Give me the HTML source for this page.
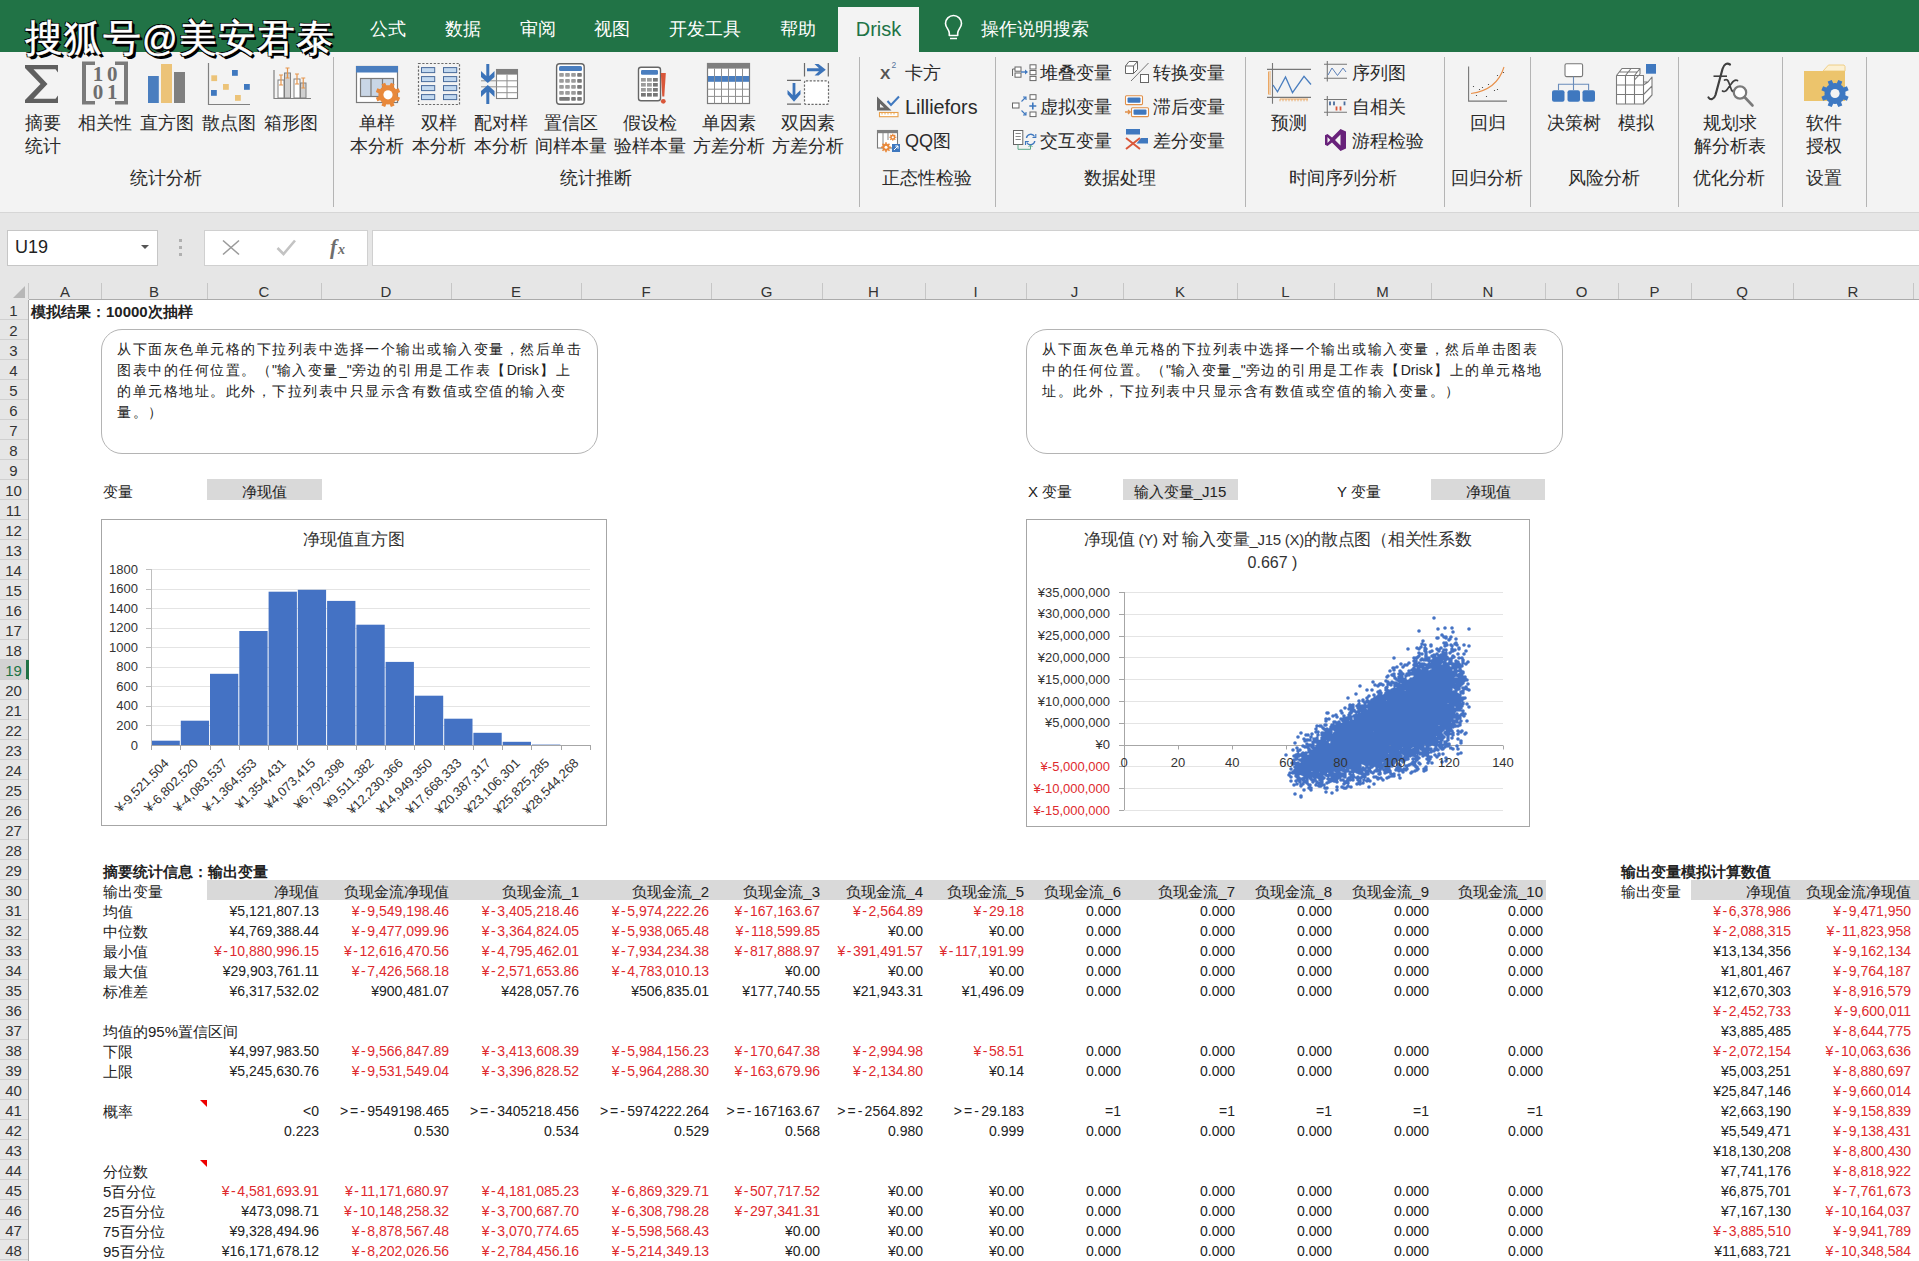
<!DOCTYPE html><html><head><meta charset="utf-8"><style>
*{box-sizing:border-box;margin:0;padding:0}
html,body{width:1919px;height:1261px;overflow:hidden;background:#fff;font-family:"Liberation Sans",sans-serif;color:#000}
.a{position:absolute}
.t{position:absolute;white-space:nowrap}
.c{position:absolute;white-space:nowrap;height:20px;line-height:23px;font-size:15px;color:#222;padding:0 2px}
.n{font-size:14px}
.dm{margin:0 1.5px}
.r{text-align:right}
.red{color:#de2a2e}
.ctr{text-align:center}
.rl{position:absolute;font-size:18px;color:#2a2a2a;white-space:nowrap;line-height:23px;text-align:center}
.sep{position:absolute;width:1px;background:#b4b4b4;top:57px;height:150px}
</style></head><body>
<div class="a" style="left:0;top:0;width:1919px;height:52px;background:#217346"></div>
<div class="t" style="left:328px;width:120px;text-align:center;top:18px;font-size:18px;line-height:22px;color:#fff">公式</div>
<div class="t" style="left:403px;width:120px;text-align:center;top:18px;font-size:18px;line-height:22px;color:#fff">数据</div>
<div class="t" style="left:478px;width:120px;text-align:center;top:18px;font-size:18px;line-height:22px;color:#fff">审阅</div>
<div class="t" style="left:552px;width:120px;text-align:center;top:18px;font-size:18px;line-height:22px;color:#fff">视图</div>
<div class="t" style="left:645px;width:120px;text-align:center;top:18px;font-size:18px;line-height:22px;color:#fff">开发工具</div>
<div class="t" style="left:738px;width:120px;text-align:center;top:18px;font-size:18px;line-height:22px;color:#fff">帮助</div>
<div class="a" style="left:838px;top:7px;width:81px;height:46px;background:#f3f3f3"></div>
<div class="t" style="left:838px;width:81px;text-align:center;top:18px;font-size:20px;line-height:22px;color:#217346">Drisk</div>
<div class="t" style="left:981px;top:18px;font-size:18px;line-height:22px;color:#fff">操作说明搜索</div>
<div class="a" style="left:0;top:52px;width:1919px;height:161px;background:#f3f3f3;border-bottom:1px solid #d6d6d6"></div>
<div class="sep" style="left:333px"></div>
<div class="sep" style="left:859px"></div>
<div class="sep" style="left:995px"></div>
<div class="sep" style="left:1245px"></div>
<div class="sep" style="left:1444px"></div>
<div class="sep" style="left:1530px"></div>
<div class="sep" style="left:1678px"></div>
<div class="sep" style="left:1782px"></div>
<div class="sep" style="left:1866px"></div>
<div class="rl" style="left:86px;width:160px;top:167px">统计分析</div>
<div class="rl" style="left:516px;width:160px;top:167px">统计推断</div>
<div class="rl" style="left:847px;width:160px;top:167px">正态性检验</div>
<div class="rl" style="left:1040px;width:160px;top:167px">数据处理</div>
<div class="rl" style="left:1263px;width:160px;top:167px">时间序列分析</div>
<div class="rl" style="left:1407px;width:160px;top:167px">回归分析</div>
<div class="rl" style="left:1524px;width:160px;top:167px">风险分析</div>
<div class="rl" style="left:1649px;width:160px;top:167px">优化分析</div>
<div class="rl" style="left:1744px;width:160px;top:167px">设置</div>
<div class="rl" style="left:-17px;width:120px;top:112px">摘要<br>统计</div>
<div class="rl" style="left:45px;width:120px;top:112px">相关性</div>
<div class="rl" style="left:107px;width:120px;top:112px">直方图</div>
<div class="rl" style="left:169px;width:120px;top:112px">散点图</div>
<div class="rl" style="left:231px;width:120px;top:112px">箱形图</div>
<div class="rl" style="left:317px;width:120px;top:112px">单样<br>本分析</div>
<div class="rl" style="left:379px;width:120px;top:112px">双样<br>本分析</div>
<div class="rl" style="left:441px;width:120px;top:112px">配对样<br>本分析</div>
<div class="rl" style="left:511px;width:120px;top:112px">置信区<br>间样本量</div>
<div class="rl" style="left:590px;width:120px;top:112px">假设检<br>验样本量</div>
<div class="rl" style="left:669px;width:120px;top:112px">单因素<br>方差分析</div>
<div class="rl" style="left:748px;width:120px;top:112px">双因素<br>方差分析</div>
<div class="rl" style="left:1229px;width:120px;top:112px">预测</div>
<div class="rl" style="left:1428px;width:120px;top:112px">回归</div>
<div class="rl" style="left:1514px;width:120px;top:112px">决策树</div>
<div class="rl" style="left:1576px;width:120px;top:112px">模拟</div>
<div class="rl" style="left:1670px;width:120px;top:112px">规划求<br>解分析表</div>
<div class="rl" style="left:1764px;width:120px;top:112px">软件<br>授权</div>
<div class="t" style="left:905px;top:61px;font-size:18px;line-height:24px;color:#2a2a2a">卡方</div>
<div class="t" style="left:905px;top:95px;font-size:19.8px;line-height:24px;color:#2a2a2a">Lilliefors</div>
<div class="t" style="left:905px;top:129px;font-size:18px;line-height:24px;color:#2a2a2a">QQ图</div>
<div class="t" style="left:1040px;top:61px;font-size:18px;line-height:24px;color:#2a2a2a">堆叠变量</div>
<div class="t" style="left:1040px;top:95px;font-size:18px;line-height:24px;color:#2a2a2a">虚拟变量</div>
<div class="t" style="left:1040px;top:129px;font-size:18px;line-height:24px;color:#2a2a2a">交互变量</div>
<div class="t" style="left:1153px;top:61px;font-size:18px;line-height:24px;color:#2a2a2a">转换变量</div>
<div class="t" style="left:1153px;top:95px;font-size:18px;line-height:24px;color:#2a2a2a">滞后变量</div>
<div class="t" style="left:1153px;top:129px;font-size:18px;line-height:24px;color:#2a2a2a">差分变量</div>
<div class="t" style="left:1352px;top:61px;font-size:18px;line-height:24px;color:#2a2a2a">序列图</div>
<div class="t" style="left:1352px;top:95px;font-size:18px;line-height:24px;color:#2a2a2a">自相关</div>
<div class="t" style="left:1352px;top:129px;font-size:18px;line-height:24px;color:#2a2a2a">游程检验</div>
<svg class="a" style="left:0;top:0" width="1919" height="300" viewBox="0 0 1919 300">
<path d="M25 65 H58 V72.5 L55.5 69.2 H33.5 L47.5 84 L33.5 98.8 H55.5 L58 95.5 V103 H25 V100 L40.5 84 L25 68 Z" fill="#5f5f5f"/>
<path d="M82 61.5 H95 V65 H86 V101 H95 V104.5 H82 Z" fill="#7a7a7a"/>
<path d="M128 61.5 H115 V65 H124 V101 H115 V104.5 H128 Z" fill="#7a7a7a"/>
<text x="98" y="81" text-anchor="middle" font-family="Liberation Serif" font-weight="bold" font-size="21" fill="#6e6e6e">1</text>
<text x="112.3" y="81" text-anchor="middle" font-family="Liberation Serif" font-weight="bold" font-size="21" fill="#6e6e6e">0</text>
<text x="98" y="98.8" text-anchor="middle" font-family="Liberation Serif" font-weight="bold" font-size="21" fill="#6e6e6e">0</text>
<text x="112.3" y="98.8" text-anchor="middle" font-family="Liberation Serif" font-weight="bold" font-size="21" fill="#6e6e6e">1</text>
<rect x="148" y="76" width="10.8" height="27" fill="#4a7ebf"/>
<rect x="161" y="64" width="11" height="39" fill="#ecc378"/>
<rect x="174" y="72" width="11" height="31" fill="#7f7f7f"/>
<path d="M208.5 63 V104.5 H250" fill="none" stroke="#808080" stroke-width="1.2"/>
<rect x="211.3" y="75.3" width="5.8" height="5.8" fill="#ecc378"/>
<rect x="232" y="70" width="5.8" height="5.8" fill="#3f78bf"/>
<rect x="223" y="84" width="5.8" height="5.8" fill="#ecc378"/>
<rect x="244" y="84" width="5.8" height="5.8" fill="#3f78bf"/>
<rect x="211" y="90" width="5.8" height="5.8" fill="#3f78bf"/>
<rect x="235" y="95" width="5.8" height="5.8" fill="#ecc378"/>
<path d="M274 70 V98.5 H311" fill="none" stroke="#808080" stroke-width="1.2"/>
<rect x="278" y="80" width="6" height="18" fill="#fff" stroke="#808080" stroke-width="1"/>
<path d="M281.0 75 V85 M279.0 75 H283.0 M279.0 85 H283.0" stroke="#e5954c" stroke-width="1.2" fill="none"/>
<rect x="284.5" y="73" width="6" height="25" fill="#d0d0d0" stroke="#808080" stroke-width="1"/>
<path d="M287.5 68 V78 M285.5 68 H289.5 M285.5 78 H289.5" stroke="#e5954c" stroke-width="1.2" fill="none"/>
<rect x="294" y="79" width="6" height="19" fill="#fff" stroke="#808080" stroke-width="1"/>
<path d="M297.0 74 V84 M295.0 74 H299.0 M295.0 84 H299.0" stroke="#e5954c" stroke-width="1.2" fill="none"/>
<rect x="300.5" y="83" width="5.5" height="15" fill="#d0d0d0" stroke="#808080" stroke-width="1"/>
<path d="M303.25 78 V88 M301.25 78 H305.25 M301.25 88 H305.25" stroke="#e5954c" stroke-width="1.2" fill="none"/>
<rect x="356.5" y="66.5" width="41" height="36" fill="#fff" stroke="#7a7a7a" stroke-width="1.2"/>
<rect x="356" y="66" width="42" height="6.5" fill="#4a7ebf"/>
<rect x="360.5" y="78.5" width="33" height="18" fill="#c9d6e6" stroke="#7a7a7a" stroke-width="1.2"/>
<path d="M371 78.5 V96.5 M382.5 78.5 V96.5" stroke="#7a7a7a" stroke-width="1.2"/>
<path d="M397.60 94.80 L397.46 96.45 L400.15 97.72 L398.66 101.33 L395.85 100.32 L394.79 101.59 L393.52 102.65 L394.53 105.46 L390.92 106.95 L389.65 104.26 L388.00 104.40 L386.35 104.26 L385.08 106.95 L381.47 105.46 L382.48 102.65 L381.21 101.59 L380.15 100.32 L377.34 101.33 L375.85 97.72 L378.54 96.45 L378.40 94.80 L378.54 93.15 L375.85 91.88 L377.34 88.27 L380.15 89.28 L381.21 88.01 L382.48 86.95 L381.47 84.14 L385.08 82.65 L386.35 85.34 L388.00 85.20 L389.65 85.34 L390.92 82.65 L394.53 84.14 L393.52 86.95 L394.79 88.01 L395.85 89.28 L398.66 88.27 L400.15 91.88 L397.46 93.15Z" fill="#e8883a"/><circle cx="388" cy="94.8" r="4.6" fill="#fff"/>
<rect x="418.5" y="63.5" width="41" height="41" fill="none" stroke="#6a6a6a" stroke-width="1.2" stroke-dasharray="2.2 1.6"/>
<rect x="421.5" y="67.6" width="13.2" height="5" fill="#c3d9f0" stroke="#4a6c9c" stroke-width="1"/>
<rect x="443.5" y="67.6" width="13.2" height="5" fill="#c3d9f0" stroke="#4a6c9c" stroke-width="1"/>
<rect x="421.5" y="76.6" width="13.2" height="5" fill="#c3d9f0" stroke="#4a6c9c" stroke-width="1"/>
<rect x="443.5" y="76.6" width="13.2" height="5" fill="#c3d9f0" stroke="#4a6c9c" stroke-width="1"/>
<rect x="421.5" y="85.6" width="13.2" height="5" fill="#c3d9f0" stroke="#4a6c9c" stroke-width="1"/>
<rect x="443.5" y="85.6" width="13.2" height="5" fill="#c3d9f0" stroke="#4a6c9c" stroke-width="1"/>
<rect x="421.5" y="94.6" width="13.2" height="5" fill="#c3d9f0" stroke="#4a6c9c" stroke-width="1"/>
<rect x="443.5" y="94.6" width="13.2" height="5" fill="#c3d9f0" stroke="#4a6c9c" stroke-width="1"/>
<rect x="496.5" y="69.5" width="21" height="29" fill="#fff" stroke="#808080" stroke-width="1.1"/>
<rect x="496" y="69" width="22" height="5.6" fill="#7f7f7f"/>
<path d="M481 80.8 H517.5 M481 86.8 H517.5 M496.5 92.7 H517.5 M507 74.6 V98.5" stroke="#909090" stroke-width="1"/>
<path d="M486.3 64 H489.3 V76 L494.5 71 V77 L487.8 83 L481 77 V71 L486.3 76 Z" fill="#3b73b9"/>
<path d="M486.3 104 H489.3 V92 L494.5 97 V91 L487.8 85 L481 91 V97 L486.3 92 Z" fill="#3b73b9"/>
<rect x="556.6" y="63.8" width="27.6" height="40.4" rx="3" fill="#fff" stroke="#666" stroke-width="1.4"/>
<rect x="559" y="66" width="23" height="5" rx="1.5" fill="#4a7ebf"/>
<rect x="559.2" y="73" width="4.6" height="3.8" rx="0.8" fill="#9c9c9c"/>
<rect x="565.2" y="73" width="4.6" height="3.8" rx="0.8" fill="#9c9c9c"/>
<rect x="571.2" y="73" width="4.6" height="3.8" rx="0.8" fill="#9c9c9c"/>
<rect x="577.2" y="73" width="4.6" height="3.8" rx="0.8" fill="#7a7a7a"/>
<rect x="559.2" y="79" width="4.6" height="3.8" rx="0.8" fill="#9c9c9c"/>
<rect x="565.2" y="79" width="4.6" height="3.8" rx="0.8" fill="#9c9c9c"/>
<rect x="571.2" y="79" width="4.6" height="3.8" rx="0.8" fill="#9c9c9c"/>
<rect x="577.2" y="79" width="4.6" height="3.8" rx="0.8" fill="#7a7a7a"/>
<rect x="559.2" y="85" width="4.6" height="3.8" rx="0.8" fill="#9c9c9c"/>
<rect x="565.2" y="85" width="4.6" height="3.8" rx="0.8" fill="#9c9c9c"/>
<rect x="571.2" y="85" width="4.6" height="3.8" rx="0.8" fill="#9c9c9c"/>
<rect x="577.2" y="85" width="4.6" height="3.8" rx="0.8" fill="#7a7a7a"/>
<rect x="559.2" y="91" width="4.6" height="3.8" rx="0.8" fill="#9c9c9c"/>
<rect x="565.2" y="91" width="4.6" height="3.8" rx="0.8" fill="#9c9c9c"/>
<rect x="571.2" y="91" width="4.6" height="3.8" rx="0.8" fill="#9c9c9c"/>
<rect x="577.2" y="91" width="4.6" height="3.8" rx="0.8" fill="#7a7a7a"/>
<rect x="559.2" y="97" width="10.6" height="3.8" rx="0.8" fill="#7a7a7a"/>
<rect x="571.2" y="97" width="4.6" height="3.8" rx="0.8" fill="#7a7a7a"/>
<rect x="577.2" y="97" width="4.6" height="3.8" rx="0.8" fill="#7a7a7a"/>
<rect x="638.5" y="67.2" width="22" height="33.6" rx="2.5" fill="#fff" stroke="#666" stroke-width="1.4"/>
<rect x="641" y="70" width="17" height="4.8" rx="1.2" fill="#4a7ebf"/>
<rect x="641" y="78" width="4.8" height="3.6" fill="#9c9c9c"/>
<rect x="647" y="78" width="4.8" height="3.6" fill="#9c9c9c"/>
<rect x="653" y="78" width="4.8" height="3.6" fill="#777"/>
<rect x="641" y="83" width="4.8" height="3.6" fill="#9c9c9c"/>
<rect x="647" y="83" width="4.8" height="3.6" fill="#9c9c9c"/>
<rect x="653" y="83" width="4.8" height="3.6" fill="#777"/>
<rect x="641" y="88" width="4.8" height="3.6" fill="#9c9c9c"/>
<rect x="647" y="88" width="4.8" height="3.6" fill="#9c9c9c"/>
<rect x="653" y="88" width="4.8" height="3.6" fill="#777"/>
<rect x="641" y="93" width="4.8" height="3.6" fill="#777"/>
<rect x="647" y="93" width="4.8" height="3.6" fill="#777"/>
<rect x="653" y="93" width="4.8" height="3.6" fill="#777"/>
<path d="M660.8 73 H665.8 L664.3 96.5 H662.3 Z" fill="#d9573a"/><circle cx="663.3" cy="101.3" r="2.4" fill="#d9573a"/>
<rect x="707.5" y="63.5" width="42" height="40" fill="#fff" stroke="#7a7a7a" stroke-width="1.2"/>
<rect x="707" y="63" width="43" height="5.6" fill="#7f7f7f"/>
<path d="M714.5 68.5 V103.5" stroke="#909090" stroke-width="1"/>
<path d="M721.5 68.5 V103.5" stroke="#909090" stroke-width="1"/>
<path d="M728.5 68.5 V103.5" stroke="#909090" stroke-width="1"/>
<path d="M735.5 68.5 V103.5" stroke="#909090" stroke-width="1"/>
<path d="M742.5 68.5 V103.5" stroke="#909090" stroke-width="1"/>
<path d="M707.5 89.2 H749.5 M707.5 96.4 H749.5" stroke="#909090" stroke-width="1"/>
<rect x="708" y="76" width="6.2" height="5.8" fill="#4a7ebf"/>
<rect x="715" y="76" width="6.2" height="5.8" fill="#4a7ebf"/>
<rect x="722" y="76" width="6.2" height="5.8" fill="#4a7ebf"/>
<rect x="729" y="76" width="6.2" height="5.8" fill="#4a7ebf"/>
<rect x="736" y="76" width="6.2" height="5.8" fill="#4a7ebf"/>
<rect x="743" y="76" width="6.2" height="5.8" fill="#4a7ebf"/>
<path d="M807 68.3 H819 L814.5 64 H818.5 L825.8 69.7 L818.5 75.5 H814.5 L819 71.2 H807 Z" fill="#3b73b9"/>
<path d="M804.5 63 V76.6 M828.3 63 V76.6 M787 80.4 H801 M787 104.2 H801" stroke="#6a6a6a" stroke-width="1.2"/>
<path d="M792.6 83 H795.4 V95 L800.5 90 V94.3 L794 101.8 L787.5 94.3 V90 L792.6 95 Z" fill="#3b73b9"/>
<rect x="804.5" y="80.8" width="24" height="23.6" rx="1.5" fill="#fff" stroke="#6a6a6a" stroke-width="1.2" stroke-dasharray="2.2 1.5"/>
<text x="880" y="79" font-family="Liberation Sans" font-weight="bold" font-size="15.5" fill="#555">X</text>
<text x="891.5" y="67.5" font-family="Liberation Sans" font-size="8.5" fill="#56739c">2</text>
<path d="M877 96.5 V110.5 H891.5 Z M880 103.8 V107.6 H884 Z" fill="#666" fill-rule="evenodd"/>
<path d="M887.5 101 L891 105 L899 96.5" fill="none" stroke="#3f78bf" stroke-width="2"/>
<rect x="879.5" y="112.5" width="18.5" height="4.2" fill="#fff" stroke="#e8a04b" stroke-width="1.1"/>
<path d="M882 112.5 V114.5 M885 112.5 V114.5 M888 112.5 V114.5 M891 112.5 V114.5 M894 112.5 V114.5" stroke="#e8a04b" stroke-width="0.9"/>
<rect x="877.5" y="130.5" width="20" height="17.5" fill="#fff" stroke="#7a7a7a" stroke-width="1.1"/>
<rect x="877" y="130" width="21" height="3.2" fill="#7f7f7f"/>
<path d="M883 133 V147 M888 133 V140" stroke="#888" stroke-width="1"/>
<path d="M889.33 145.82 L889.51 146.41 L890.94 146.42 L890.94 147.98 L889.51 147.99 L889.33 148.58 L889.04 149.13 L890.05 150.14 L888.94 151.25 L887.93 150.24 L887.38 150.53 L886.79 150.71 L886.78 152.14 L885.22 152.14 L885.21 150.71 L884.62 150.53 L884.07 150.24 L883.06 151.25 L881.95 150.14 L882.96 149.13 L882.67 148.58 L882.49 147.99 L881.06 147.98 L881.06 146.42 L882.49 146.41 L882.67 145.82 L882.96 145.27 L881.95 144.26 L883.06 143.15 L884.07 144.16 L884.62 143.87 L885.21 143.69 L885.22 142.26 L886.78 142.26 L886.79 143.69 L887.38 143.87 L887.93 144.16 L888.94 143.15 L890.05 144.26 L889.04 145.27Z" fill="#e8883a"/><circle cx="886" cy="147.2" r="1.5" fill="#fff"/>
<path d="M895.20 136.31 L895.34 136.73 L896.36 136.74 L896.36 137.86 L895.34 137.87 L895.20 138.29 L895.00 138.69 L895.71 139.42 L894.92 140.21 L894.19 139.50 L893.79 139.70 L893.37 139.84 L893.36 140.86 L892.24 140.86 L892.23 139.84 L891.81 139.70 L891.41 139.50 L890.68 140.21 L889.89 139.42 L890.60 138.69 L890.40 138.29 L890.26 137.87 L889.24 137.86 L889.24 136.74 L890.26 136.73 L890.40 136.31 L890.60 135.91 L889.89 135.18 L890.68 134.39 L891.41 135.10 L891.81 134.90 L892.23 134.76 L892.24 133.74 L893.36 133.74 L893.37 134.76 L893.79 134.90 L894.19 135.10 L894.92 134.39 L895.71 135.18 L895.00 135.91Z" fill="#e8883a"/><circle cx="892.8" cy="137.3" r="1.1" fill="#fff"/>
<rect x="892" y="144" width="8" height="8" fill="#3f78bf"/><path d="M894 150 L898 146 M895.3 146 H898 V148.7" stroke="#fff" stroke-width="1" fill="none"/>
<path d="M1012.5 69 V76 M1012.5 69 H1015" stroke="#666" stroke-width="1" fill="none"/>
<rect x="1015" y="67" width="6" height="4.2" fill="#fff" stroke="#666" stroke-width="1"/>
<rect x="1015" y="73" width="6" height="4.2" fill="#fff" stroke="#666" stroke-width="1"/>
<path d="M1021 72 H1026" stroke="#3f78bf" stroke-width="1.4"/><path d="M1025 69.5 L1028 72 L1025 74.5 Z" fill="#3f78bf"/>
<rect x="1030" y="64.8" width="6" height="4.2" fill="#fff" stroke="#666" stroke-width="1"/>
<rect x="1030" y="70.5" width="6" height="4.2" fill="#fff" stroke="#666" stroke-width="1"/>
<rect x="1030" y="76.4" width="6" height="4.2" fill="#fff" stroke="#666" stroke-width="1"/>
<rect x="1012.5" y="103" width="6.5" height="5" fill="#fff" stroke="#666" stroke-width="1"/>
<path d="M1021.5 101.5 L1026 97 M1023 97 H1026 V100 M1021.5 110.5 L1026 115 M1023 115 H1026 V112" stroke="#3f78bf" stroke-width="1.1" fill="none"/>
<path d="M1032.8 102.5 V109.5 M1029.3 106 H1036.3" stroke="#3f78bf" stroke-width="1.6"/>
<rect x="1030" y="94.7" width="6" height="4.6" fill="#fff" stroke="#666" stroke-width="1"/>
<rect x="1030" y="112" width="6" height="4.6" fill="#fff" stroke="#666" stroke-width="1"/>
<rect x="1013.5" y="130.5" width="9.3" height="14" fill="#fff" stroke="#666" stroke-width="1"/>
<path d="M1015.5 133.5 H1020.8 M1015.5 136.5 H1020.8 M1015.5 139.5 H1020.8" stroke="#888" stroke-width="1"/>
<path d="M1026.5 138 A4.3 4.3 0 0 1 1034.5 136.5 M1034.8 141 A4.3 4.3 0 0 1 1026.8 142.5" stroke="#3f78bf" stroke-width="1.4" fill="none"/>
<path d="M1035.8 134 V137.5 H1032.5 M1025.5 145 V141.5 H1028.8" stroke="#3f78bf" stroke-width="1.1" fill="none"/>
<path d="M1018 144.5 V149.3 H1030.5 V145.5 M1028.5 147 L1030.5 145 L1032.5 147" stroke="#5aa889" stroke-width="1" fill="none"/>
<path d="M1125.5 66 H1133.5 V73.5 H1125.5 Z M1125.5 66 L1129 61.5 H1137.5 L1133.5 66 M1137.5 61.5 V69.5 L1133.5 73.5" fill="#fff" stroke="#666" stroke-width="1"/>
<path d="M1131 81 L1148.5 63" stroke="#666" stroke-width="0.9"/>
<rect x="1140.5" y="74.5" width="8" height="8" fill="#fff" stroke="#666" stroke-width="1"/>
<rect x="1125.5" y="95.8" width="17" height="8.8" rx="1" fill="#fff" stroke="#e0904a" stroke-width="1.1"/>
<rect x="1127.5" y="97.5" width="13" height="5.2" rx="1" fill="#3f78bf"/>
<rect x="1131.5" y="107.8" width="17" height="8.8" rx="1" fill="#fff" stroke="#e0904a" stroke-width="1.1"/>
<rect x="1133.5" y="109.5" width="13" height="5.2" rx="1" fill="#3f78bf"/>
<path d="M1125 112 H1129.5 M1128 110 L1130.2 112 L1128 114" stroke="#e0904a" stroke-width="1.3" fill="none"/>
<rect x="1126" y="129" width="14" height="5.5" fill="#3f78bf"/>
<path d="M1141 138 H1148 V143.5 H1136.5 Z" fill="#3f78bf"/>
<path d="M1126 138 L1140 149 M1126 149 L1140 138" stroke="#d9573a" stroke-width="2" fill="none"/>
<path d="M1272.5 63 V103.7 M1267 69.4 H1311 M1267 97.4 H1311" stroke="#777" stroke-width="1.1" fill="none"/>
<path d="M1273 85 L1277.5 91.8 L1285.5 77 L1292.5 92.6 L1304 76.4 L1311 84.5" stroke="#4a7ebf" stroke-width="1.3" fill="none"/>
<path d="M1268 72 H1271 M1268 74 H1271 M1268 76 H1271 M1268 78 H1271 M1268 80 H1271 M1268 82 H1271 M1268 84 H1271 M1268 86 H1271 M1268 88 H1271 M1268 90 H1271 M1268 92 H1271 M1268 94 H1271 M1268.5 72 V94 M1280 99 V101.3 M1283 99 V101.3 M1286 99 V101.3 M1289 99 V101.3 M1292 99 V101.3 M1295 99 V101.3 M1298 99 V101.3 M1301 99 V101.3 M1304 99 V101.3 M1307 99 V101.3 M1280 99 H1308" stroke="#eaa35a" stroke-width="0.9" fill="none"/>
<path d="M1327.3 61 V81.6 M1324 64.3 H1347 M1324 78.3 H1347" stroke="#777" stroke-width="1.1" fill="none"/>
<path d="M1328 75 L1332 68 L1337.5 75.5 L1343 68 L1346 72" stroke="#5a7fb8" stroke-width="1" fill="none"/>
<path d="M1327.3 96 V116 M1324 99.5 H1347 M1324 112.3 H1347" stroke="#777" stroke-width="1.1" fill="none"/>
<rect x="1329.1" y="101.5" width="1.8" height="3.8" fill="#4a6c9c"/>
<rect x="1333.1" y="101.5" width="1.8" height="3.8" fill="#4a6c9c"/>
<rect x="1343.6" y="101.5" width="1.8" height="3.8" fill="#4a6c9c"/>
<rect x="1335.6" y="106.5" width="1.8" height="4" fill="#d9573a"/>
<rect x="1339.6" y="106.5" width="1.8" height="4" fill="#d9573a"/>
<path d="M1340.5 129 L1346 131.5 V148.5 L1340.5 151 L1332 142.5 L1327.5 146 L1325 144.8 V135.2 L1327.5 134 L1332 137.5 Z M1340.5 134.5 L1335 140 L1340.5 145.5 Z M1327.5 137 V143 L1330.3 140 Z" fill="#68217a" fill-rule="evenodd"/>
<path d="M1468.6 66.4 V101.1 H1507" stroke="#777" stroke-width="1.1" fill="none"/>
<path d="M1471 93.5 Q1497 90 1504 67" stroke="#e8904a" stroke-width="1.1" fill="none"/>
<circle cx="1473.5" cy="86.5" r="0.6" fill="#333"/>
<circle cx="1479.5" cy="89.5" r="0.6" fill="#333"/>
<circle cx="1482.5" cy="87.5" r="0.6" fill="#333"/>
<circle cx="1488.5" cy="84.5" r="0.6" fill="#333"/>
<circle cx="1476.5" cy="95.5" r="0.6" fill="#333"/>
<circle cx="1486.5" cy="96.5" r="0.6" fill="#333"/>
<circle cx="1494.5" cy="90.5" r="0.6" fill="#333"/>
<circle cx="1497.5" cy="89.5" r="0.6" fill="#333"/>
<circle cx="1497.5" cy="75.5" r="0.6" fill="#333"/>
<circle cx="1503.5" cy="72.5" r="0.6" fill="#333"/>
<rect x="1565" y="63.8" width="17.6" height="12.8" rx="1.5" fill="#fff" stroke="#777" stroke-width="1.1"/>
<path d="M1573.5 76.6 V90 M1558.5 90 V84.3 H1588.6 V90" stroke="#6a8cba" stroke-width="1.1" fill="none"/>
<rect x="1552" y="90.2" width="12.5" height="11.6" rx="2" fill="#3f78bf"/>
<rect x="1567.5" y="90.2" width="12.5" height="11.6" rx="2" fill="#3f78bf"/>
<rect x="1582.5" y="90.2" width="12.5" height="11.6" rx="2" fill="#3f78bf"/>
<path d="M1616.5 75.5 H1643.5 V104 H1616.5 Z M1625.5 75.5 V104 M1634.5 75.5 V104 M1616.5 85 H1643.5 M1616.5 94.5 H1643.5 M1616.5 75.5 L1622 68.5 H1640 L1634.5 75.5 M1625.5 75.5 L1631 68.5 M1619.3 72 H1637.2 M1643.5 104 L1652 95 V77 L1648 82 H1643.5 M1643.5 85 L1648 82 M1643.5 94.5 L1652 86 M1634.5 75.5 V80 L1640 74 V68.5" fill="#fff" stroke="#7a7a7a" stroke-width="1.1" stroke-linejoin="round"/>
<rect x="1646" y="64" width="10" height="9.7" fill="#3f78bf"/>
<path d="M1708.5 97.5 C1710.5 100.5 1714 99.5 1715.5 95 L1722.5 69 C1724 64 1727 62.5 1730 64.5" fill="none" stroke="#404040" stroke-width="2.2" stroke-linecap="round"/>
<path d="M1713.5 76.2 H1727" stroke="#404040" stroke-width="1.6"/>
<path d="M1724.5 80 C1727 79 1728 80 1729 83 L1731.5 90 C1732.5 92 1734 92 1736.5 90.5 M1737.5 80.5 C1735.5 79.5 1733.5 80.5 1731.5 83.5 L1727.5 89 C1726 91.5 1724 92 1722.5 91" fill="none" stroke="#404040" stroke-width="1.7" stroke-linecap="round"/>
<circle cx="1740" cy="92.5" r="6.2" fill="#fff" stroke="#7a7a7a" stroke-width="2.2"/><path d="M1744.5 97 L1752.5 105.5" stroke="#7a7a7a" stroke-width="2.6" stroke-linecap="round"/>
<path d="M1823 71 L1828.5 65 H1844 L1845 66.5 V71 Z" fill="#fcf0d2" stroke="#eecb7e" stroke-width="0.9"/>
<path d="M1804 71 H1845 V101 H1804 Z" fill="#ecc46c"/>
<path d="M1845.50 93.50 L1845.34 95.31 L1848.61 96.77 L1846.94 100.81 L1843.59 99.54 L1842.42 100.92 L1841.04 102.09 L1842.31 105.44 L1838.27 107.11 L1836.81 103.84 L1835.00 104.00 L1833.19 103.84 L1831.73 107.11 L1827.69 105.44 L1828.96 102.09 L1827.58 100.92 L1826.41 99.54 L1823.06 100.81 L1821.39 96.77 L1824.66 95.31 L1824.50 93.50 L1824.66 91.69 L1821.39 90.23 L1823.06 86.19 L1826.41 87.46 L1827.58 86.08 L1828.96 84.91 L1827.69 81.56 L1831.73 79.89 L1833.19 83.16 L1835.00 83.00 L1836.81 83.16 L1838.27 79.89 L1842.31 81.56 L1841.04 84.91 L1842.42 86.08 L1843.59 87.46 L1846.94 86.19 L1848.61 90.23 L1845.34 91.69Z" fill="#3d78c2"/><circle cx="1835" cy="93.5" r="4.6" fill="#f3f3f3"/>
<path d="M949.3 35.5 V33 C949.3 29.5 945.5 27.5 945.5 23.5 A8 8 0 0 1 961.5 23.5 C961.5 27.5 957.7 29.5 957.7 33 V35.5 Z M950 38.5 H957" fill="none" stroke="#fff" stroke-width="1.6" stroke-linejoin="round"/>
</svg>
<div class="a" style="left:0;top:213px;width:1919px;height:87px;background:#e6e6e6"></div>
<div class="a" style="left:7px;top:229.5px;width:151px;height:36px;background:#fff;border:1px solid #c6c6c6"></div>
<div class="t" style="left:15px;top:236px;font-size:18px;line-height:22px;color:#222">U19</div>
<div class="a" style="left:141px;top:245px;width:0;height:0;border-left:4px solid transparent;border-right:4px solid transparent;border-top:4px solid #555"></div>
<div class="a" style="left:179px;top:239px;width:3px;height:3px;background:#b0b0b0"></div>
<div class="a" style="left:179px;top:246px;width:3px;height:3px;background:#b0b0b0"></div>
<div class="a" style="left:179px;top:253px;width:3px;height:3px;background:#b0b0b0"></div>
<div class="a" style="left:204px;top:229.5px;width:164px;height:36px;background:#fff;border:1px solid #d0d0d0"></div>
<div class="a" style="left:372px;top:229.5px;width:1560px;height:36px;background:#fff;border:1px solid #d0d0d0"></div>
<svg class="a" style="left:0;top:0" width="1919" height="300" viewBox="0 0 1919 300">
<path d="M223 240.5 L239 254.5 M239 240.5 L223 254.5" stroke="#9a9a9a" stroke-width="1.6"/>
<path d="M277.5 248 L283.5 254 L295 240.5" stroke="#c3c3c3" stroke-width="2.6" fill="none"/>
<text x="330" y="254" font-family="Liberation Serif" font-style="italic" font-weight="bold" font-size="21" fill="#6e6e6e">f</text><text x="338" y="254" font-family="Liberation Serif" font-style="italic" font-weight="bold" font-size="14" fill="#6e6e6e">x</text>
</svg>
<div class="a" style="left:0;top:281px;width:1919px;height:19px;background:#e6e6e6;border-bottom:1px solid #ababab"></div>
<div class="a" style="left:0;top:281px;width:29px;height:1000px;background:#e6e6e6"></div>
<svg class="a" style="left:0;top:281px" width="29" height="19"><path d="M25 5 L25 17 L13 17 Z" fill="#b7b7b7"/></svg>
<div class="a" style="left:101px;top:283px;width:1px;height:16px;background:#c6c6c6"></div>
<div class="t" style="left:29px;width:72px;text-align:center;top:281px;height:19px;line-height:21px;font-size:15px;color:#333">A</div>
<div class="a" style="left:207px;top:283px;width:1px;height:16px;background:#c6c6c6"></div>
<div class="t" style="left:101px;width:106px;text-align:center;top:281px;height:19px;line-height:21px;font-size:15px;color:#333">B</div>
<div class="a" style="left:321px;top:283px;width:1px;height:16px;background:#c6c6c6"></div>
<div class="t" style="left:207px;width:114px;text-align:center;top:281px;height:19px;line-height:21px;font-size:15px;color:#333">C</div>
<div class="a" style="left:451px;top:283px;width:1px;height:16px;background:#c6c6c6"></div>
<div class="t" style="left:321px;width:130px;text-align:center;top:281px;height:19px;line-height:21px;font-size:15px;color:#333">D</div>
<div class="a" style="left:581px;top:283px;width:1px;height:16px;background:#c6c6c6"></div>
<div class="t" style="left:451px;width:130px;text-align:center;top:281px;height:19px;line-height:21px;font-size:15px;color:#333">E</div>
<div class="a" style="left:711px;top:283px;width:1px;height:16px;background:#c6c6c6"></div>
<div class="t" style="left:581px;width:130px;text-align:center;top:281px;height:19px;line-height:21px;font-size:15px;color:#333">F</div>
<div class="a" style="left:822px;top:283px;width:1px;height:16px;background:#c6c6c6"></div>
<div class="t" style="left:711px;width:111px;text-align:center;top:281px;height:19px;line-height:21px;font-size:15px;color:#333">G</div>
<div class="a" style="left:925px;top:283px;width:1px;height:16px;background:#c6c6c6"></div>
<div class="t" style="left:822px;width:103px;text-align:center;top:281px;height:19px;line-height:21px;font-size:15px;color:#333">H</div>
<div class="a" style="left:1026px;top:283px;width:1px;height:16px;background:#c6c6c6"></div>
<div class="t" style="left:925px;width:101px;text-align:center;top:281px;height:19px;line-height:21px;font-size:15px;color:#333">I</div>
<div class="a" style="left:1123px;top:283px;width:1px;height:16px;background:#c6c6c6"></div>
<div class="t" style="left:1026px;width:97px;text-align:center;top:281px;height:19px;line-height:21px;font-size:15px;color:#333">J</div>
<div class="a" style="left:1237px;top:283px;width:1px;height:16px;background:#c6c6c6"></div>
<div class="t" style="left:1123px;width:114px;text-align:center;top:281px;height:19px;line-height:21px;font-size:15px;color:#333">K</div>
<div class="a" style="left:1334px;top:283px;width:1px;height:16px;background:#c6c6c6"></div>
<div class="t" style="left:1237px;width:97px;text-align:center;top:281px;height:19px;line-height:21px;font-size:15px;color:#333">L</div>
<div class="a" style="left:1431px;top:283px;width:1px;height:16px;background:#c6c6c6"></div>
<div class="t" style="left:1334px;width:97px;text-align:center;top:281px;height:19px;line-height:21px;font-size:15px;color:#333">M</div>
<div class="a" style="left:1545px;top:283px;width:1px;height:16px;background:#c6c6c6"></div>
<div class="t" style="left:1431px;width:114px;text-align:center;top:281px;height:19px;line-height:21px;font-size:15px;color:#333">N</div>
<div class="a" style="left:1618px;top:283px;width:1px;height:16px;background:#c6c6c6"></div>
<div class="t" style="left:1545px;width:73px;text-align:center;top:281px;height:19px;line-height:21px;font-size:15px;color:#333">O</div>
<div class="a" style="left:1691px;top:283px;width:1px;height:16px;background:#c6c6c6"></div>
<div class="t" style="left:1618px;width:73px;text-align:center;top:281px;height:19px;line-height:21px;font-size:15px;color:#333">P</div>
<div class="a" style="left:1793px;top:283px;width:1px;height:16px;background:#c6c6c6"></div>
<div class="t" style="left:1691px;width:102px;text-align:center;top:281px;height:19px;line-height:21px;font-size:15px;color:#333">Q</div>
<div class="a" style="left:1913px;top:283px;width:1px;height:16px;background:#c6c6c6"></div>
<div class="t" style="left:1793px;width:120px;text-align:center;top:281px;height:19px;line-height:21px;font-size:15px;color:#333">R</div>
<div class="a" style="left:28px;top:283px;width:1px;height:16px;background:#c6c6c6"></div>
<div class="a" style="left:28px;top:300px;width:1px;height:961px;background:#ababab"></div>
<div class="a" style="left:0;top:319px;width:28px;height:1px;background:#d0d0d0"></div>
<div class="t" style="left:0;width:27px;text-align:center;top:300px;height:20px;line-height:22px;font-size:15px;color:#333">1</div>
<div class="a" style="left:0;top:339px;width:28px;height:1px;background:#d0d0d0"></div>
<div class="t" style="left:0;width:27px;text-align:center;top:320px;height:20px;line-height:22px;font-size:15px;color:#333">2</div>
<div class="a" style="left:0;top:359px;width:28px;height:1px;background:#d0d0d0"></div>
<div class="t" style="left:0;width:27px;text-align:center;top:340px;height:20px;line-height:22px;font-size:15px;color:#333">3</div>
<div class="a" style="left:0;top:379px;width:28px;height:1px;background:#d0d0d0"></div>
<div class="t" style="left:0;width:27px;text-align:center;top:360px;height:20px;line-height:22px;font-size:15px;color:#333">4</div>
<div class="a" style="left:0;top:399px;width:28px;height:1px;background:#d0d0d0"></div>
<div class="t" style="left:0;width:27px;text-align:center;top:380px;height:20px;line-height:22px;font-size:15px;color:#333">5</div>
<div class="a" style="left:0;top:419px;width:28px;height:1px;background:#d0d0d0"></div>
<div class="t" style="left:0;width:27px;text-align:center;top:400px;height:20px;line-height:22px;font-size:15px;color:#333">6</div>
<div class="a" style="left:0;top:439px;width:28px;height:1px;background:#d0d0d0"></div>
<div class="t" style="left:0;width:27px;text-align:center;top:420px;height:20px;line-height:22px;font-size:15px;color:#333">7</div>
<div class="a" style="left:0;top:459px;width:28px;height:1px;background:#d0d0d0"></div>
<div class="t" style="left:0;width:27px;text-align:center;top:440px;height:20px;line-height:22px;font-size:15px;color:#333">8</div>
<div class="a" style="left:0;top:479px;width:28px;height:1px;background:#d0d0d0"></div>
<div class="t" style="left:0;width:27px;text-align:center;top:460px;height:20px;line-height:22px;font-size:15px;color:#333">9</div>
<div class="a" style="left:0;top:499px;width:28px;height:1px;background:#d0d0d0"></div>
<div class="t" style="left:0;width:27px;text-align:center;top:480px;height:20px;line-height:22px;font-size:15px;color:#333">10</div>
<div class="a" style="left:0;top:519px;width:28px;height:1px;background:#d0d0d0"></div>
<div class="t" style="left:0;width:27px;text-align:center;top:500px;height:20px;line-height:22px;font-size:15px;color:#333">11</div>
<div class="a" style="left:0;top:539px;width:28px;height:1px;background:#d0d0d0"></div>
<div class="t" style="left:0;width:27px;text-align:center;top:520px;height:20px;line-height:22px;font-size:15px;color:#333">12</div>
<div class="a" style="left:0;top:559px;width:28px;height:1px;background:#d0d0d0"></div>
<div class="t" style="left:0;width:27px;text-align:center;top:540px;height:20px;line-height:22px;font-size:15px;color:#333">13</div>
<div class="a" style="left:0;top:579px;width:28px;height:1px;background:#d0d0d0"></div>
<div class="t" style="left:0;width:27px;text-align:center;top:560px;height:20px;line-height:22px;font-size:15px;color:#333">14</div>
<div class="a" style="left:0;top:599px;width:28px;height:1px;background:#d0d0d0"></div>
<div class="t" style="left:0;width:27px;text-align:center;top:580px;height:20px;line-height:22px;font-size:15px;color:#333">15</div>
<div class="a" style="left:0;top:619px;width:28px;height:1px;background:#d0d0d0"></div>
<div class="t" style="left:0;width:27px;text-align:center;top:600px;height:20px;line-height:22px;font-size:15px;color:#333">16</div>
<div class="a" style="left:0;top:639px;width:28px;height:1px;background:#d0d0d0"></div>
<div class="t" style="left:0;width:27px;text-align:center;top:620px;height:20px;line-height:22px;font-size:15px;color:#333">17</div>
<div class="a" style="left:0;top:659px;width:28px;height:1px;background:#d0d0d0"></div>
<div class="t" style="left:0;width:27px;text-align:center;top:640px;height:20px;line-height:22px;font-size:15px;color:#333">18</div>
<div class="a" style="left:0;top:660px;width:28px;height:20px;background:#d2d2d2"></div>
<div class="a" style="left:26px;top:660px;width:3px;height:20px;background:#217346"></div>
<div class="a" style="left:0;top:679px;width:28px;height:1px;background:#d0d0d0"></div>
<div class="t" style="left:0;width:27px;text-align:center;top:660px;height:20px;line-height:22px;font-size:15px;color:#217346">19</div>
<div class="a" style="left:0;top:699px;width:28px;height:1px;background:#d0d0d0"></div>
<div class="t" style="left:0;width:27px;text-align:center;top:680px;height:20px;line-height:22px;font-size:15px;color:#333">20</div>
<div class="a" style="left:0;top:719px;width:28px;height:1px;background:#d0d0d0"></div>
<div class="t" style="left:0;width:27px;text-align:center;top:700px;height:20px;line-height:22px;font-size:15px;color:#333">21</div>
<div class="a" style="left:0;top:739px;width:28px;height:1px;background:#d0d0d0"></div>
<div class="t" style="left:0;width:27px;text-align:center;top:720px;height:20px;line-height:22px;font-size:15px;color:#333">22</div>
<div class="a" style="left:0;top:759px;width:28px;height:1px;background:#d0d0d0"></div>
<div class="t" style="left:0;width:27px;text-align:center;top:740px;height:20px;line-height:22px;font-size:15px;color:#333">23</div>
<div class="a" style="left:0;top:779px;width:28px;height:1px;background:#d0d0d0"></div>
<div class="t" style="left:0;width:27px;text-align:center;top:760px;height:20px;line-height:22px;font-size:15px;color:#333">24</div>
<div class="a" style="left:0;top:799px;width:28px;height:1px;background:#d0d0d0"></div>
<div class="t" style="left:0;width:27px;text-align:center;top:780px;height:20px;line-height:22px;font-size:15px;color:#333">25</div>
<div class="a" style="left:0;top:819px;width:28px;height:1px;background:#d0d0d0"></div>
<div class="t" style="left:0;width:27px;text-align:center;top:800px;height:20px;line-height:22px;font-size:15px;color:#333">26</div>
<div class="a" style="left:0;top:839px;width:28px;height:1px;background:#d0d0d0"></div>
<div class="t" style="left:0;width:27px;text-align:center;top:820px;height:20px;line-height:22px;font-size:15px;color:#333">27</div>
<div class="a" style="left:0;top:859px;width:28px;height:1px;background:#d0d0d0"></div>
<div class="t" style="left:0;width:27px;text-align:center;top:840px;height:20px;line-height:22px;font-size:15px;color:#333">28</div>
<div class="a" style="left:0;top:879px;width:28px;height:1px;background:#d0d0d0"></div>
<div class="t" style="left:0;width:27px;text-align:center;top:860px;height:20px;line-height:22px;font-size:15px;color:#333">29</div>
<div class="a" style="left:0;top:899px;width:28px;height:1px;background:#d0d0d0"></div>
<div class="t" style="left:0;width:27px;text-align:center;top:880px;height:20px;line-height:22px;font-size:15px;color:#333">30</div>
<div class="a" style="left:0;top:919px;width:28px;height:1px;background:#d0d0d0"></div>
<div class="t" style="left:0;width:27px;text-align:center;top:900px;height:20px;line-height:22px;font-size:15px;color:#333">31</div>
<div class="a" style="left:0;top:939px;width:28px;height:1px;background:#d0d0d0"></div>
<div class="t" style="left:0;width:27px;text-align:center;top:920px;height:20px;line-height:22px;font-size:15px;color:#333">32</div>
<div class="a" style="left:0;top:959px;width:28px;height:1px;background:#d0d0d0"></div>
<div class="t" style="left:0;width:27px;text-align:center;top:940px;height:20px;line-height:22px;font-size:15px;color:#333">33</div>
<div class="a" style="left:0;top:979px;width:28px;height:1px;background:#d0d0d0"></div>
<div class="t" style="left:0;width:27px;text-align:center;top:960px;height:20px;line-height:22px;font-size:15px;color:#333">34</div>
<div class="a" style="left:0;top:999px;width:28px;height:1px;background:#d0d0d0"></div>
<div class="t" style="left:0;width:27px;text-align:center;top:980px;height:20px;line-height:22px;font-size:15px;color:#333">35</div>
<div class="a" style="left:0;top:1019px;width:28px;height:1px;background:#d0d0d0"></div>
<div class="t" style="left:0;width:27px;text-align:center;top:1000px;height:20px;line-height:22px;font-size:15px;color:#333">36</div>
<div class="a" style="left:0;top:1039px;width:28px;height:1px;background:#d0d0d0"></div>
<div class="t" style="left:0;width:27px;text-align:center;top:1020px;height:20px;line-height:22px;font-size:15px;color:#333">37</div>
<div class="a" style="left:0;top:1059px;width:28px;height:1px;background:#d0d0d0"></div>
<div class="t" style="left:0;width:27px;text-align:center;top:1040px;height:20px;line-height:22px;font-size:15px;color:#333">38</div>
<div class="a" style="left:0;top:1079px;width:28px;height:1px;background:#d0d0d0"></div>
<div class="t" style="left:0;width:27px;text-align:center;top:1060px;height:20px;line-height:22px;font-size:15px;color:#333">39</div>
<div class="a" style="left:0;top:1099px;width:28px;height:1px;background:#d0d0d0"></div>
<div class="t" style="left:0;width:27px;text-align:center;top:1080px;height:20px;line-height:22px;font-size:15px;color:#333">40</div>
<div class="a" style="left:0;top:1119px;width:28px;height:1px;background:#d0d0d0"></div>
<div class="t" style="left:0;width:27px;text-align:center;top:1100px;height:20px;line-height:22px;font-size:15px;color:#333">41</div>
<div class="a" style="left:0;top:1139px;width:28px;height:1px;background:#d0d0d0"></div>
<div class="t" style="left:0;width:27px;text-align:center;top:1120px;height:20px;line-height:22px;font-size:15px;color:#333">42</div>
<div class="a" style="left:0;top:1159px;width:28px;height:1px;background:#d0d0d0"></div>
<div class="t" style="left:0;width:27px;text-align:center;top:1140px;height:20px;line-height:22px;font-size:15px;color:#333">43</div>
<div class="a" style="left:0;top:1179px;width:28px;height:1px;background:#d0d0d0"></div>
<div class="t" style="left:0;width:27px;text-align:center;top:1160px;height:20px;line-height:22px;font-size:15px;color:#333">44</div>
<div class="a" style="left:0;top:1199px;width:28px;height:1px;background:#d0d0d0"></div>
<div class="t" style="left:0;width:27px;text-align:center;top:1180px;height:20px;line-height:22px;font-size:15px;color:#333">45</div>
<div class="a" style="left:0;top:1219px;width:28px;height:1px;background:#d0d0d0"></div>
<div class="t" style="left:0;width:27px;text-align:center;top:1200px;height:20px;line-height:22px;font-size:15px;color:#333">46</div>
<div class="a" style="left:0;top:1239px;width:28px;height:1px;background:#d0d0d0"></div>
<div class="t" style="left:0;width:27px;text-align:center;top:1220px;height:20px;line-height:22px;font-size:15px;color:#333">47</div>
<div class="a" style="left:0;top:1259px;width:28px;height:1px;background:#d0d0d0"></div>
<div class="t" style="left:0;width:27px;text-align:center;top:1240px;height:20px;line-height:22px;font-size:15px;color:#333">48</div>
<div class="c " style="left:29px;top:300px;"><b>模拟结果：10000次抽样</b></div>
<div class="c " style="left:101px;top:480px;">变量</div>
<div class="a" style="left:207px;top:479px;width:115px;height:21px;background:#d9d9d9"></div>
<div class="c ctr " style="left:207px;width:114px;top:480px;">净现值</div>
<div class="c " style="left:1026px;top:480px;">X 变量</div>
<div class="a" style="left:1123px;top:479px;width:115px;height:21px;background:#d9d9d9"></div>
<div class="c ctr " style="left:1123px;width:114px;top:480px;">输入变量_J15</div>
<div class="c " style="left:1334px;top:480px;padding-left:3px">Y 变量</div>
<div class="a" style="left:1431px;top:479px;width:114px;height:21px;background:#d9d9d9"></div>
<div class="c ctr " style="left:1431px;width:114px;top:480px;">净现值</div>
<div class="c " style="left:101px;top:860px;"><b>摘要统计信息：输出变量</b></div>
<div class="a" style="left:207px;top:880px;width:1339px;height:20px;background:#d9d9d9"></div>
<div class="c " style="left:101px;top:880px;">输出变量</div>
<div class="c r " style="left:207px;width:114px;top:880px;">净现值</div>
<div class="c r " style="left:321px;width:130px;top:880px;">负现金流净现值</div>
<div class="c r " style="left:451px;width:130px;top:880px;">负现金流_1</div>
<div class="c r " style="left:581px;width:130px;top:880px;">负现金流_2</div>
<div class="c r " style="left:711px;width:111px;top:880px;">负现金流_3</div>
<div class="c r " style="left:822px;width:103px;top:880px;">负现金流_4</div>
<div class="c r " style="left:925px;width:101px;top:880px;">负现金流_5</div>
<div class="c r " style="left:1026px;width:97px;top:880px;">负现金流_6</div>
<div class="c r " style="left:1123px;width:114px;top:880px;">负现金流_7</div>
<div class="c r " style="left:1237px;width:97px;top:880px;">负现金流_8</div>
<div class="c r " style="left:1334px;width:97px;top:880px;">负现金流_9</div>
<div class="c r " style="left:1431px;width:114px;top:880px;">负现金流_10</div>
<div class="c " style="left:101px;top:900px;">均值</div>
<div class="c " style="left:101px;top:920px;">中位数</div>
<div class="c " style="left:101px;top:940px;">最小值</div>
<div class="c " style="left:101px;top:960px;">最大值</div>
<div class="c " style="left:101px;top:980px;">标准差</div>
<div class="c " style="left:101px;top:1020px;">均值的95%置信区间</div>
<div class="c " style="left:101px;top:1040px;">下限</div>
<div class="c " style="left:101px;top:1060px;">上限</div>
<div class="c " style="left:101px;top:1100px;">概率</div>
<div class="c " style="left:101px;top:1160px;">分位数</div>
<div class="c " style="left:101px;top:1180px;">5百分位</div>
<div class="c " style="left:101px;top:1200px;">25百分位</div>
<div class="c " style="left:101px;top:1220px;">75百分位</div>
<div class="c " style="left:101px;top:1240px;">95百分位</div>
<div class="c r  n" style="left:207px;width:114px;top:900px;">¥5,121,807.13</div>
<div class="c r red n" style="left:321px;width:130px;top:900px;">¥<span class="dm">-</span>9,549,198.46</div>
<div class="c r red n" style="left:451px;width:130px;top:900px;">¥<span class="dm">-</span>3,405,218.46</div>
<div class="c r red n" style="left:581px;width:130px;top:900px;">¥<span class="dm">-</span>5,974,222.26</div>
<div class="c r red n" style="left:711px;width:111px;top:900px;">¥<span class="dm">-</span>167,163.67</div>
<div class="c r red n" style="left:822px;width:103px;top:900px;">¥<span class="dm">-</span>2,564.89</div>
<div class="c r red n" style="left:925px;width:101px;top:900px;">¥<span class="dm">-</span>29.18</div>
<div class="c r  n" style="left:1026px;width:97px;top:900px;">0.000</div>
<div class="c r  n" style="left:1123px;width:114px;top:900px;">0.000</div>
<div class="c r  n" style="left:1237px;width:97px;top:900px;">0.000</div>
<div class="c r  n" style="left:1334px;width:97px;top:900px;">0.000</div>
<div class="c r  n" style="left:1431px;width:114px;top:900px;">0.000</div>
<div class="c r  n" style="left:207px;width:114px;top:920px;">¥4,769,388.44</div>
<div class="c r red n" style="left:321px;width:130px;top:920px;">¥<span class="dm">-</span>9,477,099.96</div>
<div class="c r red n" style="left:451px;width:130px;top:920px;">¥<span class="dm">-</span>3,364,824.05</div>
<div class="c r red n" style="left:581px;width:130px;top:920px;">¥<span class="dm">-</span>5,938,065.48</div>
<div class="c r red n" style="left:711px;width:111px;top:920px;">¥<span class="dm">-</span>118,599.85</div>
<div class="c r  n" style="left:822px;width:103px;top:920px;">¥0.00</div>
<div class="c r  n" style="left:925px;width:101px;top:920px;">¥0.00</div>
<div class="c r  n" style="left:1026px;width:97px;top:920px;">0.000</div>
<div class="c r  n" style="left:1123px;width:114px;top:920px;">0.000</div>
<div class="c r  n" style="left:1237px;width:97px;top:920px;">0.000</div>
<div class="c r  n" style="left:1334px;width:97px;top:920px;">0.000</div>
<div class="c r  n" style="left:1431px;width:114px;top:920px;">0.000</div>
<div class="c r red n" style="left:207px;width:114px;top:940px;">¥<span class="dm">-</span>10,880,996.15</div>
<div class="c r red n" style="left:321px;width:130px;top:940px;">¥<span class="dm">-</span>12,616,470.56</div>
<div class="c r red n" style="left:451px;width:130px;top:940px;">¥<span class="dm">-</span>4,795,462.01</div>
<div class="c r red n" style="left:581px;width:130px;top:940px;">¥<span class="dm">-</span>7,934,234.38</div>
<div class="c r red n" style="left:711px;width:111px;top:940px;">¥<span class="dm">-</span>817,888.97</div>
<div class="c r red n" style="left:822px;width:103px;top:940px;">¥<span class="dm">-</span>391,491.57</div>
<div class="c r red n" style="left:925px;width:101px;top:940px;">¥<span class="dm">-</span>117,191.99</div>
<div class="c r  n" style="left:1026px;width:97px;top:940px;">0.000</div>
<div class="c r  n" style="left:1123px;width:114px;top:940px;">0.000</div>
<div class="c r  n" style="left:1237px;width:97px;top:940px;">0.000</div>
<div class="c r  n" style="left:1334px;width:97px;top:940px;">0.000</div>
<div class="c r  n" style="left:1431px;width:114px;top:940px;">0.000</div>
<div class="c r  n" style="left:207px;width:114px;top:960px;">¥29,903,761.11</div>
<div class="c r red n" style="left:321px;width:130px;top:960px;">¥<span class="dm">-</span>7,426,568.18</div>
<div class="c r red n" style="left:451px;width:130px;top:960px;">¥<span class="dm">-</span>2,571,653.86</div>
<div class="c r red n" style="left:581px;width:130px;top:960px;">¥<span class="dm">-</span>4,783,010.13</div>
<div class="c r  n" style="left:711px;width:111px;top:960px;">¥0.00</div>
<div class="c r  n" style="left:822px;width:103px;top:960px;">¥0.00</div>
<div class="c r  n" style="left:925px;width:101px;top:960px;">¥0.00</div>
<div class="c r  n" style="left:1026px;width:97px;top:960px;">0.000</div>
<div class="c r  n" style="left:1123px;width:114px;top:960px;">0.000</div>
<div class="c r  n" style="left:1237px;width:97px;top:960px;">0.000</div>
<div class="c r  n" style="left:1334px;width:97px;top:960px;">0.000</div>
<div class="c r  n" style="left:1431px;width:114px;top:960px;">0.000</div>
<div class="c r  n" style="left:207px;width:114px;top:980px;">¥6,317,532.02</div>
<div class="c r  n" style="left:321px;width:130px;top:980px;">¥900,481.07</div>
<div class="c r  n" style="left:451px;width:130px;top:980px;">¥428,057.76</div>
<div class="c r  n" style="left:581px;width:130px;top:980px;">¥506,835.01</div>
<div class="c r  n" style="left:711px;width:111px;top:980px;">¥177,740.55</div>
<div class="c r  n" style="left:822px;width:103px;top:980px;">¥21,943.31</div>
<div class="c r  n" style="left:925px;width:101px;top:980px;">¥1,496.09</div>
<div class="c r  n" style="left:1026px;width:97px;top:980px;">0.000</div>
<div class="c r  n" style="left:1123px;width:114px;top:980px;">0.000</div>
<div class="c r  n" style="left:1237px;width:97px;top:980px;">0.000</div>
<div class="c r  n" style="left:1334px;width:97px;top:980px;">0.000</div>
<div class="c r  n" style="left:1431px;width:114px;top:980px;">0.000</div>
<div class="c r  n" style="left:207px;width:114px;top:1040px;">¥4,997,983.50</div>
<div class="c r red n" style="left:321px;width:130px;top:1040px;">¥<span class="dm">-</span>9,566,847.89</div>
<div class="c r red n" style="left:451px;width:130px;top:1040px;">¥<span class="dm">-</span>3,413,608.39</div>
<div class="c r red n" style="left:581px;width:130px;top:1040px;">¥<span class="dm">-</span>5,984,156.23</div>
<div class="c r red n" style="left:711px;width:111px;top:1040px;">¥<span class="dm">-</span>170,647.38</div>
<div class="c r red n" style="left:822px;width:103px;top:1040px;">¥<span class="dm">-</span>2,994.98</div>
<div class="c r red n" style="left:925px;width:101px;top:1040px;">¥<span class="dm">-</span>58.51</div>
<div class="c r  n" style="left:1026px;width:97px;top:1040px;">0.000</div>
<div class="c r  n" style="left:1123px;width:114px;top:1040px;">0.000</div>
<div class="c r  n" style="left:1237px;width:97px;top:1040px;">0.000</div>
<div class="c r  n" style="left:1334px;width:97px;top:1040px;">0.000</div>
<div class="c r  n" style="left:1431px;width:114px;top:1040px;">0.000</div>
<div class="c r  n" style="left:207px;width:114px;top:1060px;">¥5,245,630.76</div>
<div class="c r red n" style="left:321px;width:130px;top:1060px;">¥<span class="dm">-</span>9,531,549.04</div>
<div class="c r red n" style="left:451px;width:130px;top:1060px;">¥<span class="dm">-</span>3,396,828.52</div>
<div class="c r red n" style="left:581px;width:130px;top:1060px;">¥<span class="dm">-</span>5,964,288.30</div>
<div class="c r red n" style="left:711px;width:111px;top:1060px;">¥<span class="dm">-</span>163,679.96</div>
<div class="c r red n" style="left:822px;width:103px;top:1060px;">¥<span class="dm">-</span>2,134.80</div>
<div class="c r  n" style="left:925px;width:101px;top:1060px;">¥0.14</div>
<div class="c r  n" style="left:1026px;width:97px;top:1060px;">0.000</div>
<div class="c r  n" style="left:1123px;width:114px;top:1060px;">0.000</div>
<div class="c r  n" style="left:1237px;width:97px;top:1060px;">0.000</div>
<div class="c r  n" style="left:1334px;width:97px;top:1060px;">0.000</div>
<div class="c r  n" style="left:1431px;width:114px;top:1060px;">0.000</div>
<div class="c r  n" style="left:207px;width:114px;top:1100px;">&lt;0</div>
<div class="c r  n" style="left:321px;width:130px;top:1100px;"><span style="margin-right:2px">&gt;</span><span style="margin-right:2px">=</span><span style="margin-right:2.3px">-</span>9549198.465</div>
<div class="c r  n" style="left:451px;width:130px;top:1100px;"><span style="margin-right:2px">&gt;</span><span style="margin-right:2px">=</span><span style="margin-right:2.3px">-</span>3405218.456</div>
<div class="c r  n" style="left:581px;width:130px;top:1100px;"><span style="margin-right:2px">&gt;</span><span style="margin-right:2px">=</span><span style="margin-right:2.3px">-</span>5974222.264</div>
<div class="c r  n" style="left:711px;width:111px;top:1100px;"><span style="margin-right:2px">&gt;</span><span style="margin-right:2px">=</span><span style="margin-right:2.3px">-</span>167163.67</div>
<div class="c r  n" style="left:822px;width:103px;top:1100px;"><span style="margin-right:2px">&gt;</span><span style="margin-right:2px">=</span><span style="margin-right:2.3px">-</span>2564.892</div>
<div class="c r  n" style="left:925px;width:101px;top:1100px;"><span style="margin-right:2px">&gt;</span><span style="margin-right:2px">=</span><span style="margin-right:2.3px">-</span>29.183</div>
<div class="c r  n" style="left:1026px;width:97px;top:1100px;">=1</div>
<div class="c r  n" style="left:1123px;width:114px;top:1100px;">=1</div>
<div class="c r  n" style="left:1237px;width:97px;top:1100px;">=1</div>
<div class="c r  n" style="left:1334px;width:97px;top:1100px;">=1</div>
<div class="c r  n" style="left:1431px;width:114px;top:1100px;">=1</div>
<div class="c r  n" style="left:207px;width:114px;top:1120px;">0.223</div>
<div class="c r  n" style="left:321px;width:130px;top:1120px;">0.530</div>
<div class="c r  n" style="left:451px;width:130px;top:1120px;">0.534</div>
<div class="c r  n" style="left:581px;width:130px;top:1120px;">0.529</div>
<div class="c r  n" style="left:711px;width:111px;top:1120px;">0.568</div>
<div class="c r  n" style="left:822px;width:103px;top:1120px;">0.980</div>
<div class="c r  n" style="left:925px;width:101px;top:1120px;">0.999</div>
<div class="c r  n" style="left:1026px;width:97px;top:1120px;">0.000</div>
<div class="c r  n" style="left:1123px;width:114px;top:1120px;">0.000</div>
<div class="c r  n" style="left:1237px;width:97px;top:1120px;">0.000</div>
<div class="c r  n" style="left:1334px;width:97px;top:1120px;">0.000</div>
<div class="c r  n" style="left:1431px;width:114px;top:1120px;">0.000</div>
<div class="c r red n" style="left:207px;width:114px;top:1180px;">¥<span class="dm">-</span>4,581,693.91</div>
<div class="c r red n" style="left:321px;width:130px;top:1180px;">¥<span class="dm">-</span>11,171,680.97</div>
<div class="c r red n" style="left:451px;width:130px;top:1180px;">¥<span class="dm">-</span>4,181,085.23</div>
<div class="c r red n" style="left:581px;width:130px;top:1180px;">¥<span class="dm">-</span>6,869,329.71</div>
<div class="c r red n" style="left:711px;width:111px;top:1180px;">¥<span class="dm">-</span>507,717.52</div>
<div class="c r  n" style="left:822px;width:103px;top:1180px;">¥0.00</div>
<div class="c r  n" style="left:925px;width:101px;top:1180px;">¥0.00</div>
<div class="c r  n" style="left:1026px;width:97px;top:1180px;">0.000</div>
<div class="c r  n" style="left:1123px;width:114px;top:1180px;">0.000</div>
<div class="c r  n" style="left:1237px;width:97px;top:1180px;">0.000</div>
<div class="c r  n" style="left:1334px;width:97px;top:1180px;">0.000</div>
<div class="c r  n" style="left:1431px;width:114px;top:1180px;">0.000</div>
<div class="c r  n" style="left:207px;width:114px;top:1200px;">¥473,098.71</div>
<div class="c r red n" style="left:321px;width:130px;top:1200px;">¥<span class="dm">-</span>10,148,258.32</div>
<div class="c r red n" style="left:451px;width:130px;top:1200px;">¥<span class="dm">-</span>3,700,687.70</div>
<div class="c r red n" style="left:581px;width:130px;top:1200px;">¥<span class="dm">-</span>6,308,798.28</div>
<div class="c r red n" style="left:711px;width:111px;top:1200px;">¥<span class="dm">-</span>297,341.31</div>
<div class="c r  n" style="left:822px;width:103px;top:1200px;">¥0.00</div>
<div class="c r  n" style="left:925px;width:101px;top:1200px;">¥0.00</div>
<div class="c r  n" style="left:1026px;width:97px;top:1200px;">0.000</div>
<div class="c r  n" style="left:1123px;width:114px;top:1200px;">0.000</div>
<div class="c r  n" style="left:1237px;width:97px;top:1200px;">0.000</div>
<div class="c r  n" style="left:1334px;width:97px;top:1200px;">0.000</div>
<div class="c r  n" style="left:1431px;width:114px;top:1200px;">0.000</div>
<div class="c r  n" style="left:207px;width:114px;top:1220px;">¥9,328,494.96</div>
<div class="c r red n" style="left:321px;width:130px;top:1220px;">¥<span class="dm">-</span>8,878,567.48</div>
<div class="c r red n" style="left:451px;width:130px;top:1220px;">¥<span class="dm">-</span>3,070,774.65</div>
<div class="c r red n" style="left:581px;width:130px;top:1220px;">¥<span class="dm">-</span>5,598,568.43</div>
<div class="c r  n" style="left:711px;width:111px;top:1220px;">¥0.00</div>
<div class="c r  n" style="left:822px;width:103px;top:1220px;">¥0.00</div>
<div class="c r  n" style="left:925px;width:101px;top:1220px;">¥0.00</div>
<div class="c r  n" style="left:1026px;width:97px;top:1220px;">0.000</div>
<div class="c r  n" style="left:1123px;width:114px;top:1220px;">0.000</div>
<div class="c r  n" style="left:1237px;width:97px;top:1220px;">0.000</div>
<div class="c r  n" style="left:1334px;width:97px;top:1220px;">0.000</div>
<div class="c r  n" style="left:1431px;width:114px;top:1220px;">0.000</div>
<div class="c r  n" style="left:207px;width:114px;top:1240px;">¥16,171,678.12</div>
<div class="c r red n" style="left:321px;width:130px;top:1240px;">¥<span class="dm">-</span>8,202,026.56</div>
<div class="c r red n" style="left:451px;width:130px;top:1240px;">¥<span class="dm">-</span>2,784,456.16</div>
<div class="c r red n" style="left:581px;width:130px;top:1240px;">¥<span class="dm">-</span>5,214,349.13</div>
<div class="c r  n" style="left:711px;width:111px;top:1240px;">¥0.00</div>
<div class="c r  n" style="left:822px;width:103px;top:1240px;">¥0.00</div>
<div class="c r  n" style="left:925px;width:101px;top:1240px;">¥0.00</div>
<div class="c r  n" style="left:1026px;width:97px;top:1240px;">0.000</div>
<div class="c r  n" style="left:1123px;width:114px;top:1240px;">0.000</div>
<div class="c r  n" style="left:1237px;width:97px;top:1240px;">0.000</div>
<div class="c r  n" style="left:1334px;width:97px;top:1240px;">0.000</div>
<div class="c r  n" style="left:1431px;width:114px;top:1240px;">0.000</div>
<svg class="a" style="left:200px;top:1100px" width="7" height="7"><path d="M0 0H7V7Z" fill="#e00"/></svg>
<svg class="a" style="left:200px;top:1160px" width="7" height="7"><path d="M0 0H7V7Z" fill="#e00"/></svg>
<div class="c " style="left:1618px;top:860px;padding-left:3px"><b>输出变量模拟计算数值</b></div>
<div class="a" style="left:1691px;top:880px;width:228px;height:20px;background:#d9d9d9"></div>
<div class="c " style="left:1618px;top:880px;padding-left:3px">输出变量</div>
<div class="c r " style="left:1691px;width:102px;top:880px;">净现值</div>
<div class="c r " style="left:1793px;width:120px;top:880px;">负现金流净现值</div>
<div class="c r red n" style="left:1691px;width:102px;top:900px;">¥<span class="dm">-</span>6,378,986</div>
<div class="c r red n" style="left:1793px;width:120px;top:900px;">¥<span class="dm">-</span>9,471,950</div>
<div class="c r red n" style="left:1691px;width:102px;top:920px;">¥<span class="dm">-</span>2,088,315</div>
<div class="c r red n" style="left:1793px;width:120px;top:920px;">¥<span class="dm">-</span>11,823,958</div>
<div class="c r  n" style="left:1691px;width:102px;top:940px;">¥13,134,356</div>
<div class="c r red n" style="left:1793px;width:120px;top:940px;">¥<span class="dm">-</span>9,162,134</div>
<div class="c r  n" style="left:1691px;width:102px;top:960px;">¥1,801,467</div>
<div class="c r red n" style="left:1793px;width:120px;top:960px;">¥<span class="dm">-</span>9,764,187</div>
<div class="c r  n" style="left:1691px;width:102px;top:980px;">¥12,670,303</div>
<div class="c r red n" style="left:1793px;width:120px;top:980px;">¥<span class="dm">-</span>8,916,579</div>
<div class="c r red n" style="left:1691px;width:102px;top:1000px;">¥<span class="dm">-</span>2,452,733</div>
<div class="c r red n" style="left:1793px;width:120px;top:1000px;">¥<span class="dm">-</span>9,600,011</div>
<div class="c r  n" style="left:1691px;width:102px;top:1020px;">¥3,885,485</div>
<div class="c r red n" style="left:1793px;width:120px;top:1020px;">¥<span class="dm">-</span>8,644,775</div>
<div class="c r red n" style="left:1691px;width:102px;top:1040px;">¥<span class="dm">-</span>2,072,154</div>
<div class="c r red n" style="left:1793px;width:120px;top:1040px;">¥<span class="dm">-</span>10,063,636</div>
<div class="c r  n" style="left:1691px;width:102px;top:1060px;">¥5,003,251</div>
<div class="c r red n" style="left:1793px;width:120px;top:1060px;">¥<span class="dm">-</span>8,880,697</div>
<div class="c r  n" style="left:1691px;width:102px;top:1080px;">¥25,847,146</div>
<div class="c r red n" style="left:1793px;width:120px;top:1080px;">¥<span class="dm">-</span>9,660,014</div>
<div class="c r  n" style="left:1691px;width:102px;top:1100px;">¥2,663,190</div>
<div class="c r red n" style="left:1793px;width:120px;top:1100px;">¥<span class="dm">-</span>9,158,839</div>
<div class="c r  n" style="left:1691px;width:102px;top:1120px;">¥5,549,471</div>
<div class="c r red n" style="left:1793px;width:120px;top:1120px;">¥<span class="dm">-</span>9,138,431</div>
<div class="c r  n" style="left:1691px;width:102px;top:1140px;">¥18,130,208</div>
<div class="c r red n" style="left:1793px;width:120px;top:1140px;">¥<span class="dm">-</span>8,800,430</div>
<div class="c r  n" style="left:1691px;width:102px;top:1160px;">¥7,741,176</div>
<div class="c r red n" style="left:1793px;width:120px;top:1160px;">¥<span class="dm">-</span>8,818,922</div>
<div class="c r  n" style="left:1691px;width:102px;top:1180px;">¥6,875,701</div>
<div class="c r red n" style="left:1793px;width:120px;top:1180px;">¥<span class="dm">-</span>7,761,673</div>
<div class="c r  n" style="left:1691px;width:102px;top:1200px;">¥7,167,130</div>
<div class="c r red n" style="left:1793px;width:120px;top:1200px;">¥<span class="dm">-</span>10,164,037</div>
<div class="c r red n" style="left:1691px;width:102px;top:1220px;">¥<span class="dm">-</span>3,885,510</div>
<div class="c r red n" style="left:1793px;width:120px;top:1220px;">¥<span class="dm">-</span>9,941,789</div>
<div class="c r  n" style="left:1691px;width:102px;top:1240px;">¥11,683,721</div>
<div class="c r red n" style="left:1793px;width:120px;top:1240px;">¥<span class="dm">-</span>10,348,584</div>
<div class="a" style="left:101px;top:329px;width:497px;height:125px;border:1px solid #b4b4b4;border-radius:21px;background:#fff"></div>
<div class="a" style="left:1026px;top:329px;width:537px;height:125px;border:1px solid #b4b4b4;border-radius:21px;background:#fff"></div>
<div style="position:absolute;white-space:nowrap;font-size:14px;line-height:21px;letter-spacing:1.5px;color:#222;left:117px;top:339px">从下面灰色单元格的下拉列表中选择一个输出或输入变量，然后单击<br>图表中的任何位置。（<span style="letter-spacing:0">"</span>输入变量<span style="letter-spacing:0">_"</span>旁边的引用是工作表【<span style="letter-spacing:0">Dris</span>k】上<br>的单元格地址。此外，下拉列表中只显示含有数值或空值的输入变<br>量。）</div>
<div style="position:absolute;white-space:nowrap;font-size:14px;line-height:21px;letter-spacing:1.5px;color:#222;left:1042px;top:339px">从下面灰色单元格的下拉列表中选择一个输出或输入变量，然后单击图表<br>中的任何位置。（<span style="letter-spacing:0">"</span>输入变量<span style="letter-spacing:0">_"</span>旁边的引用是工作表【<span style="letter-spacing:0">Dris</span>k】上的单元格地<br>址。此外，下拉列表中只显示含有数值或空值的输入变量。）</div>
<svg class="a" style="left:101px;top:519px" width="506" height="307" viewBox="101 519 506 307">
<rect x="101.5" y="519.5" width="505" height="306" fill="#fff" stroke="#a6a6a6"/>
<line x1="151" x2="590" y1="725.5" y2="725.5" stroke="#e4e4e4"/>
<line x1="151" x2="590" y1="706.5" y2="706.5" stroke="#e4e4e4"/>
<line x1="151" x2="590" y1="686.5" y2="686.5" stroke="#e4e4e4"/>
<line x1="151" x2="590" y1="667.5" y2="667.5" stroke="#e4e4e4"/>
<line x1="151" x2="590" y1="647.5" y2="647.5" stroke="#e4e4e4"/>
<line x1="151" x2="590" y1="628.5" y2="628.5" stroke="#e4e4e4"/>
<line x1="151" x2="590" y1="608.5" y2="608.5" stroke="#e4e4e4"/>
<line x1="151" x2="590" y1="589.5" y2="589.5" stroke="#e4e4e4"/>
<line x1="151" x2="590" y1="569.5" y2="569.5" stroke="#e4e4e4"/>
<rect x="151.5" y="740.7" width="28.3" height="4.3" fill="#4472c4"/>
<rect x="180.8" y="720.7" width="28.3" height="24.3" fill="#4472c4"/>
<rect x="210.0" y="673.8" width="28.3" height="71.2" fill="#4472c4"/>
<rect x="239.3" y="631.0" width="28.3" height="114.0" fill="#4472c4"/>
<rect x="268.6" y="591.7" width="28.3" height="153.3" fill="#4472c4"/>
<rect x="297.8" y="589.8" width="28.3" height="155.2" fill="#4472c4"/>
<rect x="327.1" y="600.9" width="28.3" height="144.1" fill="#4472c4"/>
<rect x="356.4" y="624.7" width="28.3" height="120.3" fill="#4472c4"/>
<rect x="385.6" y="661.9" width="28.3" height="83.1" fill="#4472c4"/>
<rect x="414.9" y="695.7" width="28.3" height="49.3" fill="#4472c4"/>
<rect x="444.2" y="718.7" width="28.3" height="26.3" fill="#4472c4"/>
<rect x="473.4" y="732.8" width="28.3" height="12.2" fill="#4472c4"/>
<rect x="502.7" y="741.8" width="28.3" height="3.2" fill="#4472c4"/>
<rect x="532.0" y="744.6" width="28.3" height="0.4" fill="#4472c4"/>
<line x1="151" x2="590" y1="745.5" y2="745.5" stroke="#a6a6a6"/>
<line x1="151.5" x2="151.5" y1="569" y2="745" stroke="#bfbfbf"/>
<line x1="146" x2="151" y1="725.5" y2="725.5" stroke="#bfbfbf"/>
<line x1="146" x2="151" y1="706.5" y2="706.5" stroke="#bfbfbf"/>
<line x1="146" x2="151" y1="686.5" y2="686.5" stroke="#bfbfbf"/>
<line x1="146" x2="151" y1="667.5" y2="667.5" stroke="#bfbfbf"/>
<line x1="146" x2="151" y1="647.5" y2="647.5" stroke="#bfbfbf"/>
<line x1="146" x2="151" y1="628.5" y2="628.5" stroke="#bfbfbf"/>
<line x1="146" x2="151" y1="608.5" y2="608.5" stroke="#bfbfbf"/>
<line x1="146" x2="151" y1="589.5" y2="589.5" stroke="#bfbfbf"/>
<line x1="146" x2="151" y1="569.5" y2="569.5" stroke="#bfbfbf"/>
<line x1="151.5" x2="151.5" y1="745" y2="750" stroke="#a6a6a6"/>
<line x1="180.5" x2="180.5" y1="745" y2="750" stroke="#a6a6a6"/>
<line x1="210.5" x2="210.5" y1="745" y2="750" stroke="#a6a6a6"/>
<line x1="239.5" x2="239.5" y1="745" y2="750" stroke="#a6a6a6"/>
<line x1="268.5" x2="268.5" y1="745" y2="750" stroke="#a6a6a6"/>
<line x1="297.5" x2="297.5" y1="745" y2="750" stroke="#a6a6a6"/>
<line x1="327.5" x2="327.5" y1="745" y2="750" stroke="#a6a6a6"/>
<line x1="356.5" x2="356.5" y1="745" y2="750" stroke="#a6a6a6"/>
<line x1="385.5" x2="385.5" y1="745" y2="750" stroke="#a6a6a6"/>
<line x1="414.5" x2="414.5" y1="745" y2="750" stroke="#a6a6a6"/>
<line x1="444.5" x2="444.5" y1="745" y2="750" stroke="#a6a6a6"/>
<line x1="473.5" x2="473.5" y1="745" y2="750" stroke="#a6a6a6"/>
<line x1="502.5" x2="502.5" y1="745" y2="750" stroke="#a6a6a6"/>
<line x1="531.5" x2="531.5" y1="745" y2="750" stroke="#a6a6a6"/>
<line x1="561.5" x2="561.5" y1="745" y2="750" stroke="#a6a6a6"/>
<line x1="590.5" x2="590.5" y1="745" y2="750" stroke="#a6a6a6"/>
<text x="138" y="749.5" text-anchor="end" font-size="13" fill="#333" style="font-family:&quot;Liberation Sans&quot;,sans-serif">0</text>
<text x="138" y="729.9" text-anchor="end" font-size="13" fill="#333" style="font-family:&quot;Liberation Sans&quot;,sans-serif">200</text>
<text x="138" y="710.4" text-anchor="end" font-size="13" fill="#333" style="font-family:&quot;Liberation Sans&quot;,sans-serif">400</text>
<text x="138" y="690.8" text-anchor="end" font-size="13" fill="#333" style="font-family:&quot;Liberation Sans&quot;,sans-serif">600</text>
<text x="138" y="671.3" text-anchor="end" font-size="13" fill="#333" style="font-family:&quot;Liberation Sans&quot;,sans-serif">800</text>
<text x="138" y="651.7" text-anchor="end" font-size="13" fill="#333" style="font-family:&quot;Liberation Sans&quot;,sans-serif">1000</text>
<text x="138" y="632.2" text-anchor="end" font-size="13" fill="#333" style="font-family:&quot;Liberation Sans&quot;,sans-serif">1200</text>
<text x="138" y="612.6" text-anchor="end" font-size="13" fill="#333" style="font-family:&quot;Liberation Sans&quot;,sans-serif">1400</text>
<text x="138" y="593.1" text-anchor="end" font-size="13" fill="#333" style="font-family:&quot;Liberation Sans&quot;,sans-serif">1600</text>
<text x="138" y="573.5" text-anchor="end" font-size="13" fill="#333" style="font-family:&quot;Liberation Sans&quot;,sans-serif">1800</text>
<text x="169.6" y="764" text-anchor="end" font-size="13" fill="#333" transform="rotate(-45 169.6 764)" style="font-family:&quot;Liberation Sans&quot;,sans-serif">¥-9,521,504</text>
<text x="198.9" y="764" text-anchor="end" font-size="13" fill="#333" transform="rotate(-45 198.9 764)" style="font-family:&quot;Liberation Sans&quot;,sans-serif">¥-6,802,520</text>
<text x="228.2" y="764" text-anchor="end" font-size="13" fill="#333" transform="rotate(-45 228.2 764)" style="font-family:&quot;Liberation Sans&quot;,sans-serif">¥-4,083,537</text>
<text x="257.4" y="764" text-anchor="end" font-size="13" fill="#333" transform="rotate(-45 257.4 764)" style="font-family:&quot;Liberation Sans&quot;,sans-serif">¥-1,364,553</text>
<text x="286.7" y="764" text-anchor="end" font-size="13" fill="#333" transform="rotate(-45 286.7 764)" style="font-family:&quot;Liberation Sans&quot;,sans-serif">¥1,354,431</text>
<text x="316.0" y="764" text-anchor="end" font-size="13" fill="#333" transform="rotate(-45 316.0 764)" style="font-family:&quot;Liberation Sans&quot;,sans-serif">¥4,073,415</text>
<text x="345.2" y="764" text-anchor="end" font-size="13" fill="#333" transform="rotate(-45 345.2 764)" style="font-family:&quot;Liberation Sans&quot;,sans-serif">¥6,792,398</text>
<text x="374.5" y="764" text-anchor="end" font-size="13" fill="#333" transform="rotate(-45 374.5 764)" style="font-family:&quot;Liberation Sans&quot;,sans-serif">¥9,511,382</text>
<text x="403.8" y="764" text-anchor="end" font-size="13" fill="#333" transform="rotate(-45 403.8 764)" style="font-family:&quot;Liberation Sans&quot;,sans-serif">¥12,230,366</text>
<text x="433.0" y="764" text-anchor="end" font-size="13" fill="#333" transform="rotate(-45 433.0 764)" style="font-family:&quot;Liberation Sans&quot;,sans-serif">¥14,949,350</text>
<text x="462.3" y="764" text-anchor="end" font-size="13" fill="#333" transform="rotate(-45 462.3 764)" style="font-family:&quot;Liberation Sans&quot;,sans-serif">¥17,668,333</text>
<text x="491.6" y="764" text-anchor="end" font-size="13" fill="#333" transform="rotate(-45 491.6 764)" style="font-family:&quot;Liberation Sans&quot;,sans-serif">¥20,387,317</text>
<text x="520.8" y="764" text-anchor="end" font-size="13" fill="#333" transform="rotate(-45 520.8 764)" style="font-family:&quot;Liberation Sans&quot;,sans-serif">¥23,106,301</text>
<text x="550.1" y="764" text-anchor="end" font-size="13" fill="#333" transform="rotate(-45 550.1 764)" style="font-family:&quot;Liberation Sans&quot;,sans-serif">¥25,825,285</text>
<text x="579.4" y="764" text-anchor="end" font-size="13" fill="#333" transform="rotate(-45 579.4 764)" style="font-family:&quot;Liberation Sans&quot;,sans-serif">¥28,544,268</text>
<text x="354" y="545" text-anchor="middle" font-size="17" fill="#333" style="font-family:&quot;Liberation Sans&quot;,sans-serif">净现值直方图</text>
</svg>
<svg class="a" style="left:1026px;top:519px" width="504" height="308" viewBox="1026 519 504 308">
<rect x="1026.5" y="519.5" width="503" height="307" fill="#fff" stroke="#a6a6a6"/>
<line x1="1124" x2="1503" y1="810.5" y2="810.5" stroke="#e4e4e4"/>
<line x1="1119" x2="1124" y1="810.5" y2="810.5" stroke="#a6a6a6"/>
<text x="1110" y="814.5" text-anchor="end" font-size="13" fill="#de2a2e" style="font-family:&quot;Liberation Sans&quot;,sans-serif">¥-15,000,000</text>
<line x1="1124" x2="1503" y1="788.5" y2="788.5" stroke="#e4e4e4"/>
<line x1="1119" x2="1124" y1="788.5" y2="788.5" stroke="#a6a6a6"/>
<text x="1110" y="792.7" text-anchor="end" font-size="13" fill="#de2a2e" style="font-family:&quot;Liberation Sans&quot;,sans-serif">¥-10,000,000</text>
<line x1="1124" x2="1503" y1="766.5" y2="766.5" stroke="#e4e4e4"/>
<line x1="1119" x2="1124" y1="766.5" y2="766.5" stroke="#a6a6a6"/>
<text x="1110" y="770.9" text-anchor="end" font-size="13" fill="#de2a2e" style="font-family:&quot;Liberation Sans&quot;,sans-serif">¥-5,000,000</text>
<line x1="1119" x2="1124" y1="745.5" y2="745.5" stroke="#a6a6a6"/>
<text x="1110" y="749.1" text-anchor="end" font-size="13" fill="#333" style="font-family:&quot;Liberation Sans&quot;,sans-serif">¥0</text>
<line x1="1124" x2="1503" y1="723.5" y2="723.5" stroke="#e4e4e4"/>
<line x1="1119" x2="1124" y1="723.5" y2="723.5" stroke="#a6a6a6"/>
<text x="1110" y="727.3" text-anchor="end" font-size="13" fill="#333" style="font-family:&quot;Liberation Sans&quot;,sans-serif">¥5,000,000</text>
<line x1="1124" x2="1503" y1="701.5" y2="701.5" stroke="#e4e4e4"/>
<line x1="1119" x2="1124" y1="701.5" y2="701.5" stroke="#a6a6a6"/>
<text x="1110" y="705.5" text-anchor="end" font-size="13" fill="#333" style="font-family:&quot;Liberation Sans&quot;,sans-serif">¥10,000,000</text>
<line x1="1124" x2="1503" y1="679.5" y2="679.5" stroke="#e4e4e4"/>
<line x1="1119" x2="1124" y1="679.5" y2="679.5" stroke="#a6a6a6"/>
<text x="1110" y="683.7" text-anchor="end" font-size="13" fill="#333" style="font-family:&quot;Liberation Sans&quot;,sans-serif">¥15,000,000</text>
<line x1="1124" x2="1503" y1="657.5" y2="657.5" stroke="#e4e4e4"/>
<line x1="1119" x2="1124" y1="657.5" y2="657.5" stroke="#a6a6a6"/>
<text x="1110" y="661.9" text-anchor="end" font-size="13" fill="#333" style="font-family:&quot;Liberation Sans&quot;,sans-serif">¥20,000,000</text>
<line x1="1124" x2="1503" y1="636.5" y2="636.5" stroke="#e4e4e4"/>
<line x1="1119" x2="1124" y1="636.5" y2="636.5" stroke="#a6a6a6"/>
<text x="1110" y="640.1" text-anchor="end" font-size="13" fill="#333" style="font-family:&quot;Liberation Sans&quot;,sans-serif">¥25,000,000</text>
<line x1="1124" x2="1503" y1="614.5" y2="614.5" stroke="#e4e4e4"/>
<line x1="1119" x2="1124" y1="614.5" y2="614.5" stroke="#a6a6a6"/>
<text x="1110" y="618.3" text-anchor="end" font-size="13" fill="#333" style="font-family:&quot;Liberation Sans&quot;,sans-serif">¥30,000,000</text>
<line x1="1124" x2="1503" y1="592.5" y2="592.5" stroke="#e4e4e4"/>
<line x1="1119" x2="1124" y1="592.5" y2="592.5" stroke="#a6a6a6"/>
<text x="1110" y="596.5" text-anchor="end" font-size="13" fill="#333" style="font-family:&quot;Liberation Sans&quot;,sans-serif">¥35,000,000</text>
<line x1="1124.5" x2="1124.5" y1="592" y2="810" stroke="#a6a6a6"/>
<line x1="1124" x2="1503" y1="745.5" y2="745.5" stroke="#a6a6a6"/>
<line x1="1124.5" x2="1124.5" y1="745.5" y2="749.5" stroke="#a6a6a6"/>
<line x1="1178.5" x2="1178.5" y1="745.5" y2="749.5" stroke="#a6a6a6"/>
<line x1="1232.5" x2="1232.5" y1="745.5" y2="749.5" stroke="#a6a6a6"/>
<line x1="1286.5" x2="1286.5" y1="745.5" y2="749.5" stroke="#a6a6a6"/>
<line x1="1341.5" x2="1341.5" y1="745.5" y2="749.5" stroke="#a6a6a6"/>
<line x1="1395.5" x2="1395.5" y1="745.5" y2="749.5" stroke="#a6a6a6"/>
<line x1="1449.5" x2="1449.5" y1="745.5" y2="749.5" stroke="#a6a6a6"/>
<line x1="1503.5" x2="1503.5" y1="745.5" y2="749.5" stroke="#a6a6a6"/>
<path d="M1396 721h0M1412 702h0M1357 766h0M1431 715h0M1370 705h0M1389 718h0M1408 731h0M1373 710h0M1447 659h0M1392 723h0M1391 764h0M1350 726h0M1449 705h0M1366 707h0M1385 720h0M1426 721h0M1417 672h0M1461 715h0M1438 731h0M1377 721h0M1322 785h0M1396 734h0M1435 662h0M1412 715h0M1338 729h0M1370 718h0M1428 659h0M1373 723h0M1447 672h0M1350 739h0M1407 721h0M1365 724h0M1384 737h0M1368 729h0M1442 678h0M1400 681h0M1345 782h0M1441 719h0M1377 734h0M1361 726h0M1380 739h0M1421 740h0M1395 724h0M1428 672h0M1414 737h0M1427 676h0M1331 739h0M1446 689h0M1372 740h0M1333 748h0M1407 734h0M1448 735h0M1384 750h0M1349 729h0M1368 742h0M1400 694h0M1441 732h0M1444 737h0M1361 739h0M1402 740h0M1421 753h0M1319 742h0M1360 743h0M1437 734h0M1395 737h0M1353 740h0M1446 702h0M1430 694h0M1314 748h0M1388 697h0M1432 740h0M1420 686h0M1349 742h0M1423 691h0M1390 743h0M1326 758h0M1367 759h0M1422 695h0M1443 754h0M1341 743h0M1360 756h0M1434 705h0M1399 684h0M1418 697h0M1353 753h0M1452 695h0M1311 756h0M1388 710h0M1355 762h0M1390 756h0M1403 695h0M1348 759h0M1406 700h0M1425 713h0M1383 716h0M1415 705h0M1382 757h0M1401 770h0M1399 697h0M1418 710h0M1450 662h0M1417 714h0M1452 708h0M1336 762h0M1410 711h0M1429 724h0M1394 703h0M1327 713h0M1413 716h0M1426 655h0M1371 719h0M1445 705h0M1403 708h0M1406 713h0M1306 775h0M1364 716h0M1438 665h0M1383 729h0M1324 765h0M1398 714h0M1417 727h0M1359 722h0M1336 775h0M1410 724h0M1426 668h0M1371 732h0M1329 735h0M1387 713h0M1428 714h0M1386 717h0M1331 781h0M1405 730h0M1363 733h0M1440 724h0M1324 778h0M1398 727h0M1456 668h0M1356 730h0M1359 735h0M1317 738h0M1416 717h0M1435 730h0M1448 669h0M1393 733h0M1352 732h0M1451 674h0M1428 727h0M1386 730h0M1405 743h0M1446 744h0M1444 671h0M1344 733h0M1363 746h0M1402 674h0M1347 738h0M1421 687h0M1305 741h0M1420 728h0M1437 668h0M1423 733h0M1340 735h0M1381 736h0M1400 749h0M1317 751h0M1358 752h0M1416 730h0M1448 682h0M1393 746h0M1332 736h0M1351 749h0M1441 679h0M1312 757h0M1411 736h0M1444 684h0M1430 749h0M1328 738h0M1402 687h0M1347 751h0M1305 754h0M1423 746h0M1362 736h0M1436 685h0M1381 749h0M1455 698h0M1439 690h0M1339 752h0M1358 765h0M1342 757h0M1374 746h0M1300 760h0M1432 687h0M1332 749h0M1316 741h0M1335 754h0M1409 703h0M1450 704h0M1369 752h0M1443 701h0M1327 755h0M1401 704h0M1445 747h0M1436 698h0M1406 755h0M1339 765h0M1439 703h0M1323 757h0M1397 706h0M1342 770h0M1429 658h0M1300 773h0M1316 754h0M1357 755h0M1412 691h0M1450 717h0M1389 707h0M1408 720h0M1392 712h0M1382 704h0M1385 709h0M1459 658h0M1404 722h0M1387 755h0M1461 704h0M1438 720h0M1355 722h0M1454 664h0M1399 765h0M1412 704h0M1431 717h0M1315 771h0M1389 720h0M1408 733h0M1392 725h0M1350 728h0M1440 658h0M1385 722h0M1426 723h0M1384 726h0M1419 720h0M1438 733h0M1396 736h0M1435 664h0M1370 720h0M1373 725h0M1414 726h0M1331 728h0M1350 741h0M1407 723h0M1426 736h0M1291 777h0M1365 726h0M1384 739h0M1423 667h0M1368 731h0M1444 726h0M1344 788h0M1377 736h0M1416 664h0M1361 728h0M1421 742h0M1338 744h0M1379 745h0M1437 723h0M1395 726h0M1353 729h0M1372 742h0M1430 683h0M1330 745h0M1333 750h0M1365 739h0M1368 744h0M1409 745h0M1442 693h0M1441 734h0M1416 677h0M1402 742h0M1418 686h0M1337 761h0M1427 691h0M1372 755h0M1430 696h0M1330 758h0M1314 750h0M1388 699h0M1333 763h0M1307 747h0M1348 748h0M1422 697h0M1425 702h0M1341 745h0M1434 707h0M1376 702h0M1411 696h0M1410 700h0M1355 764h0M1429 713h0M1413 705h0M1313 767h0M1445 694h0M1403 697h0M1422 710h0M1367 774h0M1406 702h0M1425 715h0M1309 769h0M1383 718h0M1341 758h0M1382 759h0M1399 699h0M1385 764h0M1417 716h0M1375 719h0M1378 761h0M1452 710h0M1410 713h0M1429 726h0M1394 705h0M1352 708h0M1297 772h0M1371 721h0M1426 657h0M1403 710h0M1387 702h0M1306 777h0M1405 719h0M1424 769h0M1440 713h0M1324 767h0M1398 716h0M1343 780h0M1417 729h0M1433 710h0M1359 724h0M1391 713h0M1394 718h0M1435 719h0M1371 734h0M1412 772h0M1329 737h0M1428 716h0M1447 729h0M1441 655h0M1386 719h0M1405 732h0M1463 673h0M1363 735h0M1421 676h0M1462 714h0M1453 665h0M1442 735h0M1301 796h0M1340 724h0M1414 673h0M1458 716h0M1317 740h0M1416 719h0M1374 722h0M1319 786h0M1393 735h0M1354 743h0M1428 729h0M1441 668h0M1386 732h0M1460 681h0M1344 735h0M1363 748h0M1347 740h0M1421 689h0M1423 735h0M1442 748h0M1381 738h0M1446 638h0M1358 754h0M1317 753h0M1416 732h0M1374 735h0M1451 689h0M1335 743h0M1354 756h0M1427 746h0M1411 738h0M1402 689h0M1420 743h0M1423 748h0M1362 738h0M1436 687h0M1455 700h0M1439 692h0M1339 754h0M1323 746h0M1342 759h0M1457 746h0M1399 741h0M1432 689h0M1445 628h0M1335 756h0M1409 705h0M1450 706h0M1422 644h0M1466 687h0M1369 754h0M1401 706h0M1385 698h0M1404 711h0M1403 752h0M1406 757h0M1397 708h0M1438 709h0M1415 762h0M1399 754h0M1412 693h0M1357 757h0M1431 706h0M1424 703h0M1382 706h0M1401 719h0M1385 711h0M1404 724h0M1406 770h0M1345 760h0M1419 709h0M1438 722h0M1377 712h0M1322 776h0M1396 725h0M1380 717h0M1412 706h0M1357 770h0M1431 719h0M1370 709h0M1389 722h0M1392 727h0M1350 730h0M1407 712h0M1426 725h0M1343 727h0M1384 728h0M1387 770h0M1345 773h0M1419 722h0M1460 723h0M1396 738h0M1380 730h0M1437 712h0M1370 722h0M1373 727h0M1414 728h0M1331 730h0M1405 679h0M1407 725h0M1426 738h0M1384 741h0M1368 733h0M1326 736h0M1441 723h0M1458 663h0M1444 728h0M1435 679h0M1402 731h0M1434 683h0M1379 747h0M1437 725h0M1353 731h0M1427 680h0M1372 744h0M1446 693h0M1314 739h0M1333 752h0M1332 793h0M1365 741h0M1349 733h0M1368 746h0M1326 749h0M1367 750h0M1441 736h0M1457 680h0M1379 760h0M1418 688h0M1321 755h0M1395 741h0M1436 742h0M1353 744h0M1427 693h0M1397 750h0M1330 760h0M1314 752h0M1388 701h0M1429 702h0M1445 683h0M1403 686h0M1348 750h0M1422 699h0M1367 763h0M1306 753h0M1425 704h0M1309 758h0M1383 707h0M1341 747h0M1415 696h0M1418 701h0M1318 763h0M1459 702h0M1450 653h0M1336 753h0M1410 702h0M1355 766h0M1429 715h0M1413 707h0M1313 769h0M1403 699h0M1348 763h0M1389 764h0M1422 712h0M1406 704h0M1425 717h0M1383 720h0M1382 761h0M1399 701h0M1398 705h0M1302 768h0M1417 718h0M1375 721h0M1433 699h0M1391 702h0M1336 766h0M1410 715h0M1394 707h0M1413 720h0M1454 721h0M1313 782h0M1352 710h0M1426 659h0M1371 723h0M1370 764h0M1389 777h0M1387 704h0M1428 705h0M1447 718h0M1419 656h0M1364 720h0M1405 721h0M1440 715h0M1417 731h0M1301 785h0M1375 734h0M1359 726h0M1304 790h0M1391 715h0M1361 772h0M1435 721h0M1394 720h0M1352 723h0M1393 724h0M1426 672h0M1428 718h0M1386 721h0M1405 734h0M1344 724h0M1363 737h0M1420 719h0M1453 667h0M1437 659h0M1423 724h0M1356 734h0M1456 672h0M1400 740h0M1416 721h0M1435 734h0M1374 724h0M1393 737h0M1451 678h0M1351 740h0M1409 681h0M1354 745h0M1441 670h0M1430 740h0M1421 691h0M1362 727h0M1436 676h0M1381 740h0M1439 681h0M1339 743h0M1358 756h0M1416 734h0M1342 748h0M1374 737h0M1448 686h0M1415 738h0M1434 751h0M1432 678h0M1316 732h0M1335 745h0M1409 694h0M1354 758h0M1312 761h0M1427 748h0M1411 740h0M1295 794h0M1402 691h0M1443 692h0M1369 743h0M1401 695h0M1404 700h0M1422 754h0M1320 743h0M1439 694h0M1339 756h0M1323 748h0M1342 761h0M1431 695h0M1408 711h0M1425 651h0M1411 753h0M1369 756h0M1443 705h0M1401 708h0M1459 649h0M1404 713h0M1387 746h0M1320 756h0M1452 646h0M1397 710h0M1438 711h0M1396 714h0M1412 695h0M1357 759h0M1431 708h0M1450 721h0M1315 762h0M1389 711h0M1334 775h0M1408 724h0M1392 716h0M1382 708h0M1426 714h0M1461 708h0M1419 711h0M1438 724h0M1377 714h0M1380 719h0M1454 668h0M1412 708h0M1453 709h0M1370 711h0M1389 724h0M1447 665h0M1392 729h0M1350 732h0M1308 735h0M1426 727h0M1384 730h0M1345 775h0M1419 724h0M1460 725h0M1377 727h0M1380 732h0M1437 714h0M1395 717h0M1427 669h0M1372 733h0M1446 682h0M1331 732h0M1430 674h0M1449 724h0M1407 727h0M1420 666h0M1365 730h0M1291 781h0M1384 743h0M1368 735h0M1458 665h0M1402 733h0M1421 746h0M1360 736h0M1337 752h0M1395 730h0M1414 743h0M1372 746h0M1330 749h0M1432 733h0M1390 736h0M1409 749h0M1367 752h0M1441 738h0M1425 693h0M1325 755h0M1341 736h0M1360 749h0M1434 698h0M1399 677h0M1418 690h0M1337 765h0M1321 757h0M1353 746h0M1397 752h0M1355 755h0M1429 704h0M1403 688h0M1422 701h0M1425 706h0M1325 768h0M1341 749h0M1415 698h0M1399 690h0M1385 755h0M1418 703h0M1417 707h0M1433 688h0M1391 691h0M1336 755h0M1410 704h0M1355 768h0M1429 717h0M1394 696h0M1413 709h0M1445 698h0M1371 712h0M1387 693h0M1406 706h0M1306 768h0M1438 658h0M1383 722h0M1350 774h0M1366 755h0M1440 704h0M1357 706h0M1398 707h0M1417 720h0M1334 722h0M1433 701h0M1336 768h0M1410 717h0M1377 769h0M1394 709h0M1380 774h0M1371 725h0M1428 707h0M1447 720h0M1290 773h0M1331 774h0M1405 723h0M1363 726h0M1407 769h0M1453 656h0M1398 720h0M1324 771h0M1456 661h0M1356 723h0M1375 736h0M1359 728h0M1458 707h0M1416 710h0M1435 723h0M1352 725h0M1393 726h0M1426 674h0M1428 720h0M1386 723h0M1405 736h0M1363 739h0M1420 721h0M1400 742h0M1416 723h0M1374 726h0M1448 675h0M1393 739h0M1432 667h0M1451 680h0M1354 747h0M1441 672h0M1411 729h0M1344 739h0M1430 742h0M1347 744h0M1421 693h0M1462 731h0M1305 747h0M1420 734h0M1379 696h0M1362 729h0M1436 678h0M1381 742h0M1400 755h0M1339 745h0M1358 758h0M1397 686h0M1374 739h0M1448 688h0M1432 680h0M1332 742h0M1451 693h0M1351 755h0M1418 745h0M1409 696h0M1354 760h0M1293 750h0M1312 763h0M1424 681h0M1443 694h0M1327 748h0M1404 702h0M1362 742h0M1436 691h0M1339 758h0M1378 686h0M1323 750h0M1397 699h0M1342 763h0M1415 753h0M1399 745h0M1357 748h0M1390 696h0M1450 710h0M1334 764h0M1408 713h0M1392 705h0M1433 743h0M1424 694h0M1369 758h0M1382 697h0M1327 761h0M1401 710h0M1385 702h0M1387 748h0M1378 699h0M1419 700h0M1323 763h0M1438 713h0M1322 767h0M1396 716h0M1454 657h0M1431 710h0M1389 713h0M1334 777h0M1408 726h0M1449 700h0M1352 767h0M1384 719h0M1387 761h0M1345 764h0M1419 713h0M1377 716h0M1322 780h0M1396 729h0M1435 657h0M1380 721h0M1412 710h0M1453 711h0M1370 713h0M1373 718h0M1414 719h0M1359 783h0M1447 667h0M1350 734h0M1407 716h0M1426 729h0M1365 719h0M1384 732h0M1368 724h0M1441 714h0M1400 676h0M1345 777h0M1458 654h0M1444 719h0M1303 780h0M1361 721h0M1435 670h0M1380 734h0M1421 735h0M1338 737h0M1395 719h0M1414 732h0M1353 722h0M1427 671h0M1372 735h0M1430 676h0M1407 729h0M1448 730h0M1365 732h0M1423 673h0M1368 737h0M1442 686h0M1400 689h0M1416 670h0M1457 671h0M1415 674h0M1360 738h0M1379 751h0M1318 741h0M1437 729h0M1321 746h0M1436 733h0M1395 732h0M1353 735h0M1372 748h0M1430 689h0M1333 756h0M1432 735h0M1451 748h0M1349 737h0M1390 738h0M1445 674h0M1409 751h0M1307 740h0M1422 690h0M1367 754h0M1425 695h0M1466 733h0M1443 749h0M1415 687h0M1360 751h0M1401 752h0M1434 700h0M1418 692h0M1321 759h0M1411 689h0M1311 751h0M1397 754h0M1378 741h0M1295 743h0M1410 693h0M1429 706h0M1390 751h0M1431 752h0M1403 690h0M1367 767h0M1425 708h0M1325 770h0M1309 762h0M1383 711h0M1341 751h0M1382 752h0M1440 693h0M1459 706h0M1376 708h0M1378 754h0M1336 757h0M1410 706h0M1355 770h0M1429 719h0M1394 698h0M1294 760h0M1413 711h0M1313 773h0M1297 765h0M1403 703h0M1387 695h0M1373 760h0M1406 708h0M1309 775h0M1383 724h0M1382 765h0M1366 757h0M1324 760h0M1398 709h0M1417 722h0M1356 712h0M1375 725h0M1433 703h0M1359 717h0M1391 706h0M1336 770h0M1377 771h0M1394 711h0M1454 725h0M1371 727h0M1329 730h0M1370 768h0M1428 709h0M1373 773h0M1405 725h0M1363 728h0M1324 773h0M1365 774h0M1398 722h0M1356 725h0M1368 779h0M1375 738h0M1359 730h0M1416 712h0M1435 725h0M1448 664h0M1393 728h0M1352 727h0M1451 669h0M1351 731h0M1354 736h0M1428 722h0M1386 725h0M1460 674h0M1363 741h0M1347 733h0M1421 682h0M1420 723h0M1379 685h0M1423 728h0M1340 730h0M1381 731h0M1400 744h0M1317 746h0M1358 747h0M1374 728h0M1448 677h0M1434 742h0M1351 744h0M1335 736h0M1354 749h0M1411 731h0M1344 741h0M1430 744h0M1444 679h0M1402 682h0M1420 736h0M1423 741h0M1362 731h0M1381 744h0M1439 685h0M1339 747h0M1358 760h0M1323 739h0M1342 752h0M1432 682h0M1418 747h0M1409 698h0M1450 699h0M1367 701h0M1312 765h0M1408 702h0M1424 683h0M1369 747h0M1388 760h0M1429 761h0M1401 699h0M1445 742h0M1404 704h0M1362 744h0M1403 745h0M1436 693h0M1320 747h0M1406 750h0M1339 760h0M1438 702h0M1342 765h0M1399 747h0M1412 686h0M1316 749h0M1376 763h0M1450 712h0M1389 702h0M1334 766h0M1424 696h0M1382 699h0M1327 763h0M1401 712h0M1404 717h0M1387 750h0M1345 753h0M1322 769h0M1396 718h0M1412 699h0M1398 764h0M1431 712h0M1370 702h0M1334 779h0M1391 761h0M1449 702h0M1407 705h0M1426 718h0M1343 720h0M1384 721h0M1442 662h0M1345 766h0M1460 716h0M1377 718h0M1322 782h0M1396 731h0M1363 783h0M1380 723h0M1454 672h0M1338 726h0M1437 705h0M1373 720h0M1414 721h0M1372 724h0M1391 774h0M1407 718h0M1426 731h0M1310 785h0M1384 734h0M1368 726h0M1442 675h0M1441 716h0M1400 678h0M1361 723h0M1402 724h0M1435 672h0M1437 718h0M1395 721h0M1414 734h0M1353 724h0M1427 673h0M1372 737h0M1430 678h0M1432 724h0M1365 734h0M1423 675h0M1368 739h0M1409 740h0M1367 743h0M1360 740h0M1379 753h0M1418 681h0M1318 743h0M1395 734h0M1321 748h0M1427 686h0M1397 743h0M1333 758h0M1432 737h0M1445 676h0M1390 740h0M1464 689h0M1348 743h0M1422 692h0M1425 697h0M1325 759h0M1360 753h0M1399 681h0M1418 694h0M1318 756h0M1436 748h0M1408 649h0M1433 679h0M1378 743h0M1452 692h0M1336 746h0M1355 759h0M1429 708h0M1413 700h0M1313 762h0M1445 689h0M1403 692h0M1348 756h0M1422 705h0M1406 697h0M1325 772h0M1382 754h0M1399 694h0M1299 756h0M1366 746h0M1440 695h0M1302 761h0M1343 762h0M1376 710h0M1431 646h0M1375 714h0M1378 756h0M1410 708h0M1394 700h0M1413 713h0M1313 775h0M1426 652h0M1370 757h0M1329 719h0M1387 697h0M1428 698h0M1447 711h0M1419 649h0M1405 714h0M1366 759h0M1324 762h0M1398 711h0M1417 724h0M1375 727h0M1359 719h0M1394 713h0M1435 714h0M1468 662h0M1426 665h0M1371 729h0M1428 711h0M1447 724h0M1386 714h0M1405 727h0M1363 730h0M1421 671h0M1456 665h0M1414 668h0M1359 732h0M1400 733h0M1361 778h0M1435 727h0M1374 717h0M1448 666h0M1407 665h0M1351 733h0M1409 674h0M1354 738h0M1386 727h0M1427 728h0M1460 676h0M1444 668h0M1344 730h0M1430 733h0M1363 743h0M1463 681h0M1347 735h0M1421 684h0M1340 732h0M1400 746h0M1339 736h0M1358 749h0M1416 727h0M1342 741h0M1374 730h0M1393 743h0M1451 684h0M1409 687h0M1354 751h0M1367 690h0M1427 741h0M1411 733h0M1369 736h0M1443 685h0M1401 688h0M1362 733h0M1381 746h0M1422 747h0M1455 695h0M1358 762h0M1323 741h0M1342 754h0M1399 736h0M1431 688h0M1376 752h0M1335 751h0M1408 704h0M1424 685h0M1369 749h0M1443 698h0M1388 762h0M1327 752h0M1346 765h0M1445 744h0M1362 746h0M1320 749h0M1406 752h0M1323 754h0M1397 703h0M1438 704h0M1364 755h0M1396 707h0M1412 688h0M1357 752h0M1431 701h0M1376 765h0M1450 714h0M1389 704h0M1447 645h0M1424 698h0M1394 755h0M1382 701h0M1385 706h0M1426 707h0M1417 658h0M1387 752h0M1419 704h0M1438 717h0M1303 758h0M1322 771h0M1396 720h0M1380 712h0M1412 701h0M1453 702h0M1315 768h0M1389 717h0M1373 709h0M1392 722h0M1391 763h0M1366 706h0M1407 707h0M1426 720h0M1365 710h0M1384 723h0M1419 717h0M1460 718h0M1377 720h0M1380 725h0M1421 726h0M1454 674h0M1338 728h0M1437 707h0M1395 710h0M1340 774h0M1414 723h0M1298 777h0M1372 726h0M1365 723h0M1384 736h0M1349 715h0M1368 728h0M1326 731h0M1444 723h0M1416 661h0M1361 725h0M1402 726h0M1434 678h0M1437 720h0M1337 745h0M1353 726h0M1427 675h0M1372 739h0M1446 688h0M1430 680h0M1333 747h0M1420 672h0M1432 726h0M1349 728h0M1409 742h0M1441 731h0M1400 693h0M1402 739h0M1341 729h0M1415 678h0M1360 742h0M1418 683h0M1318 745h0M1337 758h0M1321 750h0M1353 739h0M1397 745h0M1388 696h0M1429 697h0M1445 678h0M1409 755h0M1348 745h0M1406 686h0M1425 699h0M1325 761h0M1438 638h0M1383 702h0M1341 742h0M1415 691h0M1401 756h0M1418 696h0M1459 697h0M1385 748h0M1318 758h0M1439 755h0M1336 748h0M1410 697h0M1355 761h0M1429 710h0M1413 702h0M1445 691h0M1403 694h0M1348 758h0M1306 761h0M1383 715h0M1382 756h0M1366 748h0M1440 697h0M1343 764h0M1417 713h0M1301 767h0M1375 716h0M1433 694h0M1391 697h0M1336 761h0M1410 710h0M1413 715h0M1454 716h0M1297 769h0M1371 718h0M1428 700h0M1447 713h0M1405 716h0M1350 780h0M1440 710h0M1324 764h0M1398 713h0M1417 726h0M1375 729h0M1458 700h0M1394 715h0M1428 713h0M1447 726h0M1460 665h0M1405 729h0M1420 714h0M1437 654h0M1423 719h0M1414 670h0M1359 734h0M1400 735h0M1358 738h0M1416 716h0M1393 732h0M1335 727h0M1386 729h0M1427 730h0M1444 670h0M1344 732h0M1430 735h0M1388 738h0M1420 727h0M1423 732h0M1442 745h0M1362 722h0M1436 671h0M1381 735h0M1298 737h0M1339 738h0M1358 751h0M1351 748h0M1335 740h0M1409 689h0M1450 690h0M1312 756h0M1427 743h0M1424 674h0M1369 738h0M1443 687h0M1346 754h0M1404 695h0M1445 733h0M1362 735h0M1422 749h0M1439 689h0M1339 751h0M1452 628h0M1397 692h0M1342 756h0M1383 757h0M1415 746h0M1418 751h0M1357 741h0M1431 690h0M1389 693h0M1408 706h0M1392 698h0M1424 687h0M1443 700h0M1327 754h0M1401 703h0M1346 767h0M1385 695h0M1404 708h0M1403 749h0M1387 741h0M1378 692h0M1419 693h0M1364 757h0M1438 706h0M1396 709h0M1412 690h0M1431 703h0M1417 768h0M1334 770h0M1375 771h0M1408 719h0M1392 711h0M1382 703h0M1385 708h0M1426 709h0M1384 712h0M1403 762h0M1345 757h0M1419 706h0M1322 773h0M1396 722h0M1412 703h0M1315 770h0M1456 709h0M1373 711h0M1414 712h0M1465 714h0M1407 709h0M1365 712h0M1384 725h0M1441 707h0M1377 722h0M1380 727h0M1395 712h0M1414 725h0M1446 677h0M1462 658h0M1407 722h0M1333 736h0M1349 717h0M1368 730h0M1409 731h0M1442 679h0M1326 733h0M1441 720h0M1444 725h0M1457 664h0M1402 728h0M1328 779h0M1434 680h0M1379 744h0M1437 722h0M1337 747h0M1395 725h0M1436 726h0M1372 741h0M1333 749h0M1448 736h0M1432 728h0M1349 730h0M1390 731h0M1445 667h0M1409 744h0M1464 680h0M1367 747h0M1325 750h0M1341 731h0M1360 744h0M1434 693h0M1418 685h0M1321 752h0M1397 747h0M1314 749h0M1355 750h0M1445 680h0M1403 683h0M1422 696h0M1425 701h0M1325 763h0M1383 704h0M1424 742h0M1399 685h0M1418 698h0M1318 760h0M1376 701h0M1417 702h0M1321 765h0M1433 683h0M1452 696h0M1397 760h0M1336 750h0M1355 763h0M1394 691h0M1413 704h0M1406 701h0M1392 766h0M1383 717h0M1382 758h0M1385 763h0M1324 753h0M1398 702h0M1417 715h0M1456 643h0M1359 710h0M1304 774h0M1433 696h0M1391 699h0M1410 712h0M1449 640h0M1413 717h0M1352 707h0M1426 656h0M1371 720h0M1370 761h0M1428 702h0M1373 766h0M1419 653h0M1405 718h0M1453 651h0M1458 702h0M1317 726h0M1416 705h0M1393 721h0M1451 662h0M1428 715h0M1354 729h0M1386 718h0M1460 667h0M1405 731h0M1446 732h0M1444 659h0M1344 721h0M1463 672h0M1328 713h0M1347 726h0M1421 675h0M1420 716h0M1423 721h0M1414 672h0M1455 673h0M1358 740h0M1416 718h0M1374 721h0M1393 734h0M1432 662h0M1354 742h0M1427 732h0M1444 672h0M1430 737h0M1388 740h0M1420 729h0M1362 724h0M1381 737h0M1455 686h0M1358 753h0M1342 745h0M1374 734h0M1415 735h0M1432 675h0M1332 737h0M1316 729h0M1335 742h0M1409 691h0M1450 692h0M1408 695h0M1411 737h0M1424 676h0M1369 740h0M1443 689h0M1346 756h0M1362 737h0M1403 738h0M1406 743h0M1339 753h0M1439 691h0M1323 745h0M1438 695h0M1316 742h0M1357 743h0M1431 692h0M1376 756h0M1450 705h0M1389 695h0M1334 759h0M1408 708h0M1433 738h0M1424 689h0M1410 754h0M1327 756h0M1413 759h0M1401 705h0M1404 710h0M1387 743h0M1461 692h0M1425 769h0M1419 695h0M1364 759h0M1438 708h0M1377 698h0M1396 711h0M1399 753h0M1412 692h0M1357 756h0M1431 705h0M1417 770h0M1389 708h0M1373 700h0M1392 713h0M1391 754h0M1350 716h0M1426 711h0M1310 765h0M1384 714h0M1461 705h0M1345 759h0M1419 708h0M1303 762h0M1377 711h0M1322 775h0M1396 724h0M1380 716h0M1370 708h0M1340 765h0M1414 714h0M1405 665h0M1446 666h0M1407 711h0M1426 724h0M1310 778h0M1384 727h0M1368 719h0M1442 668h0M1400 671h0M1441 709h0M1444 714h0M1435 665h0M1402 717h0M1347 781h0M1421 730h0M1393 668h0M1338 732h0M1379 733h0M1437 711h0M1395 714h0M1414 727h0M1330 733h0M1333 738h0M1448 725h0M1432 717h0M1332 779h0M1451 730h0M1423 668h0M1409 733h0M1442 681h0M1326 735h0M1441 722h0M1457 666h0M1402 730h0M1360 733h0M1434 682h0M1418 674h0M1337 749h0M1395 727h0M1321 741h0M1353 730h0M1439 733h0M1430 684h0M1333 751h0M1448 738h0M1445 669h0M1390 733h0M1348 736h0M1422 685h0M1381 684h0M1360 746h0M1434 695h0M1399 674h0M1318 749h0M1450 639h0M1436 741h0M1378 736h0M1452 685h0M1314 751h0M1355 752h0M1410 688h0M1429 701h0M1413 693h0M1313 755h0M1445 682h0M1348 749h0M1422 698h0M1367 762h0M1387 677h0M1425 703h0M1383 706h0M1401 760h0M1440 688h0M1385 752h0M1302 754h0M1343 755h0M1376 703h0M1417 704h0M1378 749h0M1452 698h0M1336 752h0M1410 701h0M1413 706h0M1313 768h0M1371 709h0M1387 690h0M1373 755h0M1306 765h0M1364 706h0M1405 707h0M1309 770h0M1440 701h0M1324 755h0M1343 768h0M1375 720h0M1419 763h0M1336 765h0M1394 706h0M1435 707h0M1426 658h0M1371 722h0M1297 773h0M1447 717h0M1463 661h0M1363 723h0M1407 766h0M1324 768h0M1398 717h0M1365 769h0M1368 774h0M1414 661h0M1400 726h0M1416 707h0M1435 720h0M1374 710h0M1319 774h0M1393 723h0M1351 726h0M1428 717h0M1312 734h0M1386 720h0M1460 669h0M1446 734h0M1430 726h0M1363 736h0M1347 728h0M1421 677h0M1420 718h0M1423 723h0M1436 662h0M1307 777h0M1455 675h0M1400 739h0M1381 726h0M1340 725h0M1358 742h0M1342 734h0M1416 720h0M1374 723h0M1448 672h0M1393 736h0M1434 737h0M1432 664h0M1351 739h0M1354 744h0M1312 747h0M1427 734h0M1411 726h0M1311 788h0M1369 729h0M1443 678h0M1388 742h0M1402 677h0M1420 731h0M1346 745h0M1423 736h0M1362 726h0M1422 740h0M1455 688h0M1439 680h0M1339 742h0M1358 755h0M1342 747h0M1300 750h0M1399 729h0M1432 677h0M1376 745h0M1450 694h0M1408 697h0M1424 678h0M1369 742h0M1443 691h0M1327 745h0M1401 694h0M1346 758h0M1422 753h0M1323 747h0M1364 748h0M1438 697h0M1415 750h0M1399 742h0M1412 681h0M1357 745h0M1431 694h0M1417 759h0M1408 710h0M1392 702h0M1433 740h0M1391 743h0M1350 705h0M1410 756h0M1394 748h0M1327 758h0M1385 699h0M1459 648h0M1403 753h0M1387 745h0M1419 697h0M1364 761h0M1322 764h0M1396 713h0M1412 694h0M1357 758h0M1315 761h0M1389 710h0M1392 715h0M1449 697h0M1394 761h0M1384 716h0M1387 758h0M1419 710h0M1377 713h0M1380 718h0M1453 708h0M1437 700h0M1298 770h0M1372 719h0M1317 783h0M1449 710h0M1407 713h0M1352 777h0M1448 714h0M1365 716h0M1384 729h0M1442 670h0M1328 770h0M1402 719h0M1435 667h0M1421 732h0M1434 671h0M1379 735h0M1437 713h0M1337 738h0M1395 716h0M1414 729h0M1446 681h0M1388 676h0M1423 670h0M1409 735h0M1367 738h0M1402 732h0M1360 735h0M1434 684h0M1321 743h0M1320 784h0M1427 681h0M1430 686h0M1330 748h0M1429 690h0M1445 671h0M1390 735h0M1409 748h0M1403 674h0M1348 738h0M1422 687h0M1367 751h0M1325 754h0M1341 735h0M1415 684h0M1401 749h0M1418 689h0M1404 754h0M1436 743h0M1378 738h0M1452 687h0M1397 751h0M1336 741h0M1429 703h0M1313 757h0M1412 736h0M1431 749h0M1403 687h0M1348 751h0M1389 752h0M1406 692h0M1425 705h0M1419 631h0M1383 708h0M1382 749h0M1366 741h0M1417 706h0M1301 760h0M1304 765h0M1452 700h0M1410 703h0M1413 708h0M1454 709h0M1313 770h0M1370 752h0M1447 706h0M1405 709h0M1363 712h0M1324 757h0M1343 770h0M1417 719h0M1375 722h0M1359 714h0M1304 778h0M1391 703h0M1435 709h0M1380 773h0M1426 660h0M1338 776h0M1297 775h0M1386 709h0M1331 773h0M1405 722h0M1444 650h0M1463 663h0M1363 725h0M1420 707h0M1423 712h0M1356 722h0M1442 725h0M1359 727h0M1400 728h0M1455 664h0M1416 709h0M1435 722h0M1374 712h0M1319 776h0M1393 725h0M1351 728h0M1441 658h0M1386 722h0M1430 728h0M1434 618h0M1423 725h0M1442 738h0M1381 728h0M1326 792h0M1400 741h0M1339 731h0M1358 744h0M1416 722h0M1342 736h0M1374 725h0M1415 726h0M1448 674h0M1432 666h0M1332 728h0M1451 679h0M1351 741h0M1335 733h0M1354 746h0M1466 664h0M1411 728h0M1311 790h0M1430 741h0M1369 731h0M1443 680h0M1388 744h0M1327 734h0M1346 747h0M1436 677h0M1422 742h0M1439 682h0M1415 739h0M1399 731h0M1357 734h0M1431 683h0M1376 747h0M1408 699h0M1369 744h0M1443 693h0M1410 745h0M1401 696h0M1413 750h0M1404 701h0M1403 742h0M1461 683h0M1419 686h0M1364 750h0M1438 699h0M1396 702h0M1412 683h0M1357 747h0M1431 696h0M1334 763h0M1408 712h0M1392 704h0M1449 686h0M1371 766h0M1345 750h0M1419 699h0M1303 753h0M1377 702h0M1396 715h0M1380 707h0M1412 696h0M1359 769h0M1449 699h0M1394 763h0M1407 702h0M1426 715h0M1365 705h0M1329 782h0M1441 700h0M1386 764h0M1303 766h0M1444 705h0M1380 720h0M1421 721h0M1338 723h0M1453 710h0M1437 702h0M1340 769h0M1414 718h0M1372 721h0M1407 715h0M1291 769h0M1365 718h0M1384 731h0M1368 723h0M1442 672h0M1441 713h0M1434 673h0M1379 737h0M1337 740h0M1372 734h0M1446 683h0M1330 737h0M1420 667h0M1316 775h0M1390 724h0M1422 676h0M1367 740h0M1325 743h0M1402 734h0M1360 737h0M1337 753h0M1321 745h0M1436 732h0M1353 734h0M1439 737h0M1452 676h0M1311 737h0M1397 740h0M1388 691h0M1429 692h0M1355 743h0M1432 734h0M1445 673h0M1422 689h0M1367 753h0M1406 681h0M1425 694h0M1325 756h0M1424 735h0M1341 737h0M1415 686h0M1382 738h0M1401 751h0M1385 743h0M1418 691h0M1417 695h0M1433 676h0M1378 740h0M1397 753h0M1355 756h0M1413 697h0M1412 738h0M1445 686h0M1306 756h0M1383 710h0M1382 751h0M1366 743h0M1440 692h0M1459 705h0M1404 769h0M1324 746h0M1398 695h0M1343 759h0M1417 708h0M1375 711h0M1433 689h0M1378 753h0M1336 756h0M1410 705h0M1377 757h0M1396 770h0M1394 697h0M1413 710h0M1454 711h0M1426 649h0M1412 751h0M1371 713h0M1370 754h0M1389 767h0M1428 695h0M1373 759h0M1447 708h0M1405 711h0M1363 714h0M1366 756h0M1440 705h0M1426 770h0M1324 759h0M1398 708h0M1442 714h0M1375 724h0M1359 716h0M1416 698h0M1361 762h0M1454 724h0M1319 765h0M1393 714h0M1338 778h0M1351 717h0M1296 781h0M1437 757h0M1428 708h0M1386 711h0M1405 724h0M1363 727h0M1462 706h0M1420 709h0M1437 649h0M1349 765h0M1423 714h0M1442 727h0M1381 717h0M1414 665h0M1400 730h0M1416 711h0M1435 724h0M1374 714h0M1319 778h0M1393 727h0M1434 728h0M1351 730h0M1335 722h0M1409 671h0M1354 735h0M1441 660h0M1427 725h0M1411 717h0M1311 779h0M1430 730h0M1444 665h0M1388 733h0M1420 722h0M1349 778h0M1423 727h0M1381 730h0M1400 743h0M1439 671h0M1358 746h0M1342 738h0M1434 741h0M1418 733h0M1390 671h0M1335 735h0M1376 736h0M1409 684h0M1369 733h0M1388 746h0M1346 749h0M1445 728h0M1362 730h0M1436 679h0M1403 731h0M1422 744h0M1406 736h0M1339 746h0M1425 749h0M1323 738h0M1342 751h0M1383 752h0M1415 741h0M1399 733h0M1418 746h0M1357 736h0M1431 685h0M1334 752h0M1408 701h0M1392 693h0M1424 682h0M1369 746h0M1410 747h0M1401 698h0M1413 752h0M1404 703h0M1403 744h0M1387 736h0M1419 688h0M1364 752h0M1438 701h0M1383 765h0M1322 755h0M1396 704h0M1399 746h0M1440 747h0M1357 749h0M1431 698h0M1389 701h0M1334 765h0M1408 714h0M1392 706h0M1433 744h0M1391 747h0M1394 752h0M1426 704h0M1428 750h0M1345 752h0M1419 701h0M1396 717h0M1380 709h0M1437 691h0M1356 766h0M1373 706h0M1414 707h0M1391 760h0M1350 722h0M1407 704h0M1352 768h0M1426 717h0M1310 771h0M1384 720h0M1428 763h0M1441 702h0M1444 707h0M1435 658h0M1380 722h0M1421 723h0M1379 726h0M1453 712h0M1420 764h0M1437 704h0M1456 717h0M1395 707h0M1414 720h0M1372 723h0M1446 672h0M1448 718h0M1441 715h0M1444 720h0M1416 658h0M1402 723h0M1421 736h0M1360 726h0M1434 675h0M1395 720h0M1436 721h0M1353 723h0M1372 736h0M1430 677h0M1333 744h0M1349 725h0M1390 726h0M1316 777h0M1348 729h0M1422 678h0M1425 683h0M1325 745h0M1402 736h0M1415 675h0M1401 740h0M1418 680h0M1321 747h0M1378 729h0M1452 678h0M1410 681h0M1429 694h0M1413 686h0M1313 748h0M1445 675h0M1348 742h0M1422 691h0M1367 755h0M1408 756h0M1425 696h0M1309 750h0M1383 699h0M1341 739h0M1382 740h0M1399 680h0M1385 745h0M1404 758h0M1343 748h0M1433 678h0M1410 694h0M1355 758h0M1429 707h0M1413 699h0M1412 740h0M1370 743h0M1403 691h0M1389 756h0M1373 748h0M1392 761h0M1405 700h0M1308 767h0M1366 745h0M1440 694h0M1385 758h0M1398 697h0M1343 761h0M1301 764h0M1461 753h0M1375 713h0M1359 705h0M1304 769h0M1433 691h0M1391 694h0M1336 758h0M1377 759h0M1394 699h0M1435 700h0M1380 764h0M1297 766h0M1371 715h0M1338 767h0M1412 753h0M1370 756h0M1389 769h0M1373 761h0M1405 713h0M1407 759h0M1324 761h0M1437 638h0M1442 716h0M1359 718h0M1304 782h0M1400 719h0M1435 713h0M1374 703h0M1393 716h0M1351 719h0M1428 710h0M1386 713h0M1344 716h0M1330 781h0M1420 711h0M1349 767h0M1423 716h0M1442 729h0M1381 719h0M1400 732h0M1339 722h0M1458 710h0M1358 735h0M1416 713h0M1457 714h0M1393 729h0M1360 781h0M1351 732h0M1409 673h0M1427 727h0M1411 719h0M1430 732h0M1369 722h0M1388 735h0M1420 724h0M1423 729h0M1362 719h0M1436 668h0M1381 732h0M1422 733h0M1307 783h0M1439 673h0M1339 735h0M1425 738h0M1358 748h0M1415 730h0M1399 722h0M1418 735h0M1376 738h0M1411 732h0M1369 735h0M1429 749h0M1401 687h0M1362 732h0M1403 733h0M1422 746h0M1406 738h0M1425 751h0M1397 689h0M1438 690h0M1415 743h0M1399 735h0M1418 748h0M1412 674h0M1357 738h0M1431 687h0M1376 751h0M1334 754h0M1408 703h0M1433 733h0M1391 736h0M1424 684h0M1394 741h0M1327 751h0M1401 700h0M1404 705h0M1403 746h0M1387 738h0M1406 751h0M1419 690h0M1364 754h0M1438 703h0M1322 757h0M1396 706h0M1380 698h0M1357 751h0M1398 752h0M1392 708h0M1391 749h0M1465 698h0M1449 690h0M1394 754h0M1407 693h0M1426 706h0M1310 760h0M1387 751h0M1419 703h0M1303 757h0M1377 706h0M1322 770h0M1396 719h0M1398 765h0M1437 693h0M1414 709h0M1359 773h0M1317 776h0M1407 706h0M1365 709h0M1310 773h0M1368 714h0M1386 768h0M1344 771h0M1361 711h0M1402 712h0M1434 664h0M1379 728h0M1337 731h0M1395 709h0M1414 722h0M1372 725h0M1446 674h0M1448 720h0M1351 787h0M1368 727h0M1409 728h0M1367 731h0M1441 717h0M1344 784h0M1328 776h0M1421 738h0M1360 728h0M1418 669h0M1337 744h0M1362 774h0M1395 722h0M1353 725h0M1427 674h0M1397 731h0M1388 682h0M1374 784h0M1333 746h0M1432 725h0M1403 667h0M1422 680h0M1367 744h0M1425 685h0M1341 728h0M1401 742h0M1459 683h0M1404 747h0M1321 749h0M1378 731h0M1410 683h0M1355 747h0M1429 696h0M1413 688h0M1445 677h0M1390 741h0M1348 744h0M1422 693h0M1406 685h0M1392 750h0M1425 698h0M1309 752h0M1383 701h0M1382 742h0M1366 734h0M1440 683h0M1385 747h0M1404 760h0M1343 750h0M1375 702h0M1336 747h0M1410 696h0M1355 760h0M1396 761h0M1313 763h0M1297 755h0M1370 745h0M1389 758h0M1428 686h0M1373 750h0M1331 753h0M1449 745h0M1366 747h0M1324 750h0M1398 699h0M1384 764h0M1417 712h0M1301 766h0M1375 715h0M1359 707h0M1304 771h0M1419 758h0M1394 701h0M1361 753h0M1435 702h0M1454 715h0M1393 705h0M1338 769h0M1412 755h0M1426 653h0M1370 758h0M1428 699h0M1373 763h0M1447 712h0M1405 715h0M1446 716h0M1444 643h0M1363 718h0M1420 700h0M1365 764h0M1423 705h0M1356 715h0M1442 718h0M1326 772h0M1416 702h0M1435 715h0M1319 769h0M1393 718h0M1351 721h0M1354 726h0M1427 716h0M1344 718h0M1430 721h0M1347 723h0M1420 713h0M1365 777h0M1423 718h0M1362 708h0M1307 772h0M1381 721h0M1400 734h0M1358 737h0M1416 715h0M1448 667h0M1415 719h0M1434 732h0M1451 672h0M1351 734h0M1418 724h0M1335 726h0M1409 675h0M1353 780h0M1427 729h0M1411 721h0M1369 724h0M1443 673h0M1401 676h0M1346 740h0M1404 681h0M1436 670h0M1348 786h0M1381 734h0M1425 740h0M1358 750h0M1342 742h0M1415 732h0M1399 724h0M1418 737h0M1431 676h0M1376 740h0M1450 689h0M1334 743h0M1408 692h0M1411 734h0M1424 673h0M1369 737h0M1410 738h0M1443 686h0M1346 753h0M1387 727h0M1406 740h0M1438 692h0M1396 695h0M1431 689h0M1376 753h0M1334 756h0M1408 705h0M1433 735h0M1391 738h0M1394 743h0M1329 762h0M1345 743h0M1419 692h0M1438 705h0M1303 746h0M1322 759h0M1396 708h0M1398 754h0M1417 767h0M1389 705h0M1356 757h0M1392 710h0M1350 713h0M1391 751h0M1394 756h0M1407 695h0M1426 708h0M1371 772h0M1329 775h0M1345 756h0M1419 705h0M1377 708h0M1463 711h0M1380 713h0M1421 714h0M1437 695h0M1395 698h0M1414 711h0M1458 754h0M1372 714h0M1416 757h0M1407 708h0M1310 775h0M1451 714h0M1384 724h0M1368 716h0M1326 719h0M1386 770h0M1421 727h0M1360 717h0M1305 781h0M1379 730h0M1437 708h0M1337 733h0M1432 714h0M1332 776h0M1451 727h0M1390 717h0M1335 781h0M1409 730h0M1402 727h0M1443 728h0M1415 666h0M1360 730h0M1379 743h0M1418 671h0M1436 725h0M1320 779h0M1397 733h0M1388 684h0M1429 685h0M1355 736h0M1390 730h0M1464 679h0M1409 743h0M1367 746h0M1424 728h0M1382 731h0M1385 736h0M1318 746h0M1404 749h0M1321 751h0M1436 738h0M1378 733h0M1452 682h0M1397 746h0M1336 736h0M1429 698h0M1313 752h0M1445 679h0M1412 731h0M1348 746h0M1389 747h0M1392 752h0M1350 755h0M1382 744h0M1366 736h0M1385 749h0M1343 752h0M1417 701h0M1301 755h0M1375 704h0M1433 682h0M1391 685h0M1377 750h0M1394 690h0M1313 765h0M1297 757h0M1412 744h0M1431 757h0M1370 747h0M1389 760h0M1387 687h0M1428 688h0M1373 752h0M1331 755h0M1363 707h0M1366 749h0M1398 701h0M1384 766h0M1375 717h0M1454 717h0M1319 758h0M1393 707h0M1428 701h0M1331 768h0M1405 717h0M1446 718h0M1363 720h0M1420 702h0M1423 707h0M1368 771h0M1442 720h0M1381 710h0M1414 658h0M1400 723h0M1458 701h0M1416 704h0M1434 721h0M1351 723h0M1427 718h0M1430 723h0M1314 777h0M1388 726h0M1420 715h0M1423 720h0M1362 710h0M1381 723h0M1400 736h0M1439 664h0M1339 726h0M1358 739h0M1397 667h0M1342 731h0M1457 718h0M1415 721h0M1432 661h0M1418 726h0M1450 678h0M1354 741h0M1427 731h0M1411 723h0M1430 736h0M1369 726h0M1443 675h0M1388 739h0M1327 729h0M1346 742h0M1362 723h0M1320 726h0M1439 677h0M1425 742h0M1383 745h0M1415 734h0M1399 726h0M1431 678h0M1376 742h0M1408 694h0M1424 675h0M1369 739h0M1410 740h0M1327 742h0M1413 745h0M1346 755h0M1404 696h0M1403 737h0M1387 729h0M1406 742h0M1419 681h0M1364 745h0M1322 748h0M1396 697h0M1431 691h0M1376 755h0M1417 756h0M1389 694h0M1375 759h0M1433 737h0M1391 740h0M1394 745h0M1352 748h0M1426 697h0M1417 648h0M1329 764h0M1387 742h0M1345 745h0M1419 694h0M1364 758h0M1438 707h0M1377 697h0M1322 761h0M1453 692h0M1398 756h0M1315 758h0M1356 759h0M1414 700h0M1359 764h0M1317 767h0M1407 697h0M1352 761h0M1426 710h0M1384 713h0M1423 641h0M1428 756h0M1441 695h0M1386 759h0M1444 700h0M1303 761h0M1363 775h0M1421 716h0M1437 697h0M1456 710h0M1340 764h0M1414 713h0M1400 778h0M1298 767h0M1416 759h0M1407 710h0M1448 711h0M1451 716h0M1368 718h0M1409 719h0M1326 721h0M1441 708h0M1328 767h0M1402 716h0M1421 729h0M1379 732h0M1437 710h0M1395 713h0M1340 777h0M1381 778h0M1298 780h0M1372 729h0M1448 724h0M1332 778h0M1390 719h0M1409 732h0M1348 722h0M1402 729h0M1443 730h0M1341 719h0M1434 681h0M1401 733h0M1318 735h0M1404 738h0M1337 748h0M1436 727h0M1397 735h0M1355 738h0M1429 687h0M1432 729h0M1445 668h0M1390 732h0M1464 681h0M1431 733h0M1348 735h0M1422 684h0M1367 748h0M1406 676h0M1425 689h0M1424 730h0M1382 733h0M1343 741h0M1417 690h0M1433 671h0M1378 735h0M1452 684h0M1397 748h0M1410 687h0M1355 751h0M1429 700h0M1413 692h0M1412 733h0M1403 684h0M1389 749h0M1373 741h0M1406 689h0M1392 754h0M1309 756h0M1424 743h0M1405 693h0M1350 757h0M1382 746h0M1366 738h0M1385 751h0M1324 741h0M1398 690h0M1343 754h0M1417 703h0M1433 684h0M1336 751h0M1377 752h0M1394 692h0M1435 693h0M1297 759h0M1338 760h0M1412 746h0M1370 749h0M1428 690h0M1386 693h0M1331 757h0M1405 706h0M1366 751h0M1324 754h0M1365 755h0M1398 703h0M1359 711h0M1304 775h0M1377 765h0M1416 693h0M1361 757h0M1380 770h0M1319 760h0M1393 709h0M1351 712h0M1296 776h0M1331 770h0M1446 720h0M1463 660h0M1363 722h0M1420 704h0M1349 760h0M1423 709h0M1442 722h0M1381 712h0M1400 725h0M1358 728h0M1416 706h0M1393 722h0M1434 723h0M1337 790h0M1354 730h0M1353 771h0M1430 725h0M1347 727h0M1388 728h0M1420 717h0M1346 731h0M1423 722h0M1362 712h0M1436 661h0M1381 725h0M1400 738h0M1358 741h0M1457 720h0M1341 774h0M1415 723h0M1399 715h0M1332 725h0M1418 728h0M1335 730h0M1376 731h0M1450 680h0M1411 725h0M1452 726h0M1424 664h0M1388 741h0M1346 744h0M1445 723h0M1362 725h0M1403 726h0M1436 674h0M1406 731h0M1339 741h0M1323 733h0M1438 683h0M1342 746h0M1383 747h0M1415 736h0M1399 728h0M1418 741h0M1431 680h0M1376 744h0M1450 693h0M1433 726h0M1424 677h0M1465 678h0M1410 742h0M1371 750h0M1404 698h0M1387 731h0M1406 744h0M1419 683h0M1364 747h0M1383 760h0M1322 750h0M1396 699h0M1380 691h0M1440 742h0M1412 680h0M1357 744h0M1431 693h0M1398 745h0M1334 760h0M1375 761h0M1392 701h0M1292 763h0M1394 747h0M1407 686h0M1352 750h0M1371 763h0M1329 766h0M1387 744h0M1428 745h0M1460 697h0M1377 699h0M1322 763h0M1396 712h0M1453 694h0M1398 758h0M1356 761h0M1414 702h0M1359 766h0M1446 654h0M1407 699h0M1329 779h0M1460 710h0M1444 702h0M1421 718h0M1434 657h0M1437 699h0M1414 715h0M1353 705h0M1298 769h0M1317 782h0M1446 667h0M1333 726h0M1432 705h0M1365 715h0M1451 718h0M1409 721h0M1367 724h0M1328 769h0M1402 718h0M1360 721h0M1337 737h0M1395 715h0M1436 716h0M1439 721h0M1397 724h0M1430 672h0M1374 777h0M1448 726h0M1432 718h0M1422 673h0M1367 737h0M1424 719h0M1360 734h0M1401 735h0M1418 675h0M1320 783h0M1378 724h0M1397 737h0M1355 740h0M1429 689h0M1413 681h0M1316 785h0M1390 734h0M1348 737h0M1422 686h0M1425 691h0M1325 753h0M1392 743h0M1424 732h0M1382 735h0M1440 676h0M1385 740h0M1459 689h0M1417 692h0M1433 673h0M1378 737h0M1452 686h0M1355 753h0M1413 694h0M1297 748h0M1412 735h0M1389 751h0M1428 679h0M1447 692h0M1405 695h0M1350 759h0M1366 740h0M1440 689h0M1324 743h0M1398 692h0M1417 705h0M1384 757h0M1375 708h0M1377 754h0M1361 746h0M1294 756h0M1380 759h0M1453 749h0M1370 751h0M1373 756h0M1331 759h0M1407 754h0M1426 767h0M1324 756h0M1420 693h0M1384 770h0M1368 762h0M1377 767h0M1416 695h0M1361 759h0M1435 708h0M1393 711h0M1338 775h0M1353 760h0M1289 775h0M1363 724h0M1430 714h0M1420 706h0M1423 711h0M1307 765h0M1381 714h0M1400 727h0M1416 708h0M1434 725h0M1351 727h0M1354 732h0M1427 722h0M1411 714h0M1311 776h0M1430 727h0M1369 717h0M1443 666h0M1388 730h0M1346 733h0M1362 714h0M1381 727h0M1422 728h0M1439 668h0M1339 730h0M1425 733h0M1342 735h0M1457 722h0M1399 717h0M1432 665h0M1418 730h0M1299 779h0M1376 733h0M1450 682h0M1408 685h0M1411 727h0M1378 779h0M1369 730h0M1443 679h0M1388 743h0M1327 733h0M1346 746h0M1403 728h0M1406 733h0M1364 736h0M1397 684h0M1399 730h0M1357 733h0M1431 682h0M1376 746h0M1450 695h0M1417 747h0M1392 690h0M1391 731h0M1410 744h0M1429 757h0M1394 736h0M1327 746h0M1426 688h0M1329 755h0M1387 733h0M1461 682h0M1406 746h0M1364 749h0M1438 698h0M1322 752h0M1396 701h0M1440 744h0M1412 682h0M1453 683h0M1398 747h0M1357 746h0M1417 760h0M1356 750h0M1350 706h0M1391 744h0M1449 685h0M1413 762h0M1352 752h0M1426 701h0M1371 765h0M1345 749h0M1377 701h0M1463 704h0M1322 765h0M1380 706h0M1421 707h0M1437 688h0M1356 763h0M1395 691h0M1340 755h0M1359 768h0M1449 698h0M1352 765h0M1310 768h0M1384 717h0M1328 758h0M1402 707h0M1421 720h0M1434 659h0M1379 723h0M1395 704h0M1414 717h0M1353 707h0M1448 715h0M1432 707h0M1332 769h0M1451 720h0M1349 709h0M1390 710h0M1409 723h0M1326 725h0M1367 726h0M1441 712h0M1328 771h0M1402 720h0M1360 723h0M1434 672h0M1379 736h0M1346 788h0M1337 739h0M1362 769h0M1436 718h0M1439 723h0M1397 726h0M1355 729h0M1432 720h0M1316 774h0M1390 723h0M1409 736h0M1422 675h0M1367 739h0M1425 680h0M1325 742h0M1424 721h0M1382 724h0M1327 788h0M1401 737h0M1404 742h0M1433 662h0M1378 726h0M1397 739h0M1336 729h0M1355 742h0M1429 691h0M1413 683h0M1412 724h0M1445 672h0M1348 739h0M1389 740h0M1382 737h0M1366 729h0M1385 742h0M1343 745h0M1417 694h0M1378 739h0M1419 740h0M1377 743h0M1410 691h0M1394 683h0M1413 696h0M1380 748h0M1412 737h0M1431 750h0M1370 740h0M1428 681h0M1447 694h0M1331 748h0M1350 761h0M1363 700h0M1366 742h0M1407 743h0M1324 745h0M1384 759h0M1304 766h0M1419 753h0M1458 681h0M1361 748h0M1435 697h0M1454 710h0M1373 758h0M1331 761h0M1405 710h0M1462 692h0M1426 769h0M1420 695h0M1423 700h0M1359 715h0M1400 716h0M1358 719h0M1416 697h0M1361 761h0M1435 710h0M1393 713h0M1354 721h0M1430 716h0M1347 718h0M1388 719h0M1420 708h0M1423 713h0M1307 767h0M1455 665h0M1400 729h0M1439 657h0M1358 732h0M1341 765h0M1415 714h0M1374 713h0M1434 727h0M1418 719h0M1450 671h0M1321 786h0M1353 775h0M1427 724h0M1411 716h0M1295 770h0M1369 719h0M1443 668h0M1388 732h0M1362 716h0M1307 780h0M1381 729h0M1422 730h0M1439 670h0M1425 735h0M1383 738h0M1415 727h0M1434 740h0M1399 719h0M1418 732h0M1431 671h0M1376 735h0M1334 738h0M1443 681h0M1410 733h0M1413 738h0M1403 730h0M1387 722h0M1461 671h0M1406 735h0M1364 738h0M1438 687h0M1383 751h0M1399 732h0M1431 684h0M1408 700h0M1433 730h0M1392 692h0M1391 733h0M1394 738h0M1426 690h0M1403 743h0M1387 735h0M1406 748h0M1345 738h0M1419 687h0M1405 752h0M1396 703h0M1453 685h0M1375 765h0M1446 645h0M1350 708h0M1317 760h0M1394 751h0M1407 690h0M1352 754h0M1426 703h0M1467 704h0M1384 706h0M1428 749h0M1345 751h0M1386 752h0M1460 701h0M1441 688h0M1303 754h0M1444 693h0M1363 768h0M1380 708h0M1421 709h0M1453 698h0M1437 690h0M1340 757h0M1414 706h0M1372 709h0M1317 773h0M1446 658h0M1458 749h0M1407 703h0M1310 770h0M1368 711h0M1457 645h0M1402 709h0M1421 722h0M1437 703h0M1395 706h0M1340 770h0M1439 712h0M1372 722h0M1339 774h0M1427 658h0M1432 709h0M1332 771h0M1316 763h0M1335 776h0M1409 725h0M1422 664h0M1402 722h0M1443 723h0M1360 725h0M1401 726h0M1404 731h0M1337 741h0M1436 720h0M1452 664h0M1397 728h0M1355 731h0M1445 661h0M1431 726h0M1348 728h0M1367 741h0M1408 742h0M1425 682h0M1424 723h0M1369 787h0M1383 685h0M1341 725h0M1382 726h0M1401 739h0M1440 667h0M1385 731h0M1417 683h0M1397 741h0M1355 744h0M1429 693h0M1413 685h0M1412 726h0M1370 729h0M1389 742h0M1373 734h0M1406 682h0M1309 749h0M1383 698h0M1382 739h0M1366 731h0M1385 744h0M1343 747h0M1417 696h0M1375 699h0M1433 677h0M1413 698h0M1313 760h0M1370 742h0M1447 696h0M1350 763h0M1366 744h0M1462 681h0M1407 745h0M1453 632h0M1324 747h0M1384 761h0M1375 712h0M1359 704h0M1377 758h0M1361 750h0M1435 699h0M1380 763h0M1454 712h0M1319 753h0M1395 748h0M1354 710h0M1428 696h0M1405 712h0M1446 713h0M1363 715h0M1365 761h0M1423 702h0M1442 715h0M1381 705h0M1326 769h0M1400 718h0M1416 699h0M1361 763h0M1435 712h0M1374 702h0M1319 766h0M1393 715h0M1434 716h0M1441 648h0M1427 713h0M1430 718h0M1347 720h0M1388 721h0M1420 710h0M1346 724h0M1349 766h0M1423 715h0M1464 716h0M1381 718h0M1455 667h0M1400 731h0M1374 715h0M1415 716h0M1432 656h0M1418 721h0M1376 724h0M1427 726h0M1411 718h0M1369 721h0M1443 670h0M1429 735h0M1346 737h0M1436 667h0M1348 783h0M1307 782h0M1425 737h0M1342 739h0M1383 740h0M1341 780h0M1415 729h0M1399 721h0M1431 673h0M1376 737h0M1450 686h0M1334 740h0M1424 670h0M1369 734h0M1410 735h0M1327 737h0M1371 743h0M1403 732h0M1387 724h0M1406 737h0M1425 750h0M1438 689h0M1383 753h0M1396 692h0M1380 684h0M1399 734h0M1412 673h0M1357 737h0M1398 738h0M1417 751h0M1433 732h0M1392 694h0M1391 735h0M1449 676h0M1352 743h0M1426 692h0M1329 759h0M1387 737h0M1419 689h0M1364 753h0M1405 754h0M1322 756h0M1380 697h0M1437 679h0M1340 746h0M1414 695h0M1359 759h0M1449 689h0M1394 753h0M1407 692h0M1393 757h0M1426 705h0M1384 708h0M1441 690h0M1444 695h0M1363 770h0M1402 698h0M1421 711h0M1379 714h0M1437 692h0M1456 705h0M1340 759h0M1414 708h0M1430 652h0M1448 706h0M1432 698h0M1368 713h0M1409 714h0M1335 765h0M1386 767h0M1444 708h0M1344 770h0M1402 711h0M1421 724h0M1337 730h0M1395 708h0M1436 709h0M1362 760h0M1353 711h0M1439 714h0M1298 775h0M1397 717h0M1416 767h0M1448 719h0M1415 771h0M1432 711h0M1390 714h0M1335 778h0M1409 727h0M1422 666h0M1367 730h0M1411 773h0M1424 712h0M1443 725h0M1415 663h0M1404 733h0M1362 773h0M1320 776h0M1378 717h0M1397 730h0M1355 733h0M1429 682h0M1445 663h0M1390 727h0M1431 728h0M1348 730h0M1422 679h0M1325 746h0M1424 725h0M1443 738h0M1382 728h0M1366 720h0M1440 669h0M1385 733h0M1459 682h0M1404 746h0M1343 736h0M1417 685h0M1452 679h0M1419 731h0M1410 682h0M1355 746h0M1429 695h0M1394 674h0M1413 687h0M1412 728h0M1406 684h0M1447 685h0M1405 688h0M1350 752h0M1449 731h0M1382 741h0M1366 733h0M1385 746h0M1459 695h0M1324 736h0M1343 749h0M1417 698h0M1461 741h0M1304 757h0M1419 744h0M1396 760h0M1435 688h0M1380 752h0M1371 703h0M1370 744h0M1373 749h0M1447 698h0M1386 688h0M1405 701h0M1350 765h0M1449 744h0M1462 683h0M1407 747h0M1365 750h0M1398 698h0M1456 639h0M1368 755h0M1301 765h0M1304 770h0M1400 707h0M1377 760h0M1416 688h0M1435 701h0M1319 755h0M1393 704h0M1451 645h0M1414 763h0M1331 765h0M1446 715h0M1430 707h0M1363 717h0M1420 699h0M1349 755h0M1423 704h0M1307 758h0M1381 707h0M1400 720h0M1457 702h0M1374 704h0M1319 768h0M1360 769h0M1427 715h0M1446 728h0M1411 707h0M1430 720h0M1369 710h0M1388 723h0M1420 712h0M1349 768h0M1423 717h0M1307 771h0M1381 720h0M1422 721h0M1455 669h0M1439 661h0M1358 736h0M1325 788h0M1341 769h0M1415 718h0M1399 710h0M1299 772h0M1418 723h0M1450 675h0M1334 729h0M1411 720h0M1388 736h0M1429 737h0M1346 739h0M1403 721h0M1406 726h0M1425 739h0M1323 728h0M1438 678h0M1383 742h0M1415 731h0M1399 723h0M1418 736h0M1357 726h0M1376 739h0M1417 740h0M1408 691h0M1433 721h0M1452 734h0M1424 672h0M1391 724h0M1410 737h0M1394 729h0M1413 742h0M1426 681h0M1403 734h0M1387 726h0M1461 675h0M1406 739h0M1345 729h0M1419 678h0M1364 742h0M1396 694h0M1440 737h0M1453 676h0M1417 753h0M1356 743h0M1389 691h0M1433 734h0M1392 696h0M1359 748h0M1391 737h0M1410 750h0M1394 742h0M1413 755h0M1426 694h0M1329 761h0M1345 742h0M1386 743h0M1363 759h0M1421 700h0M1398 753h0M1437 681h0M1356 756h0M1359 761h0M1298 751h0M1372 700h0M1317 764h0M1449 691h0M1407 694h0M1352 758h0M1310 761h0M1368 702h0M1428 753h0M1441 692h0M1386 756h0M1444 697h0M1344 759h0M1402 700h0M1347 764h0M1421 713h0M1420 754h0M1437 694h0M1395 697h0M1469 646h0M1381 762h0M1340 761h0M1414 710h0M1455 711h0M1298 764h0M1372 713h0M1358 778h0M1374 759h0M1448 708h0M1467 721h0M1332 762h0M1451 713h0M1390 703h0M1335 767h0M1409 716h0M1367 719h0M1441 705h0M1328 764h0M1402 713h0M1379 729h0M1418 657h0M1436 711h0M1323 770h0M1430 667h0M1397 719h0M1432 713h0M1332 775h0M1409 729h0M1450 730h0M1348 719h0M1367 732h0M1424 714h0M1382 717h0M1401 730h0M1318 732h0M1404 735h0M1436 724h0M1439 729h0M1431 730h0M1348 732h0M1306 735h0M1425 686h0M1325 748h0M1424 727h0M1382 730h0M1366 722h0M1440 671h0M1385 735h0M1459 684h0M1378 732h0M1419 733h0M1355 748h0M1394 676h0M1413 689h0M1412 730h0M1408 759h0M1373 738h0M1366 735h0M1398 687h0M1417 700h0M1461 743h0M1304 759h0M1377 749h0M1394 689h0M1435 690h0M1380 754h0M1454 703h0M1361 741h0M1338 757h0M1370 746h0M1428 687h0M1373 751h0M1447 700h0M1386 690h0M1331 754h0M1405 703h0M1421 647h0M1324 751h0M1365 752h0M1423 693h0M1368 757h0M1442 706h0M1359 708h0M1400 709h0M1458 687h0M1358 712h0M1416 690h0M1435 703h0M1380 767h0M1319 757h0M1393 706h0M1338 770h0M1414 765h0M1386 703h0M1427 704h0M1446 717h0M1430 709h0M1330 771h0M1421 660h0M1349 757h0M1423 706h0M1442 719h0M1307 760h0M1400 722h0M1439 650h0M1358 725h0M1416 703h0M1457 704h0M1374 706h0M1415 707h0M1319 770h0M1418 712h0M1451 660h0M1318 774h0M1337 787h0M1409 663h0M1427 717h0M1411 709h0M1430 722h0M1295 763h0M1314 776h0M1401 664h0M1346 728h0M1390 771h0M1362 709h0M1307 773h0M1381 722h0M1422 723h0M1439 663h0M1383 731h0M1415 720h0M1360 784h0M1434 733h0M1299 774h0M1418 725h0M1431 664h0M1376 728h0M1302 779h0M1411 722h0M1369 725h0M1410 726h0M1413 731h0M1401 677h0M1346 741h0M1404 682h0M1445 720h0M1403 723h0M1387 715h0M1406 728h0M1419 667h0M1364 731h0M1438 680h0M1396 683h0M1399 725h0M1431 677h0M1334 744h0M1375 745h0M1391 726h0M1394 731h0M1352 734h0M1426 683h0M1329 750h0M1387 728h0M1461 677h0M1406 741h0M1345 731h0M1364 744h0M1438 693h0M1322 747h0M1453 678h0M1398 742h0M1356 745h0M1414 686h0M1433 736h0M1359 750h0M1391 739h0M1449 680h0M1394 744h0M1435 745h0M1352 747h0M1426 696h0M1371 760h0M1345 744h0M1463 699h0M1380 701h0M1421 702h0M1437 683h0M1356 758h0M1395 686h0M1340 750h0M1414 699h0M1416 745h0M1374 748h0M1407 696h0M1448 697h0M1310 763h0M1441 694h0M1427 759h0M1444 699h0M1344 761h0M1363 774h0M1328 753h0M1402 702h0M1421 715h0M1437 696h0M1436 700h0M1439 705h0M1372 715h0M1358 780h0M1448 710h0M1432 702h0M1332 764h0M1351 777h0M1390 705h0M1464 654h0M1409 718h0M1293 772h0M1367 721h0M1411 764h0M1402 715h0M1443 716h0M1360 718h0M1434 667h0M1379 731h0M1321 726h0M1455 726h0M1439 718h0M1323 772h0M1429 673h0M1432 715h0M1316 769h0M1390 718h0M1367 734h0M1408 735h0M1424 716h0M1382 719h0M1327 783h0M1401 732h0M1385 724h0M1404 737h0M1362 777h0M1320 780h0M1433 657h0M1378 721h0M1397 734h0M1438 735h0M1355 737h0M1429 686h0M1412 719h0M1431 732h0M1348 734h0M1389 735h0M1447 676h0M1350 743h0M1382 732h0M1401 745h0M1366 724h0M1440 673h0M1385 737h0M1343 740h0M1461 732h0M1433 670h0M1419 735h0M1377 738h0M1410 686h0M1396 751h0M1380 743h0M1454 692h0M1313 753h0M1453 733h0M1370 735h0M1428 676h0M1373 740h0M1392 753h0M1350 756h0M1308 759h0M1440 686h0M1407 738h0M1324 740h0M1442 695h0M1375 705h0M1458 676h0M1377 751h0M1416 679h0M1361 743h0M1435 692h0M1380 756h0M1454 705h0M1319 746h0M1338 759h0M1437 738h0M1469 690h0M1331 756h0M1446 706h0M1420 690h0M1349 746h0M1423 695h0M1381 698h0M1400 711h0M1458 689h0M1416 692h0M1361 756h0M1435 705h0M1374 695h0M1393 708h0M1338 772h0M1434 709h0M1354 716h0M1395 754h0M1427 706h0M1446 719h0M1411 698h0M1311 760h0M1430 711h0M1330 773h0M1314 765h0M1462 700h0M1333 778h0M1420 703h0M1307 762h0M1326 775h0M1358 727h0M1457 706h0M1341 760h0M1415 709h0M1360 773h0M1434 722h0M1374 708h0M1418 714h0M1376 717h0M1353 770h0M1411 711h0M1430 724h0M1369 714h0M1388 727h0M1429 728h0M1346 730h0M1445 709h0M1403 712h0M1422 725h0M1439 665h0M1339 727h0M1406 717h0M1425 730h0M1383 733h0M1424 771h0M1415 722h0M1399 714h0M1418 727h0M1376 730h0M1450 679h0M1408 682h0M1433 712h0M1452 725h0M1336 779h0M1369 727h0M1327 730h0M1413 733h0M1371 736h0M1404 684h0M1403 725h0M1422 738h0M1387 717h0M1419 669h0M1364 733h0M1383 746h0M1399 727h0M1357 730h0M1398 731h0M1417 744h0M1334 746h0M1433 725h0M1452 738h0M1391 728h0M1465 677h0M1394 733h0M1352 736h0M1426 685h0M1371 749h0M1329 752h0M1387 730h0M1428 731h0M1461 679h0M1419 682h0M1364 746h0M1405 747h0M1460 683h0M1463 688h0M1363 750h0M1396 698h0M1322 749h0M1453 680h0M1398 744h0M1356 747h0M1375 760h0M1414 688h0M1359 752h0M1458 731h0M1317 755h0M1449 682h0M1394 746h0M1407 685h0M1352 749h0M1426 698h0M1329 765h0M1428 744h0M1386 747h0M1405 760h0M1446 761h0M1444 688h0M1344 750h0M1363 763h0M1421 704h0M1420 745h0M1379 707h0M1423 750h0M1356 760h0M1456 698h0M1359 765h0M1317 768h0M1446 653h0M1416 747h0M1374 750h0M1448 699h0M1432 691h0M1351 766h0M1368 706h0M1442 655h0M1409 707h0M1441 696h0M1444 701h0M1328 755h0M1402 704h0M1421 717h0M1337 723h0M1362 753h0M1436 702h0M1439 707h0M1339 769h0M1342 774h0M1374 763h0M1333 725h0M1448 712h0M1432 704h0M1418 769h0M1409 720h0M1422 659h0M1424 705h0M1369 769h0M1401 721h0M1404 726h0M1337 736h0M1436 715h0M1378 710h0M1323 774h0M1397 723h0M1342 787h0M1399 769h0M1445 656h0M1390 720h0M1357 772h0M1348 723h0M1408 737h0M1425 677h0M1325 739h0M1401 734h0M1385 726h0M1459 675h0M1387 772h0M1461 721h0M1378 723h0M1452 672h0M1397 736h0M1336 726h0M1396 740h0M1413 680h0M1313 742h0M1412 721h0M1431 734h0M1370 724h0M1389 737h0M1447 678h0M1392 742h0M1438 629h0M1405 681h0M1366 726h0M1385 739h0M1459 688h0M1324 729h0M1343 742h0M1417 691h0M1433 672h0M1419 737h0M1438 750h0M1336 739h0M1377 740h0M1396 753h0M1435 681h0M1338 748h0M1453 735h0M1370 737h0M1428 678h0M1373 742h0M1447 691h0M1392 755h0M1386 681h0M1331 745h0M1308 761h0M1462 676h0M1366 739h0M1426 753h0M1365 743h0M1368 748h0M1442 697h0M1356 694h0M1304 763h0M1377 753h0M1361 745h0M1435 694h0M1393 697h0M1338 761h0M1296 764h0M1395 743h0M1386 694h0M1427 695h0M1372 759h0M1446 708h0M1330 762h0M1407 753h0M1420 692h0M1365 756h0M1349 748h0M1423 697h0M1368 761h0M1442 710h0M1400 713h0M1457 695h0M1402 759h0M1361 758h0M1393 710h0M1434 711h0M1351 713h0M1395 756h0M1427 708h0M1411 700h0M1311 762h0M1430 713h0M1330 775h0M1443 652h0M1388 716h0M1314 767h0M1420 705h0M1346 719h0M1423 710h0M1390 762h0M1307 764h0M1422 714h0M1425 719h0M1358 729h0M1457 708h0M1341 762h0M1415 711h0M1399 703h0M1432 651h0M1418 716h0M1376 719h0M1450 668h0M1353 772h0M1411 713h0M1311 775h0M1295 767h0M1369 716h0M1388 729h0M1346 732h0M1403 714h0M1406 719h0M1306 781h0M1425 732h0M1364 722h0M1438 671h0M1383 735h0M1415 724h0M1299 778h0M1357 719h0M1376 732h0M1417 733h0M1450 681h0M1408 684h0M1433 714h0M1378 778h0M1410 730h0M1394 722h0M1445 724h0M1371 738h0M1387 719h0M1406 732h0M1447 733h0M1345 722h0M1322 738h0M1357 732h0M1398 733h0M1389 684h0M1356 736h0M1375 749h0M1433 727h0M1391 730h0M1410 743h0M1449 671h0M1394 735h0M1468 684h0M1407 674h0M1352 738h0M1426 687h0M1371 751h0M1329 754h0M1387 732h0M1428 733h0M1419 684h0M1405 749h0M1363 752h0M1398 746h0M1437 674h0M1456 687h0M1356 749h0M1414 690h0M1359 754h0M1317 757h0M1416 736h0M1449 684h0M1435 749h0M1352 751h0M1393 752h0M1384 703h0M1329 767h0M1441 685h0M1386 749h0M1444 690h0M1344 752h0M1463 703h0M1328 744h0M1402 693h0M1421 706h0M1379 709h0M1420 747h0M1437 687h0M1395 690h0M1340 754h0M1414 703h0M1400 768h0M1372 706h0M1317 770h0M1358 771h0M1448 701h0M1393 765h0M1432 693h0M1332 755h0M1365 703h0M1351 768h0M1464 645h0M1409 709h0M1367 712h0M1402 706h0M1347 770h0M1421 719h0M1360 709h0M1379 722h0M1337 725h0M1436 704h0M1455 717h0M1439 709h0M1397 712h0M1429 664h0M1333 727h0M1300 779h0M1432 706h0M1332 768h0M1390 709h0M1409 722h0M1367 725h0M1424 707h0M1443 720h0M1360 722h0M1401 723h0M1459 664h0M1404 728h0M1397 725h0M1336 715h0M1355 728h0M1429 677h0M1399 771h0M1431 723h0M1348 725h0M1389 726h0M1408 739h0M1392 731h0M1325 741h0M1424 720h0M1382 723h0M1401 736h0M1366 715h0M1440 664h0M1304 739h0M1419 726h0M1378 725h0M1438 739h0M1336 728h0M1355 741h0M1396 742h0M1454 683h0M1313 744h0M1412 723h0M1431 736h0M1370 726h0M1389 739h0M1408 752h0M1428 667h0M1392 744h0M1465 734h0M1382 736h0M1366 728h0M1385 741h0M1398 680h0M1343 744h0M1419 739h0M1435 683h0M1338 750h0M1370 739h0M1428 680h0M1373 744h0M1414 745h0M1447 693h0M1331 747h0M1350 760h0M1426 755h0M1324 744h0M1423 686h0M1368 750h0M1442 699h0M1326 753h0M1359 701h0M1400 702h0M1361 747h0M1380 760h0M1393 699h0M1338 763h0M1437 742h0M1395 745h0M1427 697h0M1446 710h0M1444 637h0M1430 702h0M1388 705h0M1420 694h0M1349 750h0M1423 699h0M1368 763h0M1442 712h0M1358 718h0M1416 696h0M1374 699h0M1434 713h0M1395 758h0M1469 707h0M1427 710h0M1411 702h0M1430 715h0M1314 769h0M1443 654h0M1388 718h0M1346 721h0M1445 700h0M1390 764h0M1381 715h0M1422 716h0M1439 656h0M1425 721h0M1341 764h0M1415 713h0M1399 705h0M1299 767h0M1418 718h0M1376 721h0M1450 670h0M1466 651h0M1411 715h0M1452 716h0M1369 718h0M1443 667h0M1410 719h0M1346 734h0M1403 716h0M1348 780h0M1422 729h0M1406 721h0M1425 734h0M1309 788h0M1440 719h0M1376 734h0M1408 686h0M1410 732h0M1429 745h0M1394 724h0M1426 676h0M1371 740h0M1403 729h0M1370 781h0M1387 721h0M1406 734h0M1419 673h0M1364 737h0M1405 738h0M1438 686h0M1322 740h0M1440 732h0M1412 670h0M1398 735h0M1375 751h0M1392 691h0M1359 743h0M1433 729h0M1391 732h0M1449 673h0M1435 738h0M1371 753h0M1329 756h0M1345 737h0M1405 751h0M1363 754h0M1380 694h0M1421 695h0M1453 684h0M1398 748h0M1437 676h0M1356 751h0M1340 743h0M1414 692h0M1359 756h0M1446 644h0M1407 689h0M1351 757h0M1384 705h0M1428 748h0M1441 687h0M1460 700h0M1444 692h0M1344 754h0M1328 746h0M1421 708h0M1379 711h0M1437 689h0M1423 754h0M1414 705h0M1381 757h0M1372 708h0M1374 754h0M1333 716h0M1432 695h0M1332 757h0M1390 698h0M1335 762h0M1409 711h0M1328 759h0M1402 708h0M1443 709h0M1337 727h0M1362 757h0M1439 711h0M1452 650h0M1397 714h0M1432 708h0M1390 711h0M1335 775h0M1409 724h0M1450 725h0M1367 727h0M1408 728h0M1424 709h0M1341 711h0M1382 712h0M1404 730h0M1378 714h0M1323 778h0M1397 727h0M1438 728h0M1355 730h0M1429 679h0M1394 658h0M1445 660h0M1412 712h0M1431 725h0M1315 779h0M1392 733h0M1350 736h0M1424 722h0M1401 738h0M1366 717h0M1459 679h0M1404 743h0M1343 733h0M1417 682h0M1375 685h0M1433 663h0M1378 727h0M1419 728h0M1377 731h0M1396 744h0M1380 736h0M1313 746h0M1454 685h0M1412 725h0M1431 738h0M1370 728h0M1389 741h0M1350 749h0M1449 728h0M1366 730h0M1440 679h0M1407 731h0M1426 744h0M1343 746h0M1384 747h0M1442 688h0M1375 698h0M1419 741h0M1361 736h0M1435 685h0M1380 749h0M1338 752h0M1437 731h0M1370 741h0M1296 755h0M1428 682h0M1373 746h0M1405 698h0M1446 699h0M1372 750h0M1363 701h0M1308 765h0M1407 744h0M1420 683h0M1365 747h0M1384 760h0M1349 739h0M1442 701h0M1326 755h0M1441 742h0M1400 704h0M1458 682h0M1416 685h0M1361 749h0M1435 698h0M1402 750h0M1319 752h0M1353 750h0M1427 699h0M1446 712h0M1411 691h0M1430 704h0M1330 766h0M1420 696h0M1365 760h0M1349 752h0M1423 701h0M1381 704h0M1326 768h0M1457 699h0M1341 753h0M1415 702h0M1360 766h0M1434 715h0M1418 707h0M1337 782h0M1353 763h0M1411 704h0M1430 717h0M1369 707h0M1443 656h0M1388 720h0M1429 721h0M1432 763h0M1445 702h0M1403 705h0M1307 768h0M1422 718h0M1425 723h0M1383 726h0M1341 766h0M1399 707h0M1418 720h0M1302 774h0M1376 723h0M1452 718h0M1369 720h0M1410 721h0M1429 734h0M1413 726h0M1401 672h0M1445 715h0M1403 718h0M1422 731h0M1387 710h0M1406 723h0M1425 736h0M1364 726h0M1438 675h0M1383 739h0M1399 720h0M1440 721h0M1398 724h0M1431 672h0M1417 737h0M1334 739h0M1375 740h0M1433 718h0M1452 731h0M1391 721h0M1394 726h0M1352 729h0M1426 678h0M1371 742h0M1329 745h0M1387 723h0M1419 675h0M1364 739h0M1405 740h0M1396 691h0M1440 734h0M1398 737h0M1417 750h0M1356 740h0M1375 753h0M1359 745h0M1391 734h0M1317 748h0M1449 675h0M1435 740h0M1352 742h0M1426 691h0M1371 755h0M1310 745h0M1442 635h0M1428 737h0M1441 676h0M1386 740h0M1405 753h0M1444 681h0M1344 743h0M1347 748h0M1421 697h0M1379 700h0M1420 738h0M1437 678h0M1423 743h0M1456 691h0M1356 753h0M1340 745h0M1400 759h0M1407 691h0M1374 743h0M1310 758h0M1451 697h0M1409 700h0M1386 753h0M1444 694h0M1344 756h0M1430 759h0M1363 769h0M1328 748h0M1402 697h0M1347 761h0M1421 710h0M1305 764h0M1379 713h0M1423 756h0M1395 694h0M1436 695h0M1439 700h0M1372 710h0M1339 762h0M1342 767h0M1374 756h0M1351 772h0M1390 700h0M1409 713h0M1354 777h0M1312 780h0M1402 710h0M1443 711h0M1369 762h0M1401 714h0M1434 662h0M1404 719h0M1436 708h0M1455 721h0M1320 762h0M1378 703h0M1397 716h0M1432 710h0M1332 772h0M1316 764h0M1390 713h0M1431 714h0M1422 665h0M1367 729h0M1334 781h0M1424 711h0M1443 724h0M1382 714h0M1401 727h0M1404 732h0M1378 716h0M1397 729h0M1355 732h0M1396 733h0M1429 681h0M1399 775h0M1412 714h0M1357 778h0M1431 727h0M1389 730h0M1408 743h0M1373 722h0M1392 735h0M1350 738h0M1424 724h0M1382 727h0M1387 778h0M1419 730h0M1303 784h0M1377 733h0M1396 746h0M1454 687h0M1338 741h0M1412 727h0M1370 730h0M1389 743h0M1373 735h0M1447 684h0M1392 748h0M1350 751h0M1449 730h0M1366 732h0M1365 736h0M1368 741h0M1442 690h0M1304 756h0M1377 746h0M1361 738h0M1435 687h0M1380 751h0M1454 700h0M1393 690h0M1338 754h0M1296 757h0M1395 736h0M1428 684h0M1414 749h0M1331 751h0M1446 701h0M1430 693h0M1333 760h0M1365 749h0M1349 741h0M1423 690h0M1368 754h0M1442 703h0M1307 744h0M1381 693h0M1326 757h0M1400 706h0M1416 687h0M1361 751h0M1393 703h0M1337 771h0M1395 749h0M1353 752h0M1427 701h0M1372 765h0M1411 693h0M1430 706h0M1369 696h0M1420 698h0M1349 754h0M1390 755h0M1422 707h0M1358 722h0M1341 755h0M1415 704h0M1418 709h0M1318 771h0M1376 712h0M1450 661h0M1353 765h0M1411 706h0M1311 768h0M1452 707h0M1429 723h0M1362 706h0M1403 707h0M1348 771h0M1422 720h0M1406 712h0M1438 664h0M1399 709h0M1431 661h0M1334 728h0M1433 707h0M1452 720h0M1295 773h0M1336 774h0M1410 723h0M1391 710h0M1429 736h0M1413 728h0M1371 731h0M1387 712h0M1406 725h0M1366 774h0M1398 726h0M1417 739h0M1334 741h0M1375 742h0M1433 720h0M1392 682h0M1391 723h0M1410 736h0M1449 664h0M1352 731h0M1426 680h0M1371 744h0M1387 725h0M1428 726h0M1364 741h0M1463 683h0M1363 745h0M1396 693h0M1440 736h0M1398 739h0M1456 680h0M1356 742h0M1375 755h0M1340 734h0M1373 682h0M1458 726h0M1317 750h0M1416 729h0M1449 677h0M1393 745h0M1426 693h0M1384 696h0M1428 739h0M1386 742h0M1444 683h0M1363 758h0M1402 686h0M1347 750h0M1421 699h0M1356 755h0M1340 747h0M1458 739h0M1435 755h0M1374 745h0M1448 694h0M1393 758h0M1432 686h0M1332 748h0M1451 699h0M1351 761h0M1368 701h0M1409 702h0M1441 691h0M1312 769h0M1344 758h0M1347 763h0M1421 712h0M1305 766h0M1379 715h0M1362 748h0M1395 696h0M1381 761h0M1436 697h0M1439 702h0M1298 763h0M1339 764h0M1358 777h0M1397 705h0M1342 769h0M1300 772h0M1332 761h0M1451 712h0M1316 753h0M1335 766h0M1409 715h0M1422 654h0M1424 700h0M1369 764h0M1443 713h0M1327 767h0M1401 716h0M1362 761h0M1320 764h0M1439 715h0M1397 718h0M1355 721h0M1357 767h0M1390 715h0M1389 719h0M1408 732h0M1392 724h0M1325 734h0M1424 713h0M1382 716h0M1401 729h0M1385 721h0M1343 724h0M1320 777h0M1378 718h0M1419 719h0M1396 735h0M1454 676h0M1412 716h0M1431 729h0M1389 732h0M1373 724h0M1447 673h0M1392 737h0M1331 727h0M1350 740h0M1382 729h0M1366 721h0M1385 734h0M1426 735h0M1384 738h0M1345 783h0M1419 732h0M1438 745h0M1396 748h0M1361 727h0M1380 740h0M1338 743h0M1412 729h0M1370 732h0M1428 673h0M1373 737h0M1414 738h0M1447 686h0M1350 753h0M1407 735h0M1365 738h0M1368 743h0M1442 692h0M1400 695h0M1361 740h0M1435 689h0M1380 753h0M1319 743h0M1338 756h0M1379 757h0M1296 759h0M1353 741h0M1427 690h0M1372 754h0M1446 703h0M1430 695h0M1330 757h0M1462 684h0M1407 748h0M1420 687h0M1365 751h0M1349 743h0M1423 692h0M1442 705h0M1381 695h0M1326 759h0M1455 644h0M1400 708h0M1416 689h0M1360 757h0M1434 706h0M1379 770h0M1337 773h0M1395 751h0M1372 767h0M1411 695h0M1388 711h0M1333 775h0M1349 756h0M1390 757h0M1445 693h0M1307 759h0M1348 760h0M1422 709h0M1425 714h0M1457 703h0M1341 757h0M1415 706h0M1360 770h0M1418 711h0M1302 765h0M1376 714h0M1450 663h0M1411 708h0M1311 770h0M1388 724h0M1429 725h0M1445 706h0M1403 709h0M1422 722h0M1406 714h0M1306 776h0M1425 727h0M1364 717h0M1383 730h0M1399 711h0M1440 712h0M1376 727h0M1417 728h0M1433 709h0M1391 712h0M1424 660h0M1410 725h0M1394 717h0M1413 730h0M1297 784h0M1403 722h0M1387 714h0M1406 727h0M1447 728h0M1364 730h0M1438 679h0M1383 743h0M1322 733h0M1398 728h0M1417 741h0M1356 731h0M1375 744h0M1359 736h0M1391 725h0M1394 730h0M1352 733h0M1371 746h0M1329 749h0M1428 728h0M1419 679h0M1386 731h0M1363 747h0M1453 677h0M1398 741h0M1456 682h0M1356 744h0M1375 757h0M1340 736h0M1359 749h0M1317 752h0M1446 637h0M1449 679h0M1448 683h0M1393 747h0M1352 746h0M1441 680h0M1386 744h0M1405 757h0M1446 758h0M1344 747h0M1463 698h0M1363 760h0M1328 739h0M1421 701h0M1420 742h0M1379 704h0M1437 682h0M1395 685h0M1340 749h0M1414 698h0M1381 750h0M1372 701h0M1446 650h0M1358 766h0M1374 747h0M1432 688h0M1332 750h0M1451 701h0M1351 763h0M1409 704h0M1354 768h0M1441 693h0M1425 648h0M1444 698h0M1402 701h0M1388 766h0M1286 755h0M1305 768h0M1379 717h0M1362 750h0M1436 699h0M1320 753h0M1323 758h0M1374 760h0M1432 701h0M1332 763h0M1316 755h0M1390 704h0M1335 768h0M1409 717h0M1450 718h0M1367 720h0M1408 721h0M1424 702h0M1443 715h0M1382 705h0M1401 718h0M1346 782h0M1385 710h0M1404 723h0M1436 712h0M1378 707h0M1323 771h0M1397 720h0M1438 721h0M1429 672h0M1316 768h0M1412 705h0M1431 718h0M1450 731h0M1315 772h0M1389 721h0M1424 715h0M1382 718h0M1385 723h0M1345 772h0M1419 721h0M1378 720h0M1377 724h0M1396 737h0M1380 729h0M1412 718h0M1431 731h0M1370 721h0M1389 734h0M1373 726h0M1392 739h0M1366 723h0M1440 672h0M1407 724h0M1426 737h0M1384 740h0M1458 662h0M1377 737h0M1361 729h0M1380 742h0M1338 745h0M1437 724h0M1370 734h0M1428 675h0M1373 739h0M1372 743h0M1446 692h0M1449 734h0M1407 737h0M1420 676h0M1365 740h0M1349 732h0M1368 745h0M1442 694h0M1326 748h0M1400 697h0M1458 675h0M1435 691h0M1402 743h0M1319 745h0M1338 758h0M1379 759h0M1395 740h0M1353 743h0M1427 692h0M1446 705h0M1430 697h0M1330 759h0M1420 689h0M1365 753h0M1349 745h0M1423 694h0M1368 758h0M1326 761h0M1441 748h0M1400 710h0M1360 759h0M1434 708h0M1318 762h0M1337 775h0M1427 705h0M1411 697h0M1311 759h0M1430 710h0M1314 764h0M1388 713h0M1307 761h0M1348 762h0M1422 711h0M1439 651h0M1425 716h0M1383 719h0M1399 700h0M1418 713h0M1321 780h0M1433 698h0M1410 714h0M1413 719h0M1390 772h0M1403 711h0M1406 716h0M1425 729h0M1383 732h0M1399 713h0M1440 714h0M1376 729h0M1375 733h0M1391 714h0M1336 778h0M1410 727h0M1394 719h0M1352 722h0M1426 671h0M1371 735h0M1387 716h0M1406 729h0M1345 719h0M1322 735h0M1440 727h0M1453 666h0M1398 730h0M1456 671h0M1356 733h0M1301 797h0M1359 738h0M1391 727h0M1449 668h0M1394 732h0M1352 735h0M1426 684h0M1345 732h0M1386 733h0M1444 674h0M1347 741h0M1398 743h0M1356 746h0M1442 749h0M1340 738h0M1359 751h0M1400 752h0M1372 690h0M1317 754h0M1416 733h0M1374 736h0M1448 685h0M1310 751h0M1351 752h0M1409 693h0M1354 757h0M1441 682h0M1460 695h0M1444 687h0M1344 749h0M1363 762h0M1347 754h0M1421 703h0M1305 757h0M1420 744h0M1423 749h0M1442 762h0M1455 701h0M1400 765h0M1298 754h0M1339 755h0M1342 760h0M1374 749h0M1448 698h0M1332 752h0M1390 693h0M1335 757h0M1409 706h0M1425 650h0M1328 754h0M1402 703h0M1434 655h0M1404 712h0M1381 765h0M1439 706h0M1339 768h0M1429 661h0M1432 703h0M1316 757h0M1390 706h0M1431 707h0M1293 773h0M1334 774h0M1408 723h0M1367 722h0M1325 725h0M1424 704h0M1382 707h0M1404 725h0M1378 709h0M1452 658h0M1397 722h0M1355 725h0M1396 726h0M1429 674h0M1412 707h0M1431 720h0M1389 723h0M1408 736h0M1373 715h0M1447 664h0M1392 728h0M1350 731h0M1424 717h0M1394 774h0M1382 720h0M1385 725h0M1426 726h0M1343 728h0M1419 723h0M1377 726h0M1396 739h0M1380 731h0M1454 680h0M1412 720h0M1357 784h0M1370 723h0M1456 726h0M1392 741h0M1350 744h0M1449 723h0M1308 747h0M1407 726h0M1365 729h0M1384 742h0M1368 734h0M1442 683h0M1419 736h0M1377 739h0M1361 731h0M1338 747h0M1437 726h0M1395 729h0M1446 694h0M1448 740h0M1420 678h0M1365 742h0M1349 734h0M1423 683h0M1368 747h0M1326 750h0M1441 737h0M1400 699h0M1416 680h0M1361 744h0M1402 745h0M1434 697h0M1451 637h0M1337 764h0M1395 742h0M1414 755h0M1353 745h0M1427 694h0M1411 686h0M1430 699h0M1333 766h0M1349 747h0M1390 748h0M1423 696h0M1381 699h0M1400 712h0M1358 715h0M1457 694h0M1341 748h0M1415 697h0M1360 761h0M1434 710h0M1379 774h0M1418 702h0M1318 764h0M1376 705h0M1411 699h0M1311 761h0M1430 712h0M1388 715h0M1429 716h0M1445 697h0M1403 700h0M1422 713h0M1406 705h0M1425 718h0M1383 721h0M1415 710h0M1399 702h0M1302 769h0M1376 718h0M1433 700h0M1378 764h0M1410 716h0M1371 724h0M1403 713h0M1422 726h0M1387 705h0M1406 718h0M1425 731h0M1345 708h0M1364 721h0M1438 670h0M1309 785h0M1383 734h0M1357 718h0M1398 719h0M1431 667h0M1301 786h0M1375 735h0M1334 734h0M1433 713h0M1392 675h0M1410 729h0M1394 721h0M1413 734h0M1426 673h0M1371 737h0M1329 740h0M1387 718h0M1428 719h0M1345 721h0M1460 671h0M1405 735h0M1398 732h0M1437 660h0M1375 748h0M1359 740h0M1391 729h0M1449 670h0M1435 735h0M1352 737h0M1426 686h0M1393 738h0M1310 740h0M1428 732h0M1386 735h0M1444 676h0M1363 751h0M1402 679h0M1421 692h0M1379 695h0M1420 733h0M1356 748h0M1416 735h0M1374 738h0M1448 687h0M1393 751h0M1432 679h0M1351 754h0M1335 746h0M1409 695h0M1354 759h0M1441 684h0M1367 698h0M1312 762h0M1444 689h0M1344 751h0M1388 757h0M1421 705h0M1305 759h0M1420 746h0M1362 741h0M1400 767h0M1339 757h0M1397 698h0M1342 762h0M1416 748h0M1300 765h0M1448 700h0M1432 692h0M1451 705h0M1409 708h0M1450 709h0M1348 698h0M1367 711h0M1443 706h0M1360 708h0M1401 709h0M1404 714h0M1362 754h0M1436 703h0M1320 757h0M1439 708h0M1323 762h0M1397 711h0M1342 775h0M1415 765h0M1316 759h0M1390 708h0M1389 712h0M1334 776h0M1408 725h0M1392 717h0M1424 706h0M1382 709h0M1401 722h0M1404 727h0M1417 666h0M1320 770h0M1419 712h0M1355 727h0M1396 728h0M1429 676h0M1399 770h0M1412 709h0M1431 722h0M1370 712h0M1389 725h0M1408 738h0M1373 717h0M1392 730h0M1350 733h0M1394 776h0M1301 733h0M1419 725h0M1438 738h0M1396 741h0M1361 720h0M1435 669h0M1394 668h0M1454 682h0M1380 733h0M1412 722h0M1453 723h0M1370 725h0M1373 730h0M1405 682h0M1350 746h0M1407 728h0M1426 741h0M1365 731h0M1384 744h0M1368 736h0M1400 688h0M1441 726h0M1361 733h0M1435 682h0M1380 746h0M1421 747h0M1437 728h0M1395 731h0M1414 744h0M1446 696h0M1330 750h0M1462 677h0M1333 755h0M1407 741h0M1365 744h0M1349 736h0M1423 685h0M1368 749h0M1326 752h0M1400 701h0M1441 739h0M1416 682h0M1319 749h0M1393 698h0M1434 699h0M1360 750h0M1337 766h0M1395 744h0M1436 745h0M1353 747h0M1427 696h0M1372 760h0M1446 709h0M1430 701h0M1330 763h0M1333 768h0M1349 749h0M1390 750h0M1423 698h0M1381 701h0M1455 650h0M1422 702h0M1367 766h0M1326 765h0M1425 707h0M1325 769h0M1341 750h0M1415 699h0M1360 763h0M1434 712h0M1418 704h0M1337 779h0M1411 701h0M1369 704h0M1314 768h0M1355 769h0M1429 718h0M1388 717h0M1445 699h0M1403 702h0M1422 715h0M1425 720h0M1364 710h0M1341 763h0M1399 704h0M1418 717h0M1459 718h0M1302 771h0M1417 721h0M1378 766h0M1391 705h0M1410 718h0M1429 731h0M1394 710h0M1413 723h0M1297 777h0M1371 726h0M1403 715h0M1348 779h0M1387 707h0M1406 720h0M1447 721h0M1364 723h0M1438 672h0M1383 736h0M1357 720h0M1398 721h0M1453 657h0M1417 734h0M1375 737h0M1433 715h0M1391 718h0M1410 731h0M1449 659h0M1394 723h0M1294 785h0M1413 736h0M1371 739h0M1387 720h0M1428 721h0M1386 724h0M1405 737h0M1363 740h0M1421 681h0M1324 785h0M1398 734h0M1456 675h0M1356 737h0M1442 740h0M1375 750h0M1414 678h0M1359 742h0M1416 724h0M1449 672h0M1448 676h0M1393 740h0M1467 689h0M1352 739h0M1351 743h0M1354 748h0M1460 686h0M1444 678h0M1344 740h0M1463 691h0M1363 753h0M1328 732h0M1347 745h0M1420 735h0M1437 675h0M1423 740h0M1395 678h0M1340 742h0M1400 756h0M1458 734h0M1317 758h0M1358 759h0M1446 643h0M1416 737h0M1435 750h0M1374 740h0M1432 681h0M1332 743h0M1390 684h0M1335 748h0M1409 697h0M1441 686h0M1312 764h0M1427 751h0M1411 743h0M1444 691h0M1328 745h0M1347 758h0M1379 710h0M1420 748h0M1346 762h0M1362 743h0M1381 756h0M1455 705h0M1320 746h0M1439 697h0M1339 759h0M1358 772h0M1323 751h0M1397 700h0M1342 764h0M1300 767h0M1316 748h0M1293 764h0M1367 713h0M1424 695h0M1443 708h0M1382 698h0M1401 711h0M1385 703h0M1362 756h0M1436 705h0M1339 772h0M1378 700h0M1452 649h0M1397 713h0M1438 714h0M1445 646h0M1357 762h0M1412 698h0M1450 724h0M1389 714h0M1408 727h0M1424 708h0M1401 724h0M1385 716h0M1404 729h0M1419 714h0M1396 730h0M1412 711h0M1431 724h0M1370 714h0M1315 778h0M1389 727h0M1392 732h0M1350 735h0M1449 714h0M1366 716h0M1407 717h0M1440 665h0M1417 681h0M1384 733h0M1419 727h0M1377 730h0M1394 670h0M1338 738h0M1370 727h0M1428 668h0M1414 733h0M1447 681h0M1331 735h0M1446 685h0M1350 748h0M1462 666h0M1407 730h0M1365 733h0M1384 746h0M1368 738h0M1442 687h0M1441 728h0M1361 735h0M1421 749h0M1338 751h0M1379 752h0M1395 733h0M1353 736h0M1427 685h0M1372 749h0M1446 698h0M1430 690h0M1462 679h0M1388 693h0M1420 682h0M1365 746h0M1368 751h0M1442 700h0M1400 703h0M1457 685h0M1415 688h0M1360 752h0M1319 751h0M1318 755h0M1337 768h0M1321 760h0M1353 749h0M1427 698h0M1372 762h0M1411 690h0M1430 703h0M1409 765h0M1348 755h0M1422 704h0M1381 703h0M1457 698h0M1341 752h0M1415 701h0M1299 755h0M1418 706h0M1318 768h0M1431 645h0M1376 709h0M1321 773h0M1411 703h0M1452 704h0M1397 768h0M1311 765h0M1378 755h0M1314 770h0M1355 771h0M1413 712h0M1445 701h0M1464 714h0M1403 704h0M1422 717h0M1367 781h0M1425 722h0M1438 661h0M1383 725h0M1382 766h0M1399 706h0M1299 768h0M1302 773h0M1417 723h0M1433 704h0M1336 771h0M1410 720h0M1429 733h0M1394 712h0M1413 725h0M1371 728h0M1403 717h0M1406 722h0M1447 723h0M1438 674h0M1366 771h0M1440 720h0M1398 723h0M1417 736h0M1356 726h0M1375 739h0M1433 717h0M1391 720h0M1394 725h0M1352 728h0M1426 677h0M1371 741h0M1428 723h0M1345 725h0M1386 726h0M1441 662h0M1363 742h0M1347 734h0M1421 683h0M1453 672h0M1398 736h0M1356 739h0M1340 731h0M1359 744h0M1400 745h0M1416 726h0M1374 729h0M1351 745h0M1428 736h0M1354 750h0M1441 675h0M1386 739h0M1427 740h0M1463 693h0M1430 745h0M1363 755h0M1347 747h0M1421 696h0M1360 686h0M1379 699h0M1420 737h0M1423 742h0M1340 744h0M1436 681h0M1455 694h0M1469 629h0M1342 753h0M1374 742h0M1448 691h0M1393 755h0M1332 745h0M1351 758h0M1335 750h0M1409 699h0M1411 745h0M1328 747h0M1369 748h0M1402 696h0M1443 697h0M1362 745h0M1436 694h0M1439 699h0M1339 761h0M1323 753h0M1397 702h0M1300 769h0M1415 756h0M1332 758h0M1316 750h0M1390 699h0M1431 700h0M1367 715h0M1408 716h0M1443 710h0M1382 700h0M1327 764h0M1385 705h0M1404 718h0M1378 702h0M1452 651h0M1397 715h0M1383 780h0M1355 718h0M1300 782h0M1412 700h0M1431 713h0M1376 777h0M1450 726h0M1315 767h0M1408 729h0M1447 657h0M1392 721h0M1424 710h0M1350 724h0M1382 713h0M1385 718h0M1459 667h0M1343 721h0M1403 772h0M1419 716h0M1364 780h0M1303 770h0M1377 719h0M1396 732h0M1380 724h0M1413 672h0M1454 673h0M1412 713h0M1315 780h0M1389 729h0M1447 670h0M1392 734h0M1350 737h0M1308 740h0M1407 719h0M1384 735h0M1419 729h0M1377 732h0M1396 745h0M1361 724h0M1380 737h0M1453 727h0M1414 735h0M1372 738h0M1407 732h0M1420 671h0M1365 735h0M1384 748h0M1349 727h0M1368 740h0M1442 689h0M1441 730h0M1361 737h0M1434 690h0M1379 754h0M1338 753h0M1395 735h0M1353 738h0M1372 751h0M1446 700h0M1411 679h0M1333 759h0M1448 746h0M1365 748h0M1423 689h0M1368 753h0M1400 705h0M1358 708h0M1457 687h0M1360 754h0M1434 703h0M1418 695h0M1337 770h0M1321 762h0M1353 751h0M1439 754h0M1411 692h0M1311 754h0M1397 757h0M1430 705h0M1330 767h0M1388 708h0M1307 756h0M1348 757h0M1422 706h0M1403 693h0M1406 698h0M1425 711h0M1342 713h0M1383 714h0M1424 752h0M1438 650h0M1415 703h0M1399 695h0M1418 708h0M1376 711h0M1433 693h0M1378 757h0M1336 760h0M1369 708h0M1429 722h0M1413 714h0M1403 706h0M1389 771h0M1422 719h0M1387 698h0M1306 773h0M1392 776h0M1382 768h0M1399 708h0M1385 773h0M1398 712h0M1343 776h0M1334 727h0M1375 728h0M1391 709h0M1410 722h0M1394 714h0M1371 730h0M1329 733h0M1370 771h0M1387 711h0M1447 725h0M1419 663h0M1364 727h0M1363 731h0M1396 679h0M1398 725h0M1417 738h0M1456 666h0M1356 728h0M1375 741h0M1414 669h0M1391 722h0M1394 727h0M1435 728h0M1352 730h0M1393 731h0M1467 680h0M1428 725h0M1386 728h0M1460 677h0M1405 741h0M1446 742h0M1363 744h0M1421 685h0M1453 674h0M1420 726h0M1456 679h0M1340 733h0M1359 746h0M1400 747h0M1317 749h0M1416 728h0M1448 680h0M1393 744h0M1432 672h0M1451 685h0M1409 688h0M1354 752h0M1386 741h0M1312 755h0M1444 682h0M1344 744h0M1328 736h0M1402 685h0M1347 749h0M1421 698h0M1420 739h0M1455 696h0M1400 760h0M1439 688h0M1339 750h0M1358 763h0M1342 755h0M1374 744h0M1448 693h0M1432 685h0M1451 698h0M1351 760h0M1335 752h0M1354 765h0M1425 645h0M1411 747h0M1443 699h0M1327 753h0M1401 702h0M1404 707h0M1337 717h0M1362 747h0M1320 750h0M1323 755h0M1316 752h0M1431 702h0M1450 715h0M1367 717h0M1408 718h0M1334 769h0M1424 699h0M1369 763h0M1382 702h0M1327 766h0M1401 715h0M1385 707h0M1320 763h0M1406 766h0" stroke="#4472c4" stroke-width="3.6" stroke-linecap="round" fill="none"/>
<text x="1124.0" y="767" text-anchor="middle" font-size="13" fill="#333" style="font-family:&quot;Liberation Sans&quot;,sans-serif">0</text>
<text x="1178.1" y="767" text-anchor="middle" font-size="13" fill="#333" style="font-family:&quot;Liberation Sans&quot;,sans-serif">20</text>
<text x="1232.3" y="767" text-anchor="middle" font-size="13" fill="#333" style="font-family:&quot;Liberation Sans&quot;,sans-serif">40</text>
<text x="1286.4" y="767" text-anchor="middle" font-size="13" fill="#333" style="font-family:&quot;Liberation Sans&quot;,sans-serif">60</text>
<text x="1340.6" y="767" text-anchor="middle" font-size="13" fill="#333" style="font-family:&quot;Liberation Sans&quot;,sans-serif">80</text>
<text x="1394.7" y="767" text-anchor="middle" font-size="13" fill="#333" style="font-family:&quot;Liberation Sans&quot;,sans-serif">100</text>
<text x="1448.9" y="767" text-anchor="middle" font-size="13" fill="#333" style="font-family:&quot;Liberation Sans&quot;,sans-serif">120</text>
<text x="1503.0" y="767" text-anchor="middle" font-size="13" fill="#333" style="font-family:&quot;Liberation Sans&quot;,sans-serif">140</text>
<text x="1278" y="545" text-anchor="middle" font-size="17" letter-spacing="-0.25" fill="#333" style="font-family:&quot;Liberation Sans&quot;,sans-serif">净现值<tspan font-size="15"> (Y) </tspan>对<tspan font-size="15"> </tspan>输入变量<tspan font-size="15">_J15 (X)</tspan>的散点图（相关性系数</text>
<text x="1272.5" y="568" text-anchor="middle" font-size="16" fill="#333" style="font-family:&quot;Liberation Sans&quot;,sans-serif">0.667 )</text>
</svg>
<div class="t" style="left:25px;top:15.5px;font-size:38px;line-height:44px;font-weight:normal;letter-spacing:1px;color:#fff;-webkit-text-stroke:0.5px #fff;text-shadow:-1px -1px 0 #000,1px -1px 0 #000,-1px 1px 0 #000,1px 1px 0 #000,2px 2px 0 #000,2.5px 2.5px 0 #000">搜狐号<span style="font-size:35px">@</span>美安君泰</div>
</body></html>
